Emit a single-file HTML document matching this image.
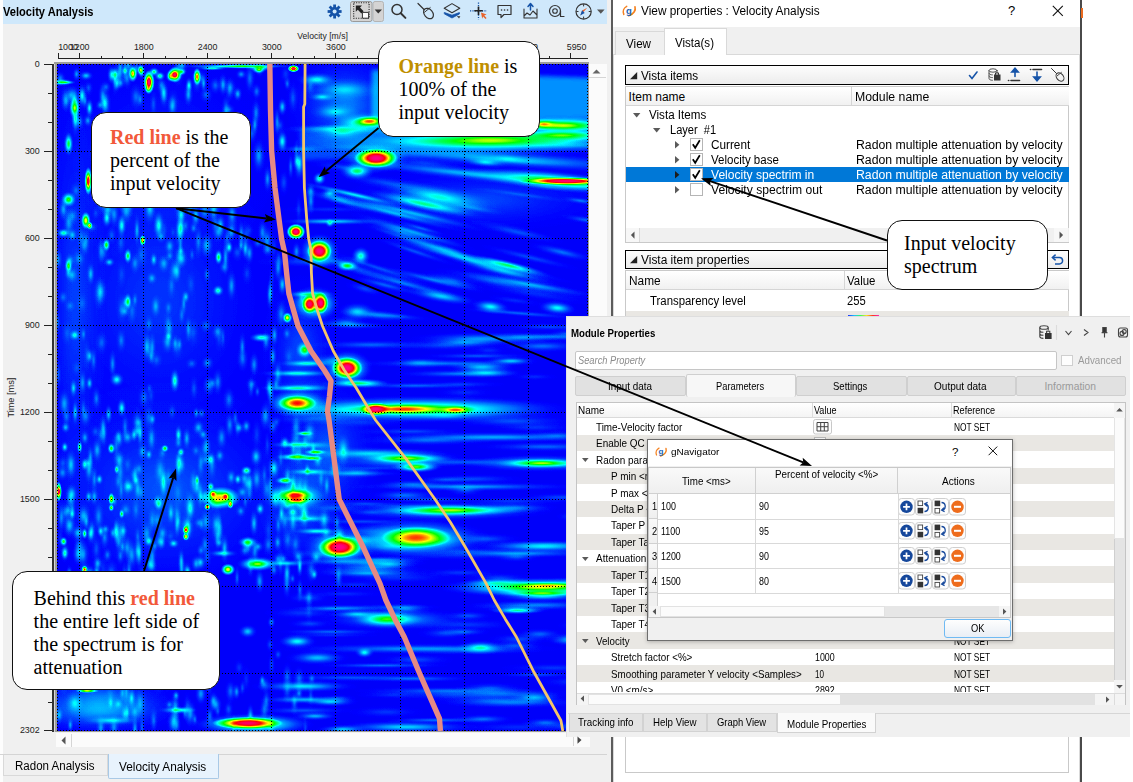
<!DOCTYPE html><html><head><meta charset="utf-8"><title>Velocity Analysis</title><style>

*{box-sizing:border-box;margin:0;padding:0}
html,body{width:1133px;height:782px;overflow:hidden;background:#fff}
body{position:relative;font-family:"Liberation Sans",sans-serif;font-size:12px;color:#000}
.a{position:absolute}
.t{position:absolute;white-space:nowrap;line-height:1}
.ser{font-family:"Liberation Serif",serif}
svg{overflow:visible}


.hdr{left:3px;top:0;width:604px;height:24px;background:#cfe8fb}
.lp{left:0;top:0;width:611px;height:782px;background:#f0f0f0}
.ax{font-size:8.9px;color:#222}
.sb{background:#fbfbfb}


.rw{left:613px;top:0;width:468px;height:782px;background:#fff}
.gh{border:1px solid #000;background:linear-gradient(#fdfdfd,#ececec);height:20px}
.th{background:linear-gradient(#fff,#f1f1f1);border-bottom:1px solid #d5d5d5}
.u{font-size:12px;letter-spacing:-.28px}
.cb{width:13px;height:13px;border:1px solid #b5b5b5;background:#fff}


.mp{left:566px;top:316px;width:564px;height:420.5px;background:#f0f0f0;border-top:1px solid #dedede;border-left:1px solid #e2e2e2}
.m{font-size:11px;letter-spacing:-.2px}
.mtab{position:absolute;top:376px;height:20px;background:#e1e1e1;border:1px solid #cfcfcf;border-radius:2px;font-size:11px;text-align:center;line-height:19px;letter-spacing:-.2px}
.btab{position:absolute;top:714px;height:18px;background:#e3e3e3;border:1px solid #d2d2d2;border-top:none;font-size:11px;text-align:center;line-height:16px;letter-spacing:-.15px}
.dlg{left:646.5px;top:439px;width:366px;height:201.5px;background:#f0f0f0;border:1px solid #6e6e6e;box-shadow:0 1px 4px rgba(0,0,0,.25)}
.dh{position:absolute;background:linear-gradient(#f9f9f9,#efefef);border-right:1px solid #d0d0d0;border-bottom:1px solid #d0d0d0;font-size:11px;text-align:center;letter-spacing:-.2px}


.co{position:absolute;background:#fff;border:1.2px solid #111;border-radius:15px}
.ct{position:absolute;white-space:nowrap;font-family:"Liberation Serif",serif;font-size:20px;line-height:23px;color:#000}
.ct b{font-weight:bold}

</style></head><body>
<div class="a lp"></div>
<div class="a" style="left:0;top:0;width:3px;height:782px;background:#fdfdfd"></div>
<div class="a hdr"></div>
<div class="t" style="left:3.3px;top:6.0px;font-size:12.2px;transform:scaleX(0.912);transform-origin:0 0;font-weight:bold;">Velocity Analysis</div>
<svg class="a" style="left:320px;top:0" width="290" height="24" viewBox="320 0 290 24" fill="none" stroke="#333" stroke-width="1.3" stroke-linecap="round" stroke-linejoin="round"><g transform="translate(334.6,11.5)" stroke="none" fill="#1553a8"><circle r="4.6"/><rect x="-1.4" y="-7" width="2.8" height="4" transform="rotate(0)"/><rect x="-1.4" y="-7" width="2.8" height="4" transform="rotate(45)"/><rect x="-1.4" y="-7" width="2.8" height="4" transform="rotate(90)"/><rect x="-1.4" y="-7" width="2.8" height="4" transform="rotate(135)"/><rect x="-1.4" y="-7" width="2.8" height="4" transform="rotate(180)"/><rect x="-1.4" y="-7" width="2.8" height="4" transform="rotate(225)"/><rect x="-1.4" y="-7" width="2.8" height="4" transform="rotate(270)"/><rect x="-1.4" y="-7" width="2.8" height="4" transform="rotate(315)"/><circle r="2" fill="#cfe8fb"/></g><rect x="350.5" y="1.5" width="21.5" height="20" rx="2" fill="#d4d4d4" stroke="#9a9a9a" stroke-width="1"/><rect x="373" y="1.5" width="10.5" height="20" rx="2" fill="#d4d4d4" stroke="#b4b4b4" stroke-width="1"/><path d="M374.6 9.4h7.4l-3.7 4.2z" fill="#333" stroke="none"/><rect x="353.7" y="2.7" width="15.4" height="15.6" stroke="#222" stroke-width="1.1" stroke-dasharray="1.1 1.3" fill="none" stroke-linecap="butt"/><rect x="362.8" y="12.4" width="5.8" height="5.8" fill="#fff" stroke="#333" stroke-width="1"/><path d="M355.8 5.6h6.2l-2 2 3.6 3.6-2.2 2.2-3.6-3.6-2 2z" fill="#222" stroke="none"/><circle cx="397" cy="9.5" r="5" stroke-width="1.5"/><path d="M400.8 13.3l4.6 4.6" stroke-width="2"/><path d="M418 3.5l6 6" stroke-width="1.2"/><ellipse cx="428.5" cy="13.5" rx="4.2" ry="5.8" transform="rotate(-40 428.5 13.5)" stroke-width="1.2"/><path d="M424.6 12.2l5.6-4.6" stroke-width="1"/><path d="M452 3.6l7.8 4.6-7.8 4.6-7.8-4.6z" stroke="#333" stroke-width="1.1"/><path d="M444.6 12.6l7.4 2.6 7.4-2.6v1.4l-7.4 4-7.4-4z" fill="#1553a8" stroke="#1553a8" stroke-width=".8"/><path d="M456.8 16l3.6.3-1.4 2.2z" fill="#444" stroke="none"/><path d="M478.5 2.5v17M470 10.8h17" stroke="#1553a8" stroke-width="1.3" stroke-dasharray="1.2 1.2" stroke-linecap="butt"/><path d="M478.5 6.6v8.4M474.3 10.8h8.4" stroke="#222" stroke-width="1.6" stroke-linecap="butt"/><path d="M481 12.6l5.6 2-2.4.9 2.4 2.6-1.1 1-2.4-2.6-.9 2.3z" fill="#e8622a" stroke="none"/><path d="M498 5.5h13v9h-7l-3 3v-3h-3z" stroke-width="1.2"/><path d="M501.5 10h.1M504.5 10h.1M507.5 10h.1" stroke-width="1.6"/><path d="M524 9v9h13V9M524 16l3-3 3 2 3-4 4 4" stroke-width="1.1"/><path d="M530.5 10V4.5M528 6.5l2.5-3 2.5 3" stroke="#1553a8" stroke-width="1.5"/><circle cx="555" cy="11" r="5.5" stroke-width="1.2"/><circle cx="555" cy="11" r="2.3" stroke-width="1.1"/><path d="M560.5 11v5.5h3.5" stroke-width="1.2"/><circle cx="583.6" cy="11.5" r="7.6" stroke-width="1.2"/><path d="M583.6 4.6v1.4M583.6 17v1.4M576.7 11.5h1.4M589.1 11.5h1.4" stroke-width="1"/><path d="M587.2 7.8l-5 2.6-1.8 5z" fill="#e8622a" stroke="none"/><path d="M580.2 15.5l1.9-5.2 2.6 2.7z" fill="#1553a8" stroke="none"/><path d="M597 9.6h7.6l-3.8 4.2z" fill="#555" stroke="none"/></svg>
<div class="t ax" style="left:294px;top:31.5px;width:57px;text-align:center;font-size:8.6px">Velocity [m/s]</div>
<div class="t ax" style="left:-10.3px;top:393.3px;width:44px;text-align:center;font-size:9.2px;transform:rotate(-90deg)">Time [ms]</div>
<div class="t ax" style="left:58.2px;top:42.5px">1000</div>
<div class="t ax" style="left:59.7px;top:42.5px;width:40px;text-align:center">1200</div>
<div class="t ax" style="left:123.8px;top:42.5px;width:40px;text-align:center">1800</div>
<div class="t ax" style="left:187.6px;top:42.5px;width:40px;text-align:center">2400</div>
<div class="t ax" style="left:251.8px;top:42.5px;width:40px;text-align:center">3000</div>
<div class="t ax" style="left:315.9px;top:42.5px;width:40px;text-align:center">3600</div>
<div class="t ax" style="left:380.0px;top:42.5px;width:40px;text-align:center">4200</div>
<div class="t ax" style="left:444.0px;top:42.5px;width:40px;text-align:center">4800</div>
<div class="t ax" style="left:508.2px;top:42.5px;width:40px;text-align:center">5400</div>
<div class="t ax" style="left:546.5px;top:42.5px;width:40px;text-align:right">5950</div>
<div class="t ax" style="left:0;top:60.0px;width:39.7px;text-align:right">0</div>
<div class="t ax" style="left:0;top:147.0px;width:39.7px;text-align:right">300</div>
<div class="t ax" style="left:0;top:234.0px;width:39.7px;text-align:right">600</div>
<div class="t ax" style="left:0;top:321.0px;width:39.7px;text-align:right">900</div>
<div class="t ax" style="left:0;top:408.0px;width:39.7px;text-align:right">1200</div>
<div class="t ax" style="left:0;top:495.0px;width:39.7px;text-align:right">1500</div>
<div class="t ax" style="left:0;top:582.0px;width:39.7px;text-align:right">1800</div>
<div class="t ax" style="left:0;top:669.0px;width:39.7px;text-align:right">2100</div>
<div class="t ax" style="left:0;top:726.0px;width:39.7px;text-align:right">2302</div>
<svg class="a" style="left:0;top:0" width="611" height="782" viewBox="0 0 611 782" shape-rendering="crispEdges"><path d="M58 58.5H588M58.5 53V59M79.5 53V59M101.5 56V59M122.5 56V59M143.5 53V59M165.5 56V59M186.5 56V59M207.5 53V59M229.5 56V59M250.5 56V59M271.5 53V59M293.5 56V59M314.5 56V59M335.5 53V59M357.5 56V59M378.5 56V59M400.5 53V59M421.5 56V59M442.5 56V59M464.5 53V59M485.5 56V59M506.5 56V59M528.5 53V59M549.5 56V59M570.5 56V59M570.5 53V59M52.9 64V731M44 64.5H54M48 93.5H54M48 122.5H54M44 151.5H54M48 180.5H54M48 209.5H54M44 238.5H54M48 267.5H54M48 296.5H54M44 325.5H54M48 354.5H54M48 383.5H54M44 412.5H54M48 441.5H54M48 470.5H54M44 499.5H54M48 528.5H54M48 557.5H54M44 586.5H54M48 615.5H54M48 644.5H54M44 673.5H54M48 702.5H54M44 730.5H54" stroke="#222" stroke-width="1" fill="none"/><rect x="52.2" y="64" width="1.5" height="667.5" fill="#333"/></svg>
<div class="a" style="left:53.7px;top:61.6px;width:535.3px;height:670.4px;background:#9c9c9c"></div>
<div class="a" style="left:53.7px;top:64px;width:1.8px;height:668px;background:#d8d8d8"></div>
<svg style="position:absolute;left:57px;top:64px;overflow:hidden" width="531" height="667" viewBox="57 64 531 667">
<defs><radialGradient id="bg"><stop offset="0" stop-color="#fff" stop-opacity="1"/><stop offset="0.12" stop-color="#fff" stop-opacity="0.9"/><stop offset="0.25" stop-color="#fff" stop-opacity="0.66"/><stop offset="0.4" stop-color="#fff" stop-opacity="0.4"/><stop offset="0.55" stop-color="#fff" stop-opacity="0.22"/><stop offset="0.7" stop-color="#fff" stop-opacity="0.1"/><stop offset="0.85" stop-color="#fff" stop-opacity="0.03"/><stop offset="1" stop-color="#fff" stop-opacity="0"/></radialGradient><radialGradient id="bf"><stop offset="0" stop-color="#fff" stop-opacity="1"/><stop offset="0.16" stop-color="#fff" stop-opacity="0.96"/><stop offset="0.3" stop-color="#fff" stop-opacity="0.84"/><stop offset="0.42" stop-color="#fff" stop-opacity="0.69"/><stop offset="0.54" stop-color="#fff" stop-opacity="0.52"/><stop offset="0.66" stop-color="#fff" stop-opacity="0.36"/><stop offset="0.78" stop-color="#fff" stop-opacity="0.21"/><stop offset="0.9" stop-color="#fff" stop-opacity="0.08"/><stop offset="1" stop-color="#fff" stop-opacity="0"/></radialGradient><radialGradient id="bm"><stop offset="0" stop-color="#fff" stop-opacity="1"/><stop offset="0.18" stop-color="#fff" stop-opacity="0.93"/><stop offset="0.32" stop-color="#fff" stop-opacity="0.72"/><stop offset="0.46" stop-color="#fff" stop-opacity="0.48"/><stop offset="0.6" stop-color="#fff" stop-opacity="0.28"/><stop offset="0.75" stop-color="#fff" stop-opacity="0.13"/><stop offset="0.9" stop-color="#fff" stop-opacity="0.04"/><stop offset="1" stop-color="#fff" stop-opacity="0"/></radialGradient><filter id="bl"><feGaussianBlur stdDeviation="2"/></filter><filter id="jet" filterUnits="userSpaceOnUse" x="57" y="64" width="531" height="667" color-interpolation-filters="sRGB"><feGaussianBlur stdDeviation="0.7"/><feComponentTransfer><feFuncR type="table" tableValues="0 0 0 0 0 0 0 0 0 0 0 0 0 0 0 0 0 0 0 0 0 0 0.11 0.22 0.33 0.44 0.55 0.663 0.775 0.887 1 1 1 1 1 1 1 1 1 1 1 1 1 1 1 1 1 1 1 1 1"/><feFuncG type="table" tableValues="0 0 0 0.125 0.25 0.375 0.5 0.6 0.7 0.8 0.9 1 1 1 1 1 1 1 1 1 1 1 1 1 1 1 1 1 1 1 1 0.9 0.8 0.7 0.6 0.5 0.4 0.3 0.2 0.1 0 0 0 0 0 0 0 0 0 0 0"/><feFuncB type="table" tableValues="0.86 0.93 1 1 1 1 1 1 1 1 1 1 0.89 0.78 0.67 0.56 0.45 0.36 0.27 0.18 0.09 0 0 0 0 0 0 0 0 0 0 0 0 0 0 0 0 0 0 0 0 0.06 0.12 0.18 0.24 0.3 0.35 0.4 0.45 0.5 0.55"/><feFuncA type="linear" slope="0" intercept="1"/></feComponentTransfer></filter></defs>
<g filter="url(#jet)">
<rect x="57" y="64" width="531" height="667" fill="#090909"/>
<ellipse cx="345.0" cy="105.0" rx="67.5" ry="60.0" fill="url(#bg)" fill-opacity="0.09"/>
<ellipse cx="330.0" cy="450.0" rx="60.0" ry="90.0" fill="url(#bg)" fill-opacity="0.06"/>
<ellipse cx="300.0" cy="500.0" rx="60.0" ry="90.0" fill="url(#bg)" fill-opacity="0.06"/>
<ellipse cx="100.0" cy="700.0" rx="90.0" ry="37.5" fill="url(#bg)" fill-opacity="0.08"/>
<ellipse cx="165.0" cy="490.0" rx="165.0" ry="127.5" fill="url(#bg)" fill-opacity="0.06"/>
<ellipse cx="160.0" cy="300.0" rx="150.0" ry="180.0" fill="url(#bg)" fill-opacity="0.04"/>
<ellipse cx="160.0" cy="160.0" rx="150.0" ry="135.0" fill="url(#bg)" fill-opacity="0.03"/>
<ellipse cx="480.0" cy="200.0" rx="165.0" ry="37.5" fill="url(#bg)" fill-opacity="0.05"/>
<ellipse cx="300.0" cy="350.0" rx="45.0" ry="90.0" fill="url(#bg)" fill-opacity="0.05"/>
<ellipse cx="75.0" cy="300.0" rx="37.5" ry="300.0" fill="url(#bg)" fill-opacity="0.04"/>
<ellipse cx="224.1" cy="267.3" rx="6.2" ry="8.4" fill="url(#bg)" fill-opacity="0.07"/>
<ellipse cx="181.9" cy="465.8" rx="5.0" ry="10.3" fill="url(#bg)" fill-opacity="0.06"/>
<ellipse cx="267.5" cy="179.2" rx="4.7" ry="15.4" fill="url(#bg)" fill-opacity="0.10"/>
<ellipse cx="308.9" cy="598.0" rx="5.4" ry="14.0" fill="url(#bg)" fill-opacity="0.08"/>
<ellipse cx="120.7" cy="533.5" rx="6.4" ry="19.7" fill="url(#bg)" fill-opacity="0.06"/>
<ellipse cx="170.6" cy="536.5" rx="6.5" ry="9.2" fill="url(#bg)" fill-opacity="0.03"/>
<ellipse cx="256.6" cy="91.5" rx="5.9" ry="10.2" fill="url(#bg)" fill-opacity="0.08"/>
<ellipse cx="188.4" cy="329.1" rx="4.2" ry="15.4" fill="url(#bg)" fill-opacity="0.09"/>
<ellipse cx="134.8" cy="712.0" rx="6.8" ry="12.1" fill="url(#bg)" fill-opacity="0.09"/>
<ellipse cx="89.0" cy="469.4" rx="5.7" ry="16.1" fill="url(#bg)" fill-opacity="0.11"/>
<ellipse cx="158.2" cy="619.2" rx="6.0" ry="7.2" fill="url(#bg)" fill-opacity="0.06"/>
<ellipse cx="84.9" cy="437.7" rx="5.0" ry="8.9" fill="url(#bg)" fill-opacity="0.10"/>
<ellipse cx="75.4" cy="121.2" rx="4.3" ry="18.7" fill="url(#bg)" fill-opacity="0.08"/>
<ellipse cx="181.7" cy="315.0" rx="3.9" ry="12.9" fill="url(#bg)" fill-opacity="0.06"/>
<ellipse cx="153.2" cy="145.8" rx="7.3" ry="17.3" fill="url(#bg)" fill-opacity="0.07"/>
<ellipse cx="201.2" cy="78.1" rx="7.3" ry="9.1" fill="url(#bg)" fill-opacity="0.06"/>
<ellipse cx="247.9" cy="544.3" rx="6.8" ry="9.4" fill="url(#bg)" fill-opacity="0.09"/>
<ellipse cx="70.3" cy="725.1" rx="3.6" ry="9.1" fill="url(#bg)" fill-opacity="0.11"/>
<ellipse cx="229.5" cy="90.1" rx="4.5" ry="15.3" fill="url(#bg)" fill-opacity="0.04"/>
<ellipse cx="288.8" cy="356.7" rx="6.9" ry="13.5" fill="url(#bg)" fill-opacity="0.04"/>
<ellipse cx="256.1" cy="66.5" rx="6.7" ry="10.8" fill="url(#bg)" fill-opacity="0.04"/>
<ellipse cx="112.6" cy="364.0" rx="4.5" ry="16.6" fill="url(#bg)" fill-opacity="0.09"/>
<ellipse cx="128.9" cy="203.8" rx="6.2" ry="14.8" fill="url(#bg)" fill-opacity="0.10"/>
<ellipse cx="111.7" cy="153.0" rx="5.7" ry="19.8" fill="url(#bg)" fill-opacity="0.07"/>
<ellipse cx="153.4" cy="104.3" rx="4.6" ry="16.4" fill="url(#bg)" fill-opacity="0.05"/>
<ellipse cx="146.7" cy="346.8" rx="5.0" ry="17.3" fill="url(#bg)" fill-opacity="0.11"/>
<ellipse cx="217.8" cy="382.1" rx="5.8" ry="15.1" fill="url(#bg)" fill-opacity="0.09"/>
<ellipse cx="286.9" cy="333.6" rx="4.9" ry="7.6" fill="url(#bg)" fill-opacity="0.07"/>
<ellipse cx="172.8" cy="178.4" rx="6.1" ry="19.0" fill="url(#bg)" fill-opacity="0.10"/>
<ellipse cx="299.1" cy="678.8" rx="7.2" ry="15.6" fill="url(#bg)" fill-opacity="0.07"/>
<ellipse cx="217.8" cy="711.3" rx="3.7" ry="7.4" fill="url(#bg)" fill-opacity="0.06"/>
<ellipse cx="212.6" cy="497.8" rx="4.0" ry="14.8" fill="url(#bg)" fill-opacity="0.08"/>
<ellipse cx="239.2" cy="667.6" rx="6.8" ry="10.6" fill="url(#bg)" fill-opacity="0.04"/>
<ellipse cx="246.2" cy="679.2" rx="5.9" ry="18.8" fill="url(#bg)" fill-opacity="0.03"/>
<ellipse cx="247.4" cy="483.9" rx="6.9" ry="11.4" fill="url(#bg)" fill-opacity="0.10"/>
<ellipse cx="119.4" cy="73.4" rx="7.1" ry="15.8" fill="url(#bg)" fill-opacity="0.10"/>
<ellipse cx="85.1" cy="101.0" rx="3.6" ry="10.6" fill="url(#bg)" fill-opacity="0.08"/>
<ellipse cx="77.0" cy="368.1" rx="7.1" ry="10.3" fill="url(#bg)" fill-opacity="0.03"/>
<ellipse cx="88.8" cy="578.0" rx="7.2" ry="17.7" fill="url(#bg)" fill-opacity="0.07"/>
<ellipse cx="129.0" cy="573.0" rx="4.1" ry="18.0" fill="url(#bg)" fill-opacity="0.11"/>
<ellipse cx="152.2" cy="556.2" rx="5.1" ry="17.0" fill="url(#bg)" fill-opacity="0.09"/>
<ellipse cx="167.0" cy="126.6" rx="7.1" ry="18.1" fill="url(#bg)" fill-opacity="0.05"/>
<ellipse cx="113.1" cy="593.4" rx="5.1" ry="15.2" fill="url(#bg)" fill-opacity="0.04"/>
<ellipse cx="296.2" cy="151.9" rx="3.9" ry="16.5" fill="url(#bg)" fill-opacity="0.06"/>
<ellipse cx="275.9" cy="384.4" rx="4.7" ry="8.9" fill="url(#bg)" fill-opacity="0.09"/>
<ellipse cx="151.8" cy="278.2" rx="6.1" ry="7.2" fill="url(#bg)" fill-opacity="0.10"/>
<ellipse cx="287.6" cy="478.8" rx="4.0" ry="17.2" fill="url(#bg)" fill-opacity="0.05"/>
<ellipse cx="128.7" cy="625.1" rx="7.1" ry="16.6" fill="url(#bg)" fill-opacity="0.08"/>
<ellipse cx="159.8" cy="502.4" rx="7.3" ry="10.8" fill="url(#bg)" fill-opacity="0.08"/>
<ellipse cx="273.9" cy="569.6" rx="5.6" ry="9.4" fill="url(#bg)" fill-opacity="0.09"/>
<ellipse cx="187.2" cy="707.7" rx="5.0" ry="19.5" fill="url(#bg)" fill-opacity="0.05"/>
<ellipse cx="285.7" cy="74.1" rx="7.4" ry="12.8" fill="url(#bg)" fill-opacity="0.04"/>
<ellipse cx="166.4" cy="137.2" rx="4.7" ry="8.2" fill="url(#bg)" fill-opacity="0.04"/>
<ellipse cx="92.0" cy="530.7" rx="3.7" ry="10.7" fill="url(#bg)" fill-opacity="0.06"/>
<ellipse cx="259.7" cy="68.4" rx="4.9" ry="11.2" fill="url(#bg)" fill-opacity="0.08"/>
<ellipse cx="104.6" cy="537.6" rx="5.7" ry="13.8" fill="url(#bg)" fill-opacity="0.08"/>
<ellipse cx="57.6" cy="259.7" rx="5.6" ry="13.5" fill="url(#bg)" fill-opacity="0.10"/>
<ellipse cx="122.4" cy="693.1" rx="4.2" ry="10.6" fill="url(#bg)" fill-opacity="0.09"/>
<ellipse cx="127.5" cy="464.3" rx="6.1" ry="11.4" fill="url(#bg)" fill-opacity="0.04"/>
<ellipse cx="286.8" cy="585.4" rx="5.4" ry="17.2" fill="url(#bg)" fill-opacity="0.07"/>
<ellipse cx="75.6" cy="598.3" rx="4.1" ry="16.7" fill="url(#bg)" fill-opacity="0.03"/>
<ellipse cx="124.5" cy="311.2" rx="6.8" ry="7.4" fill="url(#bg)" fill-opacity="0.10"/>
<ellipse cx="293.5" cy="448.9" rx="5.1" ry="17.9" fill="url(#bg)" fill-opacity="0.10"/>
<ellipse cx="311.5" cy="265.5" rx="4.9" ry="9.9" fill="url(#bg)" fill-opacity="0.04"/>
<ellipse cx="211.9" cy="465.0" rx="5.8" ry="18.2" fill="url(#bg)" fill-opacity="0.07"/>
<ellipse cx="111.7" cy="235.2" rx="5.6" ry="10.9" fill="url(#bg)" fill-opacity="0.05"/>
<ellipse cx="231.2" cy="232.6" rx="4.9" ry="9.8" fill="url(#bg)" fill-opacity="0.08"/>
<ellipse cx="164.3" cy="230.0" rx="4.3" ry="14.7" fill="url(#bg)" fill-opacity="0.03"/>
<ellipse cx="271.4" cy="622.2" rx="4.7" ry="7.1" fill="url(#bg)" fill-opacity="0.10"/>
<ellipse cx="94.1" cy="576.9" rx="3.6" ry="7.1" fill="url(#bg)" fill-opacity="0.07"/>
<ellipse cx="244.6" cy="550.5" rx="6.2" ry="7.9" fill="url(#bg)" fill-opacity="0.07"/>
<ellipse cx="284.7" cy="521.1" rx="6.0" ry="13.0" fill="url(#bg)" fill-opacity="0.07"/>
<ellipse cx="148.5" cy="417.1" rx="7.4" ry="17.5" fill="url(#bg)" fill-opacity="0.06"/>
<ellipse cx="299.7" cy="485.4" rx="5.9" ry="13.9" fill="url(#bg)" fill-opacity="0.08"/>
<ellipse cx="79.3" cy="121.6" rx="5.6" ry="9.6" fill="url(#bg)" fill-opacity="0.10"/>
<ellipse cx="137.2" cy="162.9" rx="6.3" ry="9.2" fill="url(#bg)" fill-opacity="0.08"/>
<ellipse cx="116.9" cy="83.8" rx="3.5" ry="9.1" fill="url(#bg)" fill-opacity="0.09"/>
<ellipse cx="175.2" cy="343.5" rx="4.4" ry="10.4" fill="url(#bg)" fill-opacity="0.09"/>
<ellipse cx="140.2" cy="99.5" rx="4.5" ry="9.8" fill="url(#bg)" fill-opacity="0.08"/>
<ellipse cx="277.8" cy="374.2" rx="5.7" ry="16.8" fill="url(#bg)" fill-opacity="0.10"/>
<ellipse cx="296.6" cy="438.9" rx="7.5" ry="16.7" fill="url(#bg)" fill-opacity="0.08"/>
<ellipse cx="207.4" cy="363.0" rx="7.1" ry="8.2" fill="url(#bg)" fill-opacity="0.09"/>
<ellipse cx="81.2" cy="237.4" rx="5.0" ry="15.7" fill="url(#bg)" fill-opacity="0.06"/>
<ellipse cx="159.7" cy="541.5" rx="6.7" ry="9.7" fill="url(#bg)" fill-opacity="0.10"/>
<ellipse cx="117.3" cy="532.6" rx="4.7" ry="16.9" fill="url(#bg)" fill-opacity="0.10"/>
<ellipse cx="277.9" cy="559.2" rx="6.1" ry="7.9" fill="url(#bg)" fill-opacity="0.09"/>
<ellipse cx="114.2" cy="501.1" rx="4.0" ry="7.0" fill="url(#bg)" fill-opacity="0.10"/>
<ellipse cx="118.1" cy="438.7" rx="7.3" ry="8.5" fill="url(#bg)" fill-opacity="0.04"/>
<ellipse cx="258.8" cy="155.8" rx="7.4" ry="19.0" fill="url(#bg)" fill-opacity="0.11"/>
<ellipse cx="120.5" cy="83.1" rx="5.3" ry="7.2" fill="url(#bg)" fill-opacity="0.10"/>
<ellipse cx="310.6" cy="191.1" rx="6.4" ry="10.0" fill="url(#bg)" fill-opacity="0.09"/>
<ellipse cx="291.2" cy="502.1" rx="6.6" ry="8.2" fill="url(#bg)" fill-opacity="0.10"/>
<ellipse cx="237.4" cy="427.4" rx="4.1" ry="13.5" fill="url(#bg)" fill-opacity="0.06"/>
<ellipse cx="185.6" cy="225.9" rx="4.5" ry="9.2" fill="url(#bg)" fill-opacity="0.06"/>
<ellipse cx="183.8" cy="303.7" rx="3.6" ry="14.7" fill="url(#bg)" fill-opacity="0.08"/>
<ellipse cx="70.0" cy="305.9" rx="6.9" ry="7.4" fill="url(#bg)" fill-opacity="0.05"/>
<ellipse cx="236.6" cy="691.8" rx="4.5" ry="9.8" fill="url(#bg)" fill-opacity="0.11"/>
<ellipse cx="64.3" cy="403.7" rx="7.0" ry="16.7" fill="url(#bg)" fill-opacity="0.11"/>
<ellipse cx="201.4" cy="524.0" rx="3.5" ry="8.4" fill="url(#bg)" fill-opacity="0.07"/>
<ellipse cx="269.0" cy="387.5" rx="5.0" ry="14.5" fill="url(#bg)" fill-opacity="0.11"/>
<ellipse cx="100.0" cy="292.2" rx="4.1" ry="18.8" fill="url(#bg)" fill-opacity="0.05"/>
<ellipse cx="172.3" cy="106.3" rx="5.6" ry="13.0" fill="url(#bg)" fill-opacity="0.10"/>
<ellipse cx="120.0" cy="584.1" rx="5.2" ry="11.9" fill="url(#bg)" fill-opacity="0.10"/>
<ellipse cx="137.0" cy="230.6" rx="3.8" ry="18.1" fill="url(#bg)" fill-opacity="0.11"/>
<ellipse cx="256.1" cy="112.8" rx="5.4" ry="16.7" fill="url(#bg)" fill-opacity="0.09"/>
<ellipse cx="277.1" cy="121.7" rx="3.8" ry="19.3" fill="url(#bg)" fill-opacity="0.09"/>
<ellipse cx="124.9" cy="713.9" rx="5.2" ry="11.6" fill="url(#bg)" fill-opacity="0.07"/>
<ellipse cx="68.7" cy="223.0" rx="6.7" ry="18.1" fill="url(#bg)" fill-opacity="0.09"/>
<ellipse cx="299.7" cy="452.3" rx="5.2" ry="18.6" fill="url(#bg)" fill-opacity="0.07"/>
<ellipse cx="311.8" cy="678.6" rx="4.9" ry="7.1" fill="url(#bg)" fill-opacity="0.08"/>
<ellipse cx="180.5" cy="244.9" rx="3.6" ry="15.4" fill="url(#bg)" fill-opacity="0.07"/>
<ellipse cx="96.4" cy="398.6" rx="5.2" ry="14.1" fill="url(#bg)" fill-opacity="0.08"/>
<ellipse cx="254.8" cy="125.0" rx="4.2" ry="12.3" fill="url(#bg)" fill-opacity="0.10"/>
<ellipse cx="121.2" cy="489.4" rx="3.6" ry="16.4" fill="url(#bg)" fill-opacity="0.07"/>
<ellipse cx="256.8" cy="434.4" rx="6.2" ry="19.4" fill="url(#bg)" fill-opacity="0.04"/>
<ellipse cx="178.4" cy="443.1" rx="5.2" ry="7.1" fill="url(#bg)" fill-opacity="0.08"/>
<ellipse cx="242.3" cy="688.0" rx="3.8" ry="10.1" fill="url(#bg)" fill-opacity="0.06"/>
<ellipse cx="266.0" cy="341.4" rx="5.4" ry="12.4" fill="url(#bg)" fill-opacity="0.09"/>
<ellipse cx="152.2" cy="566.0" rx="6.0" ry="8.9" fill="url(#bg)" fill-opacity="0.07"/>
<ellipse cx="267.3" cy="445.0" rx="3.7" ry="17.4" fill="url(#bg)" fill-opacity="0.04"/>
<ellipse cx="264.1" cy="684.2" rx="7.5" ry="10.1" fill="url(#bg)" fill-opacity="0.08"/>
<ellipse cx="277.7" cy="542.5" rx="5.0" ry="10.1" fill="url(#bg)" fill-opacity="0.11"/>
<ellipse cx="305.4" cy="729.1" rx="3.6" ry="17.4" fill="url(#bg)" fill-opacity="0.04"/>
<ellipse cx="310.8" cy="200.8" rx="5.4" ry="17.1" fill="url(#bg)" fill-opacity="0.10"/>
<ellipse cx="160.1" cy="471.1" rx="7.1" ry="18.4" fill="url(#bg)" fill-opacity="0.09"/>
<ellipse cx="60.2" cy="538.8" rx="4.6" ry="15.8" fill="url(#bg)" fill-opacity="0.03"/>
<ellipse cx="274.4" cy="335.0" rx="4.5" ry="13.0" fill="url(#bg)" fill-opacity="0.11"/>
<ellipse cx="207.0" cy="556.4" rx="5.5" ry="13.9" fill="url(#bg)" fill-opacity="0.06"/>
<ellipse cx="176.9" cy="525.1" rx="3.6" ry="16.1" fill="url(#bg)" fill-opacity="0.08"/>
<ellipse cx="63.5" cy="683.0" rx="6.4" ry="15.1" fill="url(#bg)" fill-opacity="0.05"/>
<ellipse cx="100.8" cy="434.9" rx="5.7" ry="14.5" fill="url(#bg)" fill-opacity="0.06"/>
<ellipse cx="123.3" cy="595.3" rx="5.9" ry="17.0" fill="url(#bg)" fill-opacity="0.05"/>
<ellipse cx="162.4" cy="453.0" rx="5.8" ry="8.8" fill="url(#bg)" fill-opacity="0.06"/>
<ellipse cx="62.8" cy="463.3" rx="6.9" ry="10.2" fill="url(#bg)" fill-opacity="0.05"/>
<ellipse cx="218.2" cy="232.5" rx="7.0" ry="11.6" fill="url(#bg)" fill-opacity="0.09"/>
<ellipse cx="179.7" cy="154.6" rx="6.2" ry="16.6" fill="url(#bg)" fill-opacity="0.08"/>
<ellipse cx="121.4" cy="274.3" rx="6.0" ry="17.3" fill="url(#bg)" fill-opacity="0.03"/>
<ellipse cx="72.4" cy="508.8" rx="4.1" ry="11.9" fill="url(#bg)" fill-opacity="0.07"/>
<ellipse cx="278.3" cy="525.0" rx="4.0" ry="13.0" fill="url(#bg)" fill-opacity="0.08"/>
<ellipse cx="161.1" cy="147.1" rx="4.6" ry="7.2" fill="url(#bg)" fill-opacity="0.09"/>
<ellipse cx="146.7" cy="534.2" rx="7.4" ry="17.0" fill="url(#bg)" fill-opacity="0.09"/>
<ellipse cx="167.4" cy="680.2" rx="5.7" ry="15.2" fill="url(#bg)" fill-opacity="0.04"/>
<ellipse cx="200.8" cy="463.4" rx="4.8" ry="18.4" fill="url(#bg)" fill-opacity="0.07"/>
<ellipse cx="299.3" cy="166.5" rx="6.6" ry="17.2" fill="url(#bg)" fill-opacity="0.10"/>
<ellipse cx="164.9" cy="144.7" rx="5.8" ry="8.3" fill="url(#bg)" fill-opacity="0.05"/>
<ellipse cx="193.7" cy="228.2" rx="4.8" ry="7.4" fill="url(#bg)" fill-opacity="0.08"/>
<ellipse cx="254.0" cy="365.1" rx="5.0" ry="16.5" fill="url(#bg)" fill-opacity="0.06"/>
<ellipse cx="219.0" cy="526.5" rx="4.1" ry="18.8" fill="url(#bg)" fill-opacity="0.08"/>
<ellipse cx="61.3" cy="517.8" rx="4.6" ry="19.3" fill="url(#bg)" fill-opacity="0.09"/>
<ellipse cx="217.8" cy="331.7" rx="7.3" ry="10.3" fill="url(#bg)" fill-opacity="0.09"/>
<ellipse cx="155.7" cy="306.3" rx="5.7" ry="13.1" fill="url(#bg)" fill-opacity="0.10"/>
<ellipse cx="149.7" cy="207.3" rx="7.3" ry="19.6" fill="url(#bg)" fill-opacity="0.11"/>
<ellipse cx="114.1" cy="214.4" rx="6.4" ry="15.2" fill="url(#bg)" fill-opacity="0.09"/>
<ellipse cx="148.8" cy="324.1" rx="5.6" ry="10.7" fill="url(#bg)" fill-opacity="0.06"/>
<ellipse cx="120.4" cy="555.7" rx="4.9" ry="10.4" fill="url(#bg)" fill-opacity="0.08"/>
<ellipse cx="220.7" cy="528.0" rx="3.7" ry="13.4" fill="url(#bg)" fill-opacity="0.04"/>
<ellipse cx="262.2" cy="680.5" rx="3.7" ry="7.5" fill="url(#bg)" fill-opacity="0.11"/>
<ellipse cx="146.8" cy="594.3" rx="7.0" ry="16.6" fill="url(#bg)" fill-opacity="0.03"/>
<ellipse cx="274.0" cy="247.4" rx="5.1" ry="18.2" fill="url(#bg)" fill-opacity="0.04"/>
<ellipse cx="158.5" cy="683.3" rx="7.0" ry="14.4" fill="url(#bg)" fill-opacity="0.04"/>
<ellipse cx="175.1" cy="622.0" rx="7.0" ry="15.0" fill="url(#bg)" fill-opacity="0.10"/>
<ellipse cx="251.8" cy="133.8" rx="6.3" ry="12.6" fill="url(#bg)" fill-opacity="0.06"/>
<ellipse cx="87.0" cy="355.3" rx="5.0" ry="18.5" fill="url(#bg)" fill-opacity="0.04"/>
<ellipse cx="301.6" cy="298.3" rx="4.5" ry="9.1" fill="url(#bg)" fill-opacity="0.07"/>
<ellipse cx="181.6" cy="258.6" rx="7.0" ry="11.6" fill="url(#bg)" fill-opacity="0.11"/>
<ellipse cx="82.6" cy="382.9" rx="4.9" ry="14.5" fill="url(#bg)" fill-opacity="0.09"/>
<ellipse cx="110.5" cy="695.8" rx="6.7" ry="17.7" fill="url(#bg)" fill-opacity="0.03"/>
<ellipse cx="133.6" cy="475.5" rx="4.9" ry="9.4" fill="url(#bg)" fill-opacity="0.04"/>
<ellipse cx="179.5" cy="344.4" rx="3.5" ry="8.7" fill="url(#bg)" fill-opacity="0.08"/>
<ellipse cx="97.3" cy="681.2" rx="4.4" ry="9.8" fill="url(#bg)" fill-opacity="0.06"/>
<ellipse cx="272.8" cy="356.5" rx="4.6" ry="14.5" fill="url(#bg)" fill-opacity="0.11"/>
<ellipse cx="94.4" cy="479.5" rx="4.4" ry="16.4" fill="url(#bg)" fill-opacity="0.08"/>
<ellipse cx="152.1" cy="520.1" rx="5.4" ry="15.9" fill="url(#bg)" fill-opacity="0.07"/>
<ellipse cx="168.5" cy="307.9" rx="4.9" ry="8.8" fill="url(#bg)" fill-opacity="0.06"/>
<ellipse cx="81.0" cy="616.0" rx="3.7" ry="18.8" fill="url(#bg)" fill-opacity="0.05"/>
<ellipse cx="63.4" cy="209.4" rx="5.8" ry="13.3" fill="url(#bg)" fill-opacity="0.11"/>
<ellipse cx="181.2" cy="561.1" rx="4.0" ry="15.0" fill="url(#bg)" fill-opacity="0.11"/>
<ellipse cx="276.6" cy="422.2" rx="5.8" ry="7.6" fill="url(#bg)" fill-opacity="0.05"/>
<ellipse cx="83.4" cy="409.2" rx="3.9" ry="15.1" fill="url(#bg)" fill-opacity="0.06"/>
<ellipse cx="278.2" cy="267.9" rx="5.4" ry="17.6" fill="url(#bg)" fill-opacity="0.10"/>
<ellipse cx="265.4" cy="415.8" rx="7.2" ry="17.0" fill="url(#bg)" fill-opacity="0.11"/>
<ellipse cx="95.9" cy="213.3" rx="5.0" ry="8.2" fill="url(#bg)" fill-opacity="0.04"/>
<ellipse cx="249.9" cy="78.3" rx="6.4" ry="18.9" fill="url(#bg)" fill-opacity="0.08"/>
<ellipse cx="119.4" cy="439.3" rx="4.9" ry="11.6" fill="url(#bg)" fill-opacity="0.08"/>
<ellipse cx="128.6" cy="596.7" rx="4.3" ry="10.4" fill="url(#bg)" fill-opacity="0.09"/>
<ellipse cx="237.1" cy="578.1" rx="3.5" ry="14.8" fill="url(#bg)" fill-opacity="0.07"/>
<ellipse cx="234.0" cy="128.7" rx="4.2" ry="14.2" fill="url(#bg)" fill-opacity="0.08"/>
<ellipse cx="270.7" cy="392.0" rx="4.4" ry="16.5" fill="url(#bg)" fill-opacity="0.11"/>
<ellipse cx="93.2" cy="151.9" rx="5.5" ry="15.0" fill="url(#bg)" fill-opacity="0.04"/>
<ellipse cx="135.0" cy="299.8" rx="3.7" ry="9.0" fill="url(#bg)" fill-opacity="0.07"/>
<ellipse cx="233.9" cy="725.3" rx="3.5" ry="12.1" fill="url(#bg)" fill-opacity="0.11"/>
<ellipse cx="117.3" cy="82.0" rx="4.7" ry="11.5" fill="url(#bg)" fill-opacity="0.08"/>
<ellipse cx="142.5" cy="451.4" rx="6.1" ry="10.1" fill="url(#bg)" fill-opacity="0.10"/>
<ellipse cx="190.3" cy="713.7" rx="7.0" ry="16.7" fill="url(#bg)" fill-opacity="0.11"/>
<ellipse cx="278.1" cy="654.5" rx="5.1" ry="7.2" fill="url(#bg)" fill-opacity="0.06"/>
<ellipse cx="223.0" cy="337.8" rx="3.5" ry="14.6" fill="url(#bg)" fill-opacity="0.05"/>
<ellipse cx="287.2" cy="676.0" rx="6.5" ry="15.9" fill="url(#bg)" fill-opacity="0.07"/>
<ellipse cx="94.3" cy="496.6" rx="5.0" ry="10.4" fill="url(#bg)" fill-opacity="0.11"/>
<ellipse cx="220.7" cy="152.1" rx="3.8" ry="18.0" fill="url(#bg)" fill-opacity="0.08"/>
<ellipse cx="221.6" cy="437.4" rx="6.3" ry="14.7" fill="url(#bg)" fill-opacity="0.09"/>
<ellipse cx="124.6" cy="579.1" rx="3.8" ry="18.7" fill="url(#bg)" fill-opacity="0.11"/>
<ellipse cx="181.6" cy="569.6" rx="3.8" ry="19.3" fill="url(#bg)" fill-opacity="0.10"/>
<ellipse cx="57.3" cy="322.3" rx="3.8" ry="13.7" fill="url(#bg)" fill-opacity="0.08"/>
<ellipse cx="178.0" cy="493.1" rx="7.2" ry="18.6" fill="url(#bg)" fill-opacity="0.04"/>
<ellipse cx="196.2" cy="413.1" rx="3.7" ry="7.1" fill="url(#bg)" fill-opacity="0.11"/>
<ellipse cx="287.3" cy="83.8" rx="4.3" ry="8.5" fill="url(#bg)" fill-opacity="0.08"/>
<ellipse cx="298.7" cy="209.5" rx="4.4" ry="19.5" fill="url(#bg)" fill-opacity="0.04"/>
<ellipse cx="87.8" cy="120.6" rx="5.3" ry="7.4" fill="url(#bg)" fill-opacity="0.10"/>
<ellipse cx="226.9" cy="249.2" rx="5.9" ry="16.5" fill="url(#bg)" fill-opacity="0.03"/>
<ellipse cx="150.0" cy="142.4" rx="4.0" ry="18.7" fill="url(#bg)" fill-opacity="0.06"/>
<ellipse cx="225.5" cy="258.4" rx="4.0" ry="19.8" fill="url(#bg)" fill-opacity="0.10"/>
<ellipse cx="217.3" cy="539.8" rx="4.1" ry="13.3" fill="url(#bg)" fill-opacity="0.05"/>
<ellipse cx="167.3" cy="588.6" rx="4.9" ry="7.9" fill="url(#bg)" fill-opacity="0.06"/>
<ellipse cx="173.1" cy="232.4" rx="4.1" ry="7.5" fill="url(#bg)" fill-opacity="0.03"/>
<ellipse cx="137.3" cy="550.7" rx="4.0" ry="15.3" fill="url(#bg)" fill-opacity="0.09"/>
<ellipse cx="267.8" cy="249.7" rx="6.6" ry="7.4" fill="url(#bg)" fill-opacity="0.07"/>
<ellipse cx="141.1" cy="492.4" rx="4.5" ry="10.4" fill="url(#bg)" fill-opacity="0.06"/>
<ellipse cx="209.1" cy="682.9" rx="5.0" ry="16.1" fill="url(#bg)" fill-opacity="0.09"/>
<ellipse cx="64.9" cy="552.1" rx="5.5" ry="11.2" fill="url(#bg)" fill-opacity="0.11"/>
<ellipse cx="65.0" cy="97.4" rx="7.2" ry="17.8" fill="url(#bg)" fill-opacity="0.04"/>
<ellipse cx="119.2" cy="462.1" rx="5.9" ry="16.0" fill="url(#bg)" fill-opacity="0.07"/>
<ellipse cx="279.9" cy="125.5" rx="6.5" ry="10.9" fill="url(#bg)" fill-opacity="0.05"/>
<ellipse cx="292.9" cy="98.0" rx="5.9" ry="18.7" fill="url(#bg)" fill-opacity="0.06"/>
<ellipse cx="268.4" cy="544.8" rx="6.7" ry="12.1" fill="url(#bg)" fill-opacity="0.08"/>
<ellipse cx="269.3" cy="295.2" rx="3.6" ry="17.8" fill="url(#bg)" fill-opacity="0.07"/>
<ellipse cx="132.9" cy="608.1" rx="6.8" ry="10.3" fill="url(#bg)" fill-opacity="0.09"/>
<ellipse cx="242.3" cy="346.6" rx="4.2" ry="16.0" fill="url(#bg)" fill-opacity="0.09"/>
<ellipse cx="190.9" cy="283.9" rx="6.2" ry="16.3" fill="url(#bg)" fill-opacity="0.03"/>
<ellipse cx="249.9" cy="483.6" rx="4.4" ry="16.3" fill="url(#bg)" fill-opacity="0.11"/>
<ellipse cx="271.5" cy="665.0" rx="4.6" ry="16.3" fill="url(#bg)" fill-opacity="0.05"/>
<ellipse cx="295.1" cy="427.0" rx="6.1" ry="15.8" fill="url(#bg)" fill-opacity="0.05"/>
<ellipse cx="148.4" cy="347.6" rx="3.8" ry="16.2" fill="url(#bg)" fill-opacity="0.04"/>
<ellipse cx="184.8" cy="713.1" rx="3.9" ry="9.9" fill="url(#bg)" fill-opacity="0.07"/>
<ellipse cx="83.5" cy="334.2" rx="3.5" ry="8.7" fill="url(#bg)" fill-opacity="0.07"/>
<ellipse cx="305.4" cy="515.2" rx="5.1" ry="17.1" fill="url(#bg)" fill-opacity="0.05"/>
<ellipse cx="76.1" cy="190.5" rx="7.2" ry="10.7" fill="url(#bg)" fill-opacity="0.06"/>
<ellipse cx="310.8" cy="695.8" rx="4.1" ry="14.2" fill="url(#bg)" fill-opacity="0.05"/>
<ellipse cx="296.9" cy="425.9" rx="5.7" ry="16.6" fill="url(#bg)" fill-opacity="0.05"/>
<ellipse cx="144.0" cy="397.4" rx="7.3" ry="13.5" fill="url(#bg)" fill-opacity="0.07"/>
<ellipse cx="298.4" cy="556.6" rx="6.9" ry="8.5" fill="url(#bg)" fill-opacity="0.11"/>
<ellipse cx="249.2" cy="230.7" rx="5.9" ry="9.1" fill="url(#bg)" fill-opacity="0.03"/>
<ellipse cx="287.2" cy="690.0" rx="6.5" ry="17.5" fill="url(#bg)" fill-opacity="0.06"/>
<ellipse cx="101.0" cy="250.6" rx="4.6" ry="18.5" fill="url(#bg)" fill-opacity="0.07"/>
<ellipse cx="272.0" cy="276.5" rx="4.0" ry="13.6" fill="url(#bg)" fill-opacity="0.04"/>
<ellipse cx="251.1" cy="387.6" rx="4.5" ry="15.5" fill="url(#bg)" fill-opacity="0.06"/>
<ellipse cx="268.5" cy="530.8" rx="5.7" ry="17.5" fill="url(#bg)" fill-opacity="0.04"/>
<ellipse cx="118.2" cy="704.1" rx="6.3" ry="7.2" fill="url(#bg)" fill-opacity="0.09"/>
<ellipse cx="168.2" cy="477.3" rx="5.2" ry="12.5" fill="url(#bg)" fill-opacity="0.06"/>
<ellipse cx="264.2" cy="709.7" rx="5.9" ry="16.5" fill="url(#bg)" fill-opacity="0.07"/>
<ellipse cx="169.6" cy="246.3" rx="6.0" ry="9.7" fill="url(#bg)" fill-opacity="0.11"/>
<ellipse cx="267.1" cy="240.9" rx="7.4" ry="19.3" fill="url(#bg)" fill-opacity="0.10"/>
<ellipse cx="92.3" cy="678.4" rx="4.4" ry="19.7" fill="url(#bg)" fill-opacity="0.07"/>
<ellipse cx="192.9" cy="332.4" rx="7.5" ry="18.0" fill="url(#bg)" fill-opacity="0.04"/>
<ellipse cx="127.5" cy="437.2" rx="7.1" ry="9.0" fill="url(#bg)" fill-opacity="0.11"/>
<ellipse cx="167.6" cy="342.0" rx="6.8" ry="12.7" fill="url(#bg)" fill-opacity="0.11"/>
<ellipse cx="278.8" cy="258.3" rx="4.1" ry="14.7" fill="url(#bg)" fill-opacity="0.04"/>
<ellipse cx="259.6" cy="581.3" rx="5.8" ry="14.8" fill="url(#bg)" fill-opacity="0.11"/>
<ellipse cx="262.4" cy="232.3" rx="5.5" ry="16.2" fill="url(#bg)" fill-opacity="0.09"/>
<ellipse cx="272.7" cy="426.3" rx="7.0" ry="11.2" fill="url(#bg)" fill-opacity="0.07"/>
<ellipse cx="118.3" cy="435.9" rx="4.7" ry="7.8" fill="url(#bg)" fill-opacity="0.07"/>
<ellipse cx="247.0" cy="273.6" rx="6.0" ry="13.5" fill="url(#bg)" fill-opacity="0.04"/>
<ellipse cx="78.4" cy="644.3" rx="4.8" ry="19.1" fill="url(#bg)" fill-opacity="0.10"/>
<ellipse cx="167.8" cy="323.8" rx="5.8" ry="17.5" fill="url(#bg)" fill-opacity="0.04"/>
<ellipse cx="121.0" cy="242.5" rx="5.6" ry="15.1" fill="url(#bg)" fill-opacity="0.05"/>
<ellipse cx="102.1" cy="627.0" rx="4.3" ry="9.3" fill="url(#bg)" fill-opacity="0.11"/>
<ellipse cx="254.3" cy="364.3" rx="6.6" ry="12.9" fill="url(#bg)" fill-opacity="0.04"/>
<ellipse cx="121.2" cy="340.5" rx="5.9" ry="14.7" fill="url(#bg)" fill-opacity="0.07"/>
<ellipse cx="82.0" cy="303.5" rx="7.3" ry="13.5" fill="url(#bg)" fill-opacity="0.04"/>
<ellipse cx="169.2" cy="329.0" rx="6.0" ry="15.2" fill="url(#bg)" fill-opacity="0.08"/>
<ellipse cx="281.3" cy="314.1" rx="6.7" ry="17.1" fill="url(#bg)" fill-opacity="0.09"/>
<ellipse cx="270.0" cy="644.6" rx="5.3" ry="9.2" fill="url(#bg)" fill-opacity="0.05"/>
<ellipse cx="103.1" cy="568.8" rx="6.9" ry="17.3" fill="url(#bg)" fill-opacity="0.03"/>
<ellipse cx="219.2" cy="339.4" rx="5.8" ry="15.1" fill="url(#bg)" fill-opacity="0.03"/>
<ellipse cx="69.9" cy="260.6" rx="6.2" ry="8.2" fill="url(#bg)" fill-opacity="0.10"/>
<ellipse cx="110.7" cy="702.8" rx="3.6" ry="8.4" fill="url(#bg)" fill-opacity="0.10"/>
<ellipse cx="287.6" cy="475.8" rx="5.8" ry="11.3" fill="url(#bg)" fill-opacity="0.06"/>
<ellipse cx="132.1" cy="311.2" rx="6.1" ry="17.8" fill="url(#bg)" fill-opacity="0.05"/>
<ellipse cx="256.7" cy="479.1" rx="6.9" ry="15.9" fill="url(#bg)" fill-opacity="0.10"/>
<ellipse cx="70.4" cy="498.4" rx="5.8" ry="15.3" fill="url(#bg)" fill-opacity="0.10"/>
<ellipse cx="151.1" cy="356.0" rx="4.3" ry="10.7" fill="url(#bg)" fill-opacity="0.09"/>
<ellipse cx="124.2" cy="201.7" rx="6.5" ry="16.7" fill="url(#bg)" fill-opacity="0.11"/>
<ellipse cx="151.6" cy="439.2" rx="4.6" ry="17.9" fill="url(#bg)" fill-opacity="0.05"/>
<ellipse cx="179.6" cy="257.2" rx="6.5" ry="13.6" fill="url(#bg)" fill-opacity="0.08"/>
<ellipse cx="196.0" cy="563.7" rx="5.6" ry="9.4" fill="url(#bg)" fill-opacity="0.11"/>
<ellipse cx="63.1" cy="297.3" rx="6.1" ry="8.4" fill="url(#bg)" fill-opacity="0.06"/>
<ellipse cx="299.5" cy="162.7" rx="5.1" ry="10.7" fill="url(#bg)" fill-opacity="0.09"/>
<ellipse cx="172.1" cy="411.8" rx="5.4" ry="10.7" fill="url(#bg)" fill-opacity="0.05"/>
<ellipse cx="62.6" cy="472.8" rx="6.8" ry="9.1" fill="url(#bg)" fill-opacity="0.09"/>
<ellipse cx="96.3" cy="549.2" rx="6.0" ry="16.6" fill="url(#bg)" fill-opacity="0.05"/>
<ellipse cx="179.3" cy="230.9" rx="5.1" ry="19.7" fill="url(#bg)" fill-opacity="0.11"/>
<ellipse cx="112.9" cy="533.0" rx="4.3" ry="7.9" fill="url(#bg)" fill-opacity="0.10"/>
<ellipse cx="292.9" cy="488.9" rx="4.4" ry="19.8" fill="url(#bg)" fill-opacity="0.11"/>
<ellipse cx="97.2" cy="450.1" rx="6.1" ry="14.4" fill="url(#bg)" fill-opacity="0.11"/>
<ellipse cx="310.2" cy="86.4" rx="6.5" ry="13.6" fill="url(#bg)" fill-opacity="0.06"/>
<ellipse cx="270.7" cy="292.3" rx="3.6" ry="19.2" fill="url(#bg)" fill-opacity="0.11"/>
<ellipse cx="83.3" cy="554.4" rx="6.8" ry="17.1" fill="url(#bg)" fill-opacity="0.10"/>
<ellipse cx="152.1" cy="347.3" rx="4.8" ry="17.7" fill="url(#bg)" fill-opacity="0.09"/>
<ellipse cx="308.8" cy="611.5" rx="5.9" ry="15.6" fill="url(#bg)" fill-opacity="0.03"/>
<ellipse cx="98.6" cy="516.5" rx="6.4" ry="18.9" fill="url(#bg)" fill-opacity="0.08"/>
<ellipse cx="98.9" cy="292.7" rx="7.4" ry="19.8" fill="url(#bg)" fill-opacity="0.06"/>
<ellipse cx="106.0" cy="87.1" rx="6.0" ry="7.1" fill="url(#bg)" fill-opacity="0.07"/>
<ellipse cx="125.0" cy="624.8" rx="4.8" ry="14.9" fill="url(#bg)" fill-opacity="0.06"/>
<ellipse cx="142.0" cy="728.9" rx="3.5" ry="18.3" fill="url(#bg)" fill-opacity="0.07"/>
<ellipse cx="177.1" cy="271.7" rx="4.7" ry="13.1" fill="url(#bg)" fill-opacity="0.08"/>
<ellipse cx="131.7" cy="554.9" rx="6.9" ry="17.2" fill="url(#bg)" fill-opacity="0.10"/>
<ellipse cx="83.0" cy="614.0" rx="6.0" ry="9.0" fill="url(#bg)" fill-opacity="0.08"/>
<ellipse cx="105.7" cy="577.3" rx="4.9" ry="9.0" fill="url(#bg)" fill-opacity="0.06"/>
<ellipse cx="228.9" cy="196.8" rx="7.0" ry="9.9" fill="url(#bg)" fill-opacity="0.10"/>
<ellipse cx="87.3" cy="669.8" rx="7.1" ry="11.5" fill="url(#bg)" fill-opacity="0.08"/>
<ellipse cx="68.2" cy="677.7" rx="4.7" ry="14.3" fill="url(#bg)" fill-opacity="0.07"/>
<ellipse cx="214.7" cy="206.6" rx="7.4" ry="11.2" fill="url(#bg)" fill-opacity="0.08"/>
<ellipse cx="283.8" cy="182.6" rx="6.4" ry="16.5" fill="url(#bg)" fill-opacity="0.05"/>
<ellipse cx="136.4" cy="68.4" rx="4.0" ry="11.4" fill="url(#bg)" fill-opacity="0.09"/>
<ellipse cx="116.5" cy="660.9" rx="4.5" ry="12.3" fill="url(#bg)" fill-opacity="0.09"/>
<ellipse cx="121.6" cy="308.6" rx="6.2" ry="17.7" fill="url(#bg)" fill-opacity="0.05"/>
<ellipse cx="84.0" cy="245.7" rx="5.1" ry="11.3" fill="url(#bg)" fill-opacity="0.06"/>
<ellipse cx="140.1" cy="703.9" rx="7.2" ry="19.6" fill="url(#bg)" fill-opacity="0.09"/>
<ellipse cx="198.4" cy="126.3" rx="3.9" ry="18.1" fill="url(#bg)" fill-opacity="0.08"/>
<ellipse cx="198.4" cy="241.4" rx="5.0" ry="19.0" fill="url(#bg)" fill-opacity="0.08"/>
<ellipse cx="290.7" cy="166.8" rx="3.6" ry="15.9" fill="url(#bg)" fill-opacity="0.08"/>
<ellipse cx="296.5" cy="251.7" rx="5.3" ry="12.1" fill="url(#bg)" fill-opacity="0.10"/>
<ellipse cx="177.7" cy="144.0" rx="5.5" ry="7.3" fill="url(#bg)" fill-opacity="0.04"/>
<ellipse cx="231.5" cy="285.7" rx="5.5" ry="17.2" fill="url(#bg)" fill-opacity="0.10"/>
<ellipse cx="101.7" cy="200.4" rx="7.1" ry="16.0" fill="url(#bg)" fill-opacity="0.11"/>
<ellipse cx="280.4" cy="562.9" rx="5.0" ry="18.8" fill="url(#bg)" fill-opacity="0.07"/>
<ellipse cx="287.7" cy="540.1" rx="6.7" ry="15.1" fill="url(#bg)" fill-opacity="0.07"/>
<ellipse cx="103.0" cy="428.3" rx="4.4" ry="19.9" fill="url(#bg)" fill-opacity="0.09"/>
<ellipse cx="226.1" cy="110.7" rx="5.5" ry="19.3" fill="url(#bg)" fill-opacity="0.09"/>
<ellipse cx="124.8" cy="713.4" rx="4.7" ry="9.3" fill="url(#bg)" fill-opacity="0.04"/>
<ellipse cx="299.9" cy="589.8" rx="4.1" ry="15.1" fill="url(#bg)" fill-opacity="0.08"/>
<ellipse cx="249.4" cy="494.7" rx="5.2" ry="11.0" fill="url(#bg)" fill-opacity="0.06"/>
<ellipse cx="136.0" cy="480.3" rx="4.4" ry="6.4" fill="url(#bg)" fill-opacity="0.13"/>
<ellipse cx="91.3" cy="531.9" rx="6.4" ry="17.0" fill="url(#bg)" fill-opacity="0.08"/>
<ellipse cx="246.3" cy="426.2" rx="5.5" ry="8.2" fill="url(#bg)" fill-opacity="0.12"/>
<ellipse cx="75.2" cy="412.4" rx="3.7" ry="14.3" fill="url(#bg)" fill-opacity="0.14"/>
<ellipse cx="151.3" cy="437.6" rx="6.9" ry="16.5" fill="url(#bg)" fill-opacity="0.06"/>
<ellipse cx="231.2" cy="477.3" rx="5.9" ry="9.4" fill="url(#bg)" fill-opacity="0.11"/>
<ellipse cx="72.0" cy="494.2" rx="7.0" ry="12.1" fill="url(#bg)" fill-opacity="0.12"/>
<ellipse cx="138.3" cy="431.1" rx="7.5" ry="9.0" fill="url(#bg)" fill-opacity="0.06"/>
<ellipse cx="162.4" cy="533.3" rx="6.5" ry="9.9" fill="url(#bg)" fill-opacity="0.10"/>
<ellipse cx="256.1" cy="456.6" rx="6.8" ry="11.3" fill="url(#bg)" fill-opacity="0.15"/>
<ellipse cx="178.6" cy="465.6" rx="3.9" ry="17.1" fill="url(#bg)" fill-opacity="0.12"/>
<ellipse cx="88.7" cy="496.5" rx="4.2" ry="7.2" fill="url(#bg)" fill-opacity="0.14"/>
<ellipse cx="107.4" cy="555.0" rx="5.3" ry="8.6" fill="url(#bg)" fill-opacity="0.08"/>
<ellipse cx="205.0" cy="449.0" rx="7.6" ry="12.2" fill="url(#bg)" fill-opacity="0.05"/>
<ellipse cx="186.8" cy="527.7" rx="7.9" ry="15.7" fill="url(#bg)" fill-opacity="0.14"/>
<ellipse cx="108.6" cy="414.3" rx="4.2" ry="11.0" fill="url(#bg)" fill-opacity="0.14"/>
<ellipse cx="88.2" cy="463.2" rx="6.2" ry="7.5" fill="url(#bg)" fill-opacity="0.11"/>
<ellipse cx="197.0" cy="487.6" rx="5.6" ry="11.0" fill="url(#bg)" fill-opacity="0.12"/>
<ellipse cx="267.0" cy="488.5" rx="7.1" ry="13.6" fill="url(#bg)" fill-opacity="0.08"/>
<ellipse cx="201.4" cy="413.4" rx="5.6" ry="6.9" fill="url(#bg)" fill-opacity="0.07"/>
<ellipse cx="90.6" cy="571.3" rx="6.3" ry="6.7" fill="url(#bg)" fill-opacity="0.06"/>
<ellipse cx="115.9" cy="531.3" rx="3.8" ry="14.3" fill="url(#bg)" fill-opacity="0.14"/>
<ellipse cx="200.6" cy="495.0" rx="4.4" ry="16.8" fill="url(#bg)" fill-opacity="0.11"/>
<ellipse cx="258.0" cy="546.6" rx="6.6" ry="6.7" fill="url(#bg)" fill-opacity="0.11"/>
<ellipse cx="69.3" cy="573.4" rx="3.8" ry="8.9" fill="url(#bg)" fill-opacity="0.14"/>
<ellipse cx="139.2" cy="552.8" rx="4.2" ry="17.9" fill="url(#bg)" fill-opacity="0.15"/>
<ellipse cx="138.6" cy="422.7" rx="6.6" ry="6.8" fill="url(#bg)" fill-opacity="0.08"/>
<ellipse cx="240.7" cy="511.1" rx="5.9" ry="7.4" fill="url(#bg)" fill-opacity="0.09"/>
<ellipse cx="198.5" cy="427.7" rx="6.8" ry="9.0" fill="url(#bg)" fill-opacity="0.12"/>
<ellipse cx="84.2" cy="569.8" rx="6.9" ry="8.8" fill="url(#bg)" fill-opacity="0.10"/>
<ellipse cx="186.8" cy="569.6" rx="6.2" ry="9.3" fill="url(#bg)" fill-opacity="0.07"/>
<ellipse cx="150.2" cy="564.2" rx="6.8" ry="11.8" fill="url(#bg)" fill-opacity="0.13"/>
<ellipse cx="111.3" cy="572.8" rx="7.9" ry="15.3" fill="url(#bg)" fill-opacity="0.07"/>
<ellipse cx="239.2" cy="427.8" rx="5.9" ry="6.9" fill="url(#bg)" fill-opacity="0.11"/>
<ellipse cx="203.1" cy="434.6" rx="5.8" ry="6.6" fill="url(#bg)" fill-opacity="0.11"/>
<ellipse cx="204.7" cy="497.1" rx="3.6" ry="17.6" fill="url(#bg)" fill-opacity="0.05"/>
<ellipse cx="198.9" cy="522.9" rx="5.6" ry="7.1" fill="url(#bg)" fill-opacity="0.07"/>
<ellipse cx="127.0" cy="547.7" rx="6.4" ry="14.7" fill="url(#bg)" fill-opacity="0.09"/>
<ellipse cx="205.9" cy="521.8" rx="7.1" ry="15.0" fill="url(#bg)" fill-opacity="0.09"/>
<ellipse cx="244.5" cy="478.4" rx="7.5" ry="10.0" fill="url(#bg)" fill-opacity="0.10"/>
<ellipse cx="85.7" cy="416.4" rx="6.9" ry="13.2" fill="url(#bg)" fill-opacity="0.08"/>
<ellipse cx="264.3" cy="475.4" rx="4.4" ry="15.7" fill="url(#bg)" fill-opacity="0.06"/>
<ellipse cx="163.6" cy="486.0" rx="5.3" ry="16.3" fill="url(#bg)" fill-opacity="0.08"/>
<ellipse cx="97.6" cy="563.5" rx="5.8" ry="8.6" fill="url(#bg)" fill-opacity="0.13"/>
<ellipse cx="186.8" cy="438.5" rx="4.6" ry="12.3" fill="url(#bg)" fill-opacity="0.11"/>
<ellipse cx="96.7" cy="572.1" rx="4.5" ry="9.1" fill="url(#bg)" fill-opacity="0.15"/>
<ellipse cx="219.1" cy="542.9" rx="5.2" ry="6.4" fill="url(#bg)" fill-opacity="0.10"/>
<ellipse cx="137.7" cy="536.5" rx="4.2" ry="12.5" fill="url(#bg)" fill-opacity="0.06"/>
<ellipse cx="154.8" cy="546.1" rx="4.2" ry="7.6" fill="url(#bg)" fill-opacity="0.08"/>
<ellipse cx="224.6" cy="548.6" rx="5.0" ry="16.6" fill="url(#bg)" fill-opacity="0.13"/>
<ellipse cx="116.1" cy="446.1" rx="5.0" ry="17.5" fill="url(#bg)" fill-opacity="0.06"/>
<ellipse cx="65.4" cy="512.8" rx="7.1" ry="14.0" fill="url(#bg)" fill-opacity="0.06"/>
<ellipse cx="123.2" cy="531.9" rx="4.7" ry="12.6" fill="url(#bg)" fill-opacity="0.08"/>
<ellipse cx="135.9" cy="509.7" rx="5.3" ry="14.8" fill="url(#bg)" fill-opacity="0.05"/>
<ellipse cx="193.5" cy="481.7" rx="5.2" ry="14.9" fill="url(#bg)" fill-opacity="0.08"/>
<ellipse cx="156.8" cy="501.7" rx="4.7" ry="8.2" fill="url(#bg)" fill-opacity="0.09"/>
<ellipse cx="79.2" cy="545.0" rx="6.5" ry="12.2" fill="url(#bg)" fill-opacity="0.07"/>
<ellipse cx="216.2" cy="524.4" rx="6.8" ry="14.9" fill="url(#bg)" fill-opacity="0.12"/>
<ellipse cx="95.4" cy="431.7" rx="6.0" ry="8.5" fill="url(#bg)" fill-opacity="0.05"/>
<ellipse cx="176.7" cy="512.9" rx="5.2" ry="13.9" fill="url(#bg)" fill-opacity="0.05"/>
<ellipse cx="219.8" cy="455.7" rx="5.7" ry="7.9" fill="url(#bg)" fill-opacity="0.10"/>
<ellipse cx="125.1" cy="427.3" rx="4.4" ry="17.5" fill="url(#bg)" fill-opacity="0.07"/>
<ellipse cx="179.5" cy="462.3" rx="6.1" ry="14.0" fill="url(#bg)" fill-opacity="0.13"/>
<ellipse cx="200.5" cy="562.5" rx="6.1" ry="8.5" fill="url(#bg)" fill-opacity="0.15"/>
<ellipse cx="242.5" cy="492.2" rx="7.7" ry="8.4" fill="url(#bg)" fill-opacity="0.10"/>
<ellipse cx="127.0" cy="485.9" rx="5.8" ry="13.7" fill="url(#bg)" fill-opacity="0.05"/>
<ellipse cx="247.8" cy="548.4" rx="7.0" ry="10.5" fill="url(#bg)" fill-opacity="0.06"/>
<ellipse cx="68.0" cy="510.6" rx="5.9" ry="8.7" fill="url(#bg)" fill-opacity="0.10"/>
<ellipse cx="205.1" cy="544.5" rx="5.5" ry="12.7" fill="url(#bg)" fill-opacity="0.08"/>
<ellipse cx="83.5" cy="516.0" rx="7.9" ry="14.2" fill="url(#bg)" fill-opacity="0.12"/>
<ellipse cx="142.8" cy="574.4" rx="7.0" ry="12.7" fill="url(#bg)" fill-opacity="0.06"/>
<ellipse cx="187.7" cy="571.7" rx="4.1" ry="6.8" fill="url(#bg)" fill-opacity="0.15"/>
<ellipse cx="250.5" cy="565.9" rx="4.4" ry="16.4" fill="url(#bg)" fill-opacity="0.07"/>
<ellipse cx="78.5" cy="553.8" rx="6.8" ry="13.4" fill="url(#bg)" fill-opacity="0.15"/>
<ellipse cx="105.4" cy="529.2" rx="5.3" ry="6.2" fill="url(#bg)" fill-opacity="0.10"/>
<ellipse cx="196.0" cy="450.6" rx="5.9" ry="7.8" fill="url(#bg)" fill-opacity="0.06"/>
<ellipse cx="90.4" cy="457.3" rx="4.0" ry="15.6" fill="url(#bg)" fill-opacity="0.09"/>
<ellipse cx="216.4" cy="500.8" rx="7.8" ry="12.0" fill="url(#bg)" fill-opacity="0.14"/>
<ellipse cx="205.7" cy="459.7" rx="7.0" ry="8.2" fill="url(#bg)" fill-opacity="0.08"/>
<ellipse cx="152.3" cy="419.3" rx="4.6" ry="7.8" fill="url(#bg)" fill-opacity="0.12"/>
<ellipse cx="118.7" cy="541.9" rx="4.9" ry="14.9" fill="url(#bg)" fill-opacity="0.07"/>
<ellipse cx="78.1" cy="532.9" rx="7.3" ry="9.4" fill="url(#bg)" fill-opacity="0.14"/>
<ellipse cx="229.7" cy="424.8" rx="5.6" ry="15.3" fill="url(#bg)" fill-opacity="0.09"/>
<ellipse cx="120.3" cy="473.0" rx="5.6" ry="16.2" fill="url(#bg)" fill-opacity="0.07"/>
<ellipse cx="254.0" cy="523.5" rx="4.9" ry="14.9" fill="url(#bg)" fill-opacity="0.13"/>
<ellipse cx="170.9" cy="513.1" rx="4.5" ry="12.8" fill="url(#bg)" fill-opacity="0.13"/>
<ellipse cx="206.4" cy="446.1" rx="5.2" ry="15.4" fill="url(#bg)" fill-opacity="0.09"/>
<ellipse cx="201.0" cy="550.4" rx="5.1" ry="8.2" fill="url(#bg)" fill-opacity="0.08"/>
<ellipse cx="125.6" cy="509.9" rx="7.2" ry="9.0" fill="url(#bg)" fill-opacity="0.07"/>
<ellipse cx="187.9" cy="527.7" rx="4.4" ry="12.9" fill="url(#bg)" fill-opacity="0.14"/>
<ellipse cx="123.1" cy="530.7" rx="5.9" ry="6.3" fill="url(#bg)" fill-opacity="0.07"/>
<ellipse cx="137.2" cy="431.1" rx="4.8" ry="8.5" fill="url(#bg)" fill-opacity="0.07"/>
<ellipse cx="190.3" cy="509.4" rx="5.2" ry="11.8" fill="url(#bg)" fill-opacity="0.12"/>
<ellipse cx="119.2" cy="459.1" rx="7.9" ry="9.2" fill="url(#bg)" fill-opacity="0.07"/>
<ellipse cx="104.1" cy="433.1" rx="4.4" ry="17.2" fill="url(#bg)" fill-opacity="0.07"/>
<ellipse cx="118.1" cy="481.8" rx="4.9" ry="11.3" fill="url(#bg)" fill-opacity="0.06"/>
<ellipse cx="201.6" cy="496.8" rx="7.7" ry="7.4" fill="url(#bg)" fill-opacity="0.06"/>
<ellipse cx="122.4" cy="546.9" rx="3.9" ry="9.3" fill="url(#bg)" fill-opacity="0.09"/>
<ellipse cx="254.8" cy="551.3" rx="5.7" ry="16.7" fill="url(#bg)" fill-opacity="0.09"/>
<ellipse cx="161.9" cy="542.3" rx="4.6" ry="8.8" fill="url(#bg)" fill-opacity="0.10"/>
<ellipse cx="65.6" cy="427.4" rx="5.3" ry="6.5" fill="url(#bg)" fill-opacity="0.13"/>
<ellipse cx="178.1" cy="521.6" rx="4.5" ry="14.6" fill="url(#bg)" fill-opacity="0.10"/>
<ellipse cx="137.7" cy="489.2" rx="5.0" ry="14.8" fill="url(#bg)" fill-opacity="0.10"/>
<ellipse cx="140.2" cy="433.6" rx="3.8" ry="16.1" fill="url(#bg)" fill-opacity="0.12"/>
<ellipse cx="163.4" cy="480.9" rx="4.7" ry="15.4" fill="url(#bg)" fill-opacity="0.15"/>
<ellipse cx="235.2" cy="418.0" rx="3.8" ry="11.9" fill="url(#bg)" fill-opacity="0.07"/>
<ellipse cx="135.2" cy="475.6" rx="4.4" ry="14.2" fill="url(#bg)" fill-opacity="0.10"/>
<ellipse cx="218.2" cy="534.6" rx="7.1" ry="12.9" fill="url(#bg)" fill-opacity="0.09"/>
<ellipse cx="66.5" cy="416.6" rx="5.6" ry="12.3" fill="url(#bg)" fill-opacity="0.07"/>
<ellipse cx="128.7" cy="486.6" rx="7.4" ry="8.0" fill="url(#bg)" fill-opacity="0.15"/>
<ellipse cx="86.3" cy="521.4" rx="3.7" ry="11.3" fill="url(#bg)" fill-opacity="0.10"/>
<ellipse cx="70.9" cy="464.6" rx="6.5" ry="17.3" fill="url(#bg)" fill-opacity="0.14"/>
<ellipse cx="139.0" cy="469.1" rx="5.7" ry="8.3" fill="url(#bg)" fill-opacity="0.07"/>
<ellipse cx="189.9" cy="505.9" rx="6.9" ry="17.8" fill="url(#bg)" fill-opacity="0.11"/>
<ellipse cx="69.5" cy="525.4" rx="7.5" ry="13.6" fill="url(#bg)" fill-opacity="0.14"/>
<ellipse cx="137.4" cy="422.0" rx="6.8" ry="17.8" fill="url(#bg)" fill-opacity="0.07"/>
<ellipse cx="157.3" cy="520.2" rx="7.2" ry="13.2" fill="url(#bg)" fill-opacity="0.07"/>
<ellipse cx="90.6" cy="533.8" rx="4.0" ry="8.8" fill="url(#bg)" fill-opacity="0.13"/>
<ellipse cx="245.3" cy="501.3" rx="3.8" ry="10.5" fill="url(#bg)" fill-opacity="0.06"/>
<ellipse cx="211.6" cy="201.2" rx="6.5" ry="15.7" fill="url(#bg)" fill-opacity="0.08"/>
<ellipse cx="91.6" cy="227.4" rx="7.8" ry="6.3" fill="url(#bg)" fill-opacity="0.06"/>
<ellipse cx="107.8" cy="209.4" rx="7.9" ry="10.1" fill="url(#bg)" fill-opacity="0.13"/>
<ellipse cx="258.1" cy="243.1" rx="6.7" ry="6.8" fill="url(#bg)" fill-opacity="0.07"/>
<ellipse cx="204.8" cy="210.8" rx="7.5" ry="12.7" fill="url(#bg)" fill-opacity="0.10"/>
<ellipse cx="237.4" cy="252.5" rx="7.2" ry="10.5" fill="url(#bg)" fill-opacity="0.05"/>
<ellipse cx="180.8" cy="251.0" rx="4.6" ry="6.7" fill="url(#bg)" fill-opacity="0.10"/>
<ellipse cx="190.1" cy="206.1" rx="8.0" ry="9.6" fill="url(#bg)" fill-opacity="0.11"/>
<ellipse cx="232.1" cy="229.0" rx="7.5" ry="14.5" fill="url(#bg)" fill-opacity="0.06"/>
<ellipse cx="192.0" cy="254.8" rx="3.6" ry="8.4" fill="url(#bg)" fill-opacity="0.05"/>
<ellipse cx="68.2" cy="273.0" rx="4.2" ry="6.9" fill="url(#bg)" fill-opacity="0.09"/>
<ellipse cx="141.5" cy="255.1" rx="7.5" ry="17.2" fill="url(#bg)" fill-opacity="0.05"/>
<ellipse cx="180.4" cy="208.6" rx="7.8" ry="17.5" fill="url(#bg)" fill-opacity="0.06"/>
<ellipse cx="103.4" cy="252.3" rx="6.8" ry="13.8" fill="url(#bg)" fill-opacity="0.06"/>
<ellipse cx="71.8" cy="274.9" rx="7.6" ry="9.9" fill="url(#bg)" fill-opacity="0.10"/>
<ellipse cx="161.0" cy="236.4" rx="5.8" ry="7.8" fill="url(#bg)" fill-opacity="0.09"/>
<ellipse cx="232.0" cy="214.3" rx="6.4" ry="14.8" fill="url(#bg)" fill-opacity="0.12"/>
<ellipse cx="85.8" cy="241.4" rx="5.4" ry="16.1" fill="url(#bg)" fill-opacity="0.08"/>
<ellipse cx="90.7" cy="274.0" rx="4.7" ry="12.6" fill="url(#bg)" fill-opacity="0.12"/>
<ellipse cx="206.7" cy="245.4" rx="7.4" ry="14.5" fill="url(#bg)" fill-opacity="0.12"/>
<ellipse cx="72.6" cy="215.9" rx="7.8" ry="11.0" fill="url(#bg)" fill-opacity="0.07"/>
<ellipse cx="135.0" cy="263.5" rx="6.1" ry="12.3" fill="url(#bg)" fill-opacity="0.08"/>
<ellipse cx="72.3" cy="235.0" rx="6.0" ry="7.5" fill="url(#bg)" fill-opacity="0.12"/>
<ellipse cx="169.8" cy="255.9" rx="5.5" ry="6.9" fill="url(#bg)" fill-opacity="0.08"/>
<ellipse cx="206.9" cy="274.7" rx="4.1" ry="9.7" fill="url(#bg)" fill-opacity="0.07"/>
<ellipse cx="249.4" cy="253.1" rx="5.2" ry="13.1" fill="url(#bg)" fill-opacity="0.11"/>
<ellipse cx="241.2" cy="234.6" rx="3.9" ry="16.1" fill="url(#bg)" fill-opacity="0.11"/>
<ellipse cx="227.2" cy="237.7" rx="5.1" ry="13.9" fill="url(#bg)" fill-opacity="0.06"/>
<ellipse cx="175.1" cy="270.5" rx="7.6" ry="14.0" fill="url(#bg)" fill-opacity="0.11"/>
<ellipse cx="150.2" cy="208.7" rx="6.2" ry="10.7" fill="url(#bg)" fill-opacity="0.05"/>
<ellipse cx="213.5" cy="211.5" rx="5.7" ry="14.7" fill="url(#bg)" fill-opacity="0.10"/>
<ellipse cx="245.9" cy="235.1" rx="6.6" ry="17.1" fill="url(#bg)" fill-opacity="0.05"/>
<ellipse cx="215.5" cy="224.3" rx="5.6" ry="12.0" fill="url(#bg)" fill-opacity="0.07"/>
<ellipse cx="181.2" cy="215.0" rx="6.4" ry="9.2" fill="url(#bg)" fill-opacity="0.09"/>
<ellipse cx="163.8" cy="263.6" rx="7.1" ry="10.8" fill="url(#bg)" fill-opacity="0.10"/>
<ellipse cx="181.4" cy="215.0" rx="4.3" ry="12.0" fill="url(#bg)" fill-opacity="0.07"/>
<ellipse cx="126.3" cy="211.9" rx="7.4" ry="14.8" fill="url(#bg)" fill-opacity="0.09"/>
<ellipse cx="79.1" cy="258.6" rx="7.5" ry="10.0" fill="url(#bg)" fill-opacity="0.07"/>
<ellipse cx="241.1" cy="245.4" rx="3.7" ry="8.5" fill="url(#bg)" fill-opacity="0.11"/>
<ellipse cx="189.1" cy="210.0" rx="3.6" ry="7.2" fill="url(#bg)" fill-opacity="0.05"/>
<ellipse cx="206.2" cy="94.8" rx="7.6" ry="9.3" fill="url(#bg)" fill-opacity="0.07"/>
<ellipse cx="105.8" cy="103.8" rx="5.7" ry="17.4" fill="url(#bg)" fill-opacity="0.12"/>
<ellipse cx="149.9" cy="80.6" rx="7.7" ry="13.5" fill="url(#bg)" fill-opacity="0.08"/>
<ellipse cx="104.4" cy="103.1" rx="4.1" ry="11.2" fill="url(#bg)" fill-opacity="0.10"/>
<ellipse cx="128.5" cy="65.3" rx="5.7" ry="13.3" fill="url(#bg)" fill-opacity="0.11"/>
<ellipse cx="197.0" cy="78.9" rx="6.3" ry="16.2" fill="url(#bg)" fill-opacity="0.10"/>
<ellipse cx="100.1" cy="105.1" rx="5.2" ry="6.1" fill="url(#bg)" fill-opacity="0.09"/>
<ellipse cx="135.9" cy="96.8" rx="7.3" ry="15.3" fill="url(#bg)" fill-opacity="0.07"/>
<ellipse cx="149.7" cy="81.6" rx="5.6" ry="13.0" fill="url(#bg)" fill-opacity="0.08"/>
<ellipse cx="161.3" cy="85.3" rx="5.3" ry="10.8" fill="url(#bg)" fill-opacity="0.08"/>
<ellipse cx="215.3" cy="85.4" rx="7.1" ry="10.4" fill="url(#bg)" fill-opacity="0.07"/>
<ellipse cx="127.2" cy="78.1" rx="5.6" ry="12.6" fill="url(#bg)" fill-opacity="0.09"/>
<ellipse cx="173.1" cy="102.5" rx="7.0" ry="15.5" fill="url(#bg)" fill-opacity="0.05"/>
<ellipse cx="102.6" cy="96.9" rx="5.1" ry="17.6" fill="url(#bg)" fill-opacity="0.10"/>
<ellipse cx="88.6" cy="87.9" rx="5.7" ry="8.8" fill="url(#bg)" fill-opacity="0.06"/>
<ellipse cx="70.7" cy="95.0" rx="7.0" ry="11.5" fill="url(#bg)" fill-opacity="0.11"/>
<ellipse cx="203.6" cy="83.5" rx="3.7" ry="10.6" fill="url(#bg)" fill-opacity="0.12"/>
<ellipse cx="178.2" cy="71.0" rx="7.2" ry="16.2" fill="url(#bg)" fill-opacity="0.11"/>
<ellipse cx="76.6" cy="74.1" rx="4.7" ry="8.0" fill="url(#bg)" fill-opacity="0.11"/>
<ellipse cx="65.9" cy="100.8" rx="5.7" ry="12.9" fill="url(#bg)" fill-opacity="0.10"/>
<ellipse cx="164.0" cy="96.1" rx="5.2" ry="14.3" fill="url(#bg)" fill-opacity="0.07"/>
<ellipse cx="120.4" cy="67.0" rx="4.0" ry="15.1" fill="url(#bg)" fill-opacity="0.08"/>
<ellipse cx="241.2" cy="74.3" rx="6.5" ry="6.1" fill="url(#bg)" fill-opacity="0.10"/>
<ellipse cx="114.9" cy="79.4" rx="3.6" ry="17.4" fill="url(#bg)" fill-opacity="0.12"/>
<ellipse cx="182.2" cy="64.7" rx="6.6" ry="11.4" fill="url(#bg)" fill-opacity="0.11"/>
<ellipse cx="60.2" cy="78.4" rx="6.6" ry="8.9" fill="url(#bg)" fill-opacity="0.09"/>
<ellipse cx="230.2" cy="87.8" rx="7.1" ry="12.5" fill="url(#bg)" fill-opacity="0.09"/>
<ellipse cx="228.7" cy="109.7" rx="7.9" ry="6.8" fill="url(#bg)" fill-opacity="0.07"/>
<ellipse cx="125.0" cy="69.9" rx="3.8" ry="17.5" fill="url(#bg)" fill-opacity="0.09"/>
<ellipse cx="237.7" cy="93.9" rx="5.2" ry="8.4" fill="url(#bg)" fill-opacity="0.13"/>
<ellipse cx="337.0" cy="523.1" rx="4.6" ry="12.6" fill="url(#bg)" fill-opacity="0.08"/>
<ellipse cx="324.2" cy="520.3" rx="6.9" ry="15.0" fill="url(#bg)" fill-opacity="0.12"/>
<ellipse cx="284.8" cy="442.8" rx="5.8" ry="7.4" fill="url(#bg)" fill-opacity="0.18"/>
<ellipse cx="295.4" cy="544.2" rx="7.0" ry="14.8" fill="url(#bg)" fill-opacity="0.07"/>
<ellipse cx="343.4" cy="450.3" rx="7.9" ry="17.8" fill="url(#bg)" fill-opacity="0.15"/>
<ellipse cx="305.1" cy="488.0" rx="5.3" ry="17.0" fill="url(#bg)" fill-opacity="0.07"/>
<ellipse cx="275.2" cy="498.1" rx="7.2" ry="13.1" fill="url(#bg)" fill-opacity="0.14"/>
<ellipse cx="335.0" cy="470.0" rx="7.5" ry="11.2" fill="url(#bg)" fill-opacity="0.15"/>
<ellipse cx="316.1" cy="557.2" rx="7.3" ry="8.4" fill="url(#bg)" fill-opacity="0.13"/>
<ellipse cx="297.1" cy="453.6" rx="4.9" ry="14.2" fill="url(#bg)" fill-opacity="0.07"/>
<ellipse cx="311.2" cy="570.3" rx="6.9" ry="17.0" fill="url(#bg)" fill-opacity="0.07"/>
<ellipse cx="326.8" cy="485.7" rx="3.9" ry="13.6" fill="url(#bg)" fill-opacity="0.10"/>
<ellipse cx="338.5" cy="576.7" rx="5.4" ry="17.6" fill="url(#bg)" fill-opacity="0.09"/>
<ellipse cx="307.1" cy="469.7" rx="3.5" ry="8.9" fill="url(#bg)" fill-opacity="0.07"/>
<ellipse cx="307.6" cy="471.0" rx="4.1" ry="6.5" fill="url(#bg)" fill-opacity="0.15"/>
<ellipse cx="317.8" cy="459.2" rx="5.7" ry="10.4" fill="url(#bg)" fill-opacity="0.14"/>
<ellipse cx="334.6" cy="548.6" rx="7.8" ry="9.8" fill="url(#bg)" fill-opacity="0.11"/>
<ellipse cx="314.2" cy="574.4" rx="4.6" ry="6.7" fill="url(#bg)" fill-opacity="0.16"/>
<ellipse cx="287.0" cy="573.4" rx="5.0" ry="17.9" fill="url(#bg)" fill-opacity="0.14"/>
<ellipse cx="309.6" cy="432.8" rx="7.8" ry="15.1" fill="url(#bg)" fill-opacity="0.12"/>
<ellipse cx="270.5" cy="485.1" rx="3.5" ry="15.0" fill="url(#bg)" fill-opacity="0.08"/>
<ellipse cx="339.2" cy="536.8" rx="7.8" ry="14.5" fill="url(#bg)" fill-opacity="0.18"/>
<ellipse cx="287.1" cy="504.5" rx="6.4" ry="7.2" fill="url(#bg)" fill-opacity="0.15"/>
<ellipse cx="304.9" cy="442.0" rx="6.3" ry="14.0" fill="url(#bg)" fill-opacity="0.09"/>
<ellipse cx="292.7" cy="512.0" rx="6.9" ry="6.4" fill="url(#bg)" fill-opacity="0.18"/>
<ellipse cx="283.3" cy="559.1" rx="4.9" ry="7.0" fill="url(#bg)" fill-opacity="0.10"/>
<ellipse cx="273.9" cy="468.2" rx="7.0" ry="12.4" fill="url(#bg)" fill-opacity="0.18"/>
<ellipse cx="292.5" cy="578.7" rx="4.1" ry="6.8" fill="url(#bg)" fill-opacity="0.08"/>
<ellipse cx="292.6" cy="498.8" rx="5.3" ry="6.6" fill="url(#bg)" fill-opacity="0.18"/>
<ellipse cx="313.3" cy="449.1" rx="4.0" ry="7.4" fill="url(#bg)" fill-opacity="0.13"/>
<ellipse cx="281.9" cy="496.1" rx="5.1" ry="14.2" fill="url(#bg)" fill-opacity="0.07"/>
<ellipse cx="326.1" cy="532.5" rx="7.2" ry="8.0" fill="url(#bg)" fill-opacity="0.11"/>
<ellipse cx="303.9" cy="513.7" rx="5.9" ry="16.6" fill="url(#bg)" fill-opacity="0.16"/>
<ellipse cx="280.6" cy="458.7" rx="4.4" ry="15.1" fill="url(#bg)" fill-opacity="0.06"/>
<ellipse cx="293.0" cy="520.8" rx="5.6" ry="17.4" fill="url(#bg)" fill-opacity="0.10"/>
<ellipse cx="293.6" cy="485.1" rx="6.4" ry="14.8" fill="url(#bg)" fill-opacity="0.11"/>
<ellipse cx="321.1" cy="478.6" rx="4.5" ry="13.9" fill="url(#bg)" fill-opacity="0.07"/>
<ellipse cx="300.4" cy="503.4" rx="7.1" ry="11.9" fill="url(#bg)" fill-opacity="0.11"/>
<ellipse cx="299.8" cy="566.2" rx="3.6" ry="12.4" fill="url(#bg)" fill-opacity="0.17"/>
<ellipse cx="281.5" cy="513.7" rx="4.2" ry="12.8" fill="url(#bg)" fill-opacity="0.14"/>
<ellipse cx="59.1" cy="715.2" rx="5.1" ry="10.0" fill="url(#bg)" fill-opacity="0.11"/>
<ellipse cx="169.4" cy="704.8" rx="5.3" ry="6.3" fill="url(#bg)" fill-opacity="0.09"/>
<ellipse cx="126.4" cy="692.4" rx="4.6" ry="17.8" fill="url(#bg)" fill-opacity="0.09"/>
<ellipse cx="173.9" cy="720.0" rx="6.5" ry="13.1" fill="url(#bg)" fill-opacity="0.08"/>
<ellipse cx="153.7" cy="720.6" rx="4.8" ry="16.6" fill="url(#bg)" fill-opacity="0.07"/>
<ellipse cx="213.4" cy="700.9" rx="5.8" ry="11.3" fill="url(#bg)" fill-opacity="0.11"/>
<ellipse cx="173.4" cy="723.5" rx="7.8" ry="14.8" fill="url(#bg)" fill-opacity="0.09"/>
<ellipse cx="209.7" cy="716.0" rx="5.2" ry="13.0" fill="url(#bg)" fill-opacity="0.08"/>
<ellipse cx="194.9" cy="719.4" rx="3.8" ry="7.8" fill="url(#bg)" fill-opacity="0.08"/>
<ellipse cx="228.6" cy="709.3" rx="6.1" ry="11.1" fill="url(#bg)" fill-opacity="0.06"/>
<ellipse cx="114.0" cy="727.4" rx="6.2" ry="14.5" fill="url(#bg)" fill-opacity="0.09"/>
<ellipse cx="135.0" cy="730.3" rx="4.0" ry="17.2" fill="url(#bg)" fill-opacity="0.12"/>
<ellipse cx="294.4" cy="702.0" rx="5.2" ry="16.0" fill="url(#bg)" fill-opacity="0.08"/>
<ellipse cx="266.4" cy="701.5" rx="5.2" ry="17.6" fill="url(#bg)" fill-opacity="0.07"/>
<ellipse cx="299.0" cy="693.4" rx="5.0" ry="7.4" fill="url(#bg)" fill-opacity="0.10"/>
<ellipse cx="127.2" cy="712.7" rx="3.6" ry="11.3" fill="url(#bg)" fill-opacity="0.10"/>
<ellipse cx="230.5" cy="691.4" rx="6.8" ry="14.2" fill="url(#bg)" fill-opacity="0.08"/>
<ellipse cx="176.1" cy="695.5" rx="4.5" ry="6.2" fill="url(#bg)" fill-opacity="0.12"/>
<ellipse cx="216.0" cy="704.7" rx="7.3" ry="10.6" fill="url(#bg)" fill-opacity="0.10"/>
<ellipse cx="250.4" cy="715.7" rx="4.5" ry="14.2" fill="url(#bg)" fill-opacity="0.12"/>
<ellipse cx="176.7" cy="724.7" rx="5.4" ry="14.0" fill="url(#bg)" fill-opacity="0.07"/>
<ellipse cx="270.9" cy="724.4" rx="5.9" ry="13.0" fill="url(#bg)" fill-opacity="0.11"/>
<ellipse cx="200.9" cy="693.9" rx="7.0" ry="13.2" fill="url(#bg)" fill-opacity="0.11"/>
<ellipse cx="100.8" cy="728.3" rx="5.6" ry="15.0" fill="url(#bg)" fill-opacity="0.10"/>
<ellipse cx="175.3" cy="708.0" rx="5.8" ry="17.7" fill="url(#bg)" fill-opacity="0.12"/>
<ellipse cx="229.0" cy="399.7" rx="7.0" ry="14.7" fill="url(#bg)" fill-opacity="0.08"/>
<ellipse cx="257.4" cy="391.6" rx="4.0" ry="8.1" fill="url(#bg)" fill-opacity="0.07"/>
<ellipse cx="58.3" cy="374.9" rx="3.5" ry="18.0" fill="url(#bg)" fill-opacity="0.06"/>
<ellipse cx="101.6" cy="342.6" rx="7.6" ry="13.7" fill="url(#bg)" fill-opacity="0.06"/>
<ellipse cx="171.5" cy="285.7" rx="5.4" ry="16.4" fill="url(#bg)" fill-opacity="0.05"/>
<ellipse cx="125.1" cy="302.8" rx="4.4" ry="9.7" fill="url(#bg)" fill-opacity="0.09"/>
<ellipse cx="242.6" cy="359.0" rx="6.7" ry="14.6" fill="url(#bg)" fill-opacity="0.08"/>
<ellipse cx="101.3" cy="291.8" rx="7.2" ry="15.5" fill="url(#bg)" fill-opacity="0.08"/>
<ellipse cx="149.2" cy="388.3" rx="3.5" ry="6.7" fill="url(#bg)" fill-opacity="0.05"/>
<ellipse cx="194.0" cy="388.4" rx="5.1" ry="15.1" fill="url(#bg)" fill-opacity="0.05"/>
<ellipse cx="212.5" cy="383.4" rx="5.5" ry="7.7" fill="url(#bg)" fill-opacity="0.08"/>
<ellipse cx="191.7" cy="363.7" rx="7.2" ry="6.9" fill="url(#bg)" fill-opacity="0.06"/>
<ellipse cx="156.3" cy="359.9" rx="7.6" ry="10.5" fill="url(#bg)" fill-opacity="0.05"/>
<ellipse cx="151.0" cy="395.5" rx="4.7" ry="13.8" fill="url(#bg)" fill-opacity="0.04"/>
<ellipse cx="93.6" cy="360.1" rx="4.0" ry="15.8" fill="url(#bg)" fill-opacity="0.07"/>
<ellipse cx="208.8" cy="385.6" rx="7.1" ry="12.0" fill="url(#bg)" fill-opacity="0.09"/>
<ellipse cx="206.1" cy="325.8" rx="7.8" ry="8.7" fill="url(#bg)" fill-opacity="0.06"/>
<ellipse cx="177.3" cy="347.4" rx="7.7" ry="15.6" fill="url(#bg)" fill-opacity="0.04"/>
<ellipse cx="67.1" cy="333.1" rx="7.0" ry="15.9" fill="url(#bg)" fill-opacity="0.04"/>
<ellipse cx="251.7" cy="384.2" rx="7.3" ry="7.7" fill="url(#bg)" fill-opacity="0.07"/>
<ellipse cx="441.1" cy="296.2" rx="39.6" ry="7.4" fill="url(#bg)" fill-opacity="0.16" transform="rotate(9.9 441.1 296.2)"/>
<ellipse cx="445.5" cy="416.1" rx="29.6" ry="4.5" fill="url(#bg)" fill-opacity="0.06"/>
<ellipse cx="338.6" cy="198.5" rx="23.8" ry="6.9" fill="url(#bg)" fill-opacity="0.07" transform="rotate(14.4 338.6 198.5)"/>
<ellipse cx="303.9" cy="517.1" rx="46.1" ry="7.3" fill="url(#bg)" fill-opacity="0.05"/>
<ellipse cx="544.6" cy="446.7" rx="78.8" ry="6.0" fill="url(#bg)" fill-opacity="0.07"/>
<ellipse cx="548.2" cy="326.9" rx="54.5" ry="5.0" fill="url(#bg)" fill-opacity="0.05" transform="rotate(0.8 548.2 326.9)"/>
<ellipse cx="392.6" cy="546.3" rx="47.8" ry="7.6" fill="url(#bg)" fill-opacity="0.07"/>
<ellipse cx="488.8" cy="350.4" rx="22.7" ry="6.2" fill="url(#bg)" fill-opacity="0.03"/>
<ellipse cx="317.3" cy="657.8" rx="34.0" ry="8.0" fill="url(#bg)" fill-opacity="0.14"/>
<ellipse cx="521.9" cy="337.3" rx="43.9" ry="6.1" fill="url(#bg)" fill-opacity="0.08"/>
<ellipse cx="489.4" cy="688.2" rx="40.2" ry="7.2" fill="url(#bg)" fill-opacity="0.06"/>
<ellipse cx="304.9" cy="386.1" rx="55.3" ry="6.1" fill="url(#bg)" fill-opacity="0.04"/>
<ellipse cx="450.6" cy="282.3" rx="46.7" ry="5.1" fill="url(#bg)" fill-opacity="0.03" transform="rotate(12.6 450.6 282.3)"/>
<ellipse cx="302.0" cy="612.9" rx="46.5" ry="7.8" fill="url(#bg)" fill-opacity="0.04"/>
<ellipse cx="509.0" cy="158.7" rx="22.3" ry="5.3" fill="url(#bg)" fill-opacity="0.06" transform="rotate(3.6 509.0 158.7)"/>
<ellipse cx="544.9" cy="127.1" rx="61.9" ry="5.3" fill="url(#bg)" fill-opacity="0.03"/>
<ellipse cx="496.8" cy="583.0" rx="42.3" ry="5.1" fill="url(#bg)" fill-opacity="0.17"/>
<ellipse cx="365.2" cy="530.8" rx="57.8" ry="7.8" fill="url(#bg)" fill-opacity="0.03"/>
<ellipse cx="440.4" cy="512.5" rx="56.0" ry="6.8" fill="url(#bg)" fill-opacity="0.04"/>
<ellipse cx="346.7" cy="409.4" rx="78.4" ry="7.7" fill="url(#bg)" fill-opacity="0.06"/>
<ellipse cx="536.9" cy="674.6" rx="56.0" ry="4.1" fill="url(#bg)" fill-opacity="0.05"/>
<ellipse cx="465.4" cy="489.9" rx="23.4" ry="7.7" fill="url(#bg)" fill-opacity="0.06"/>
<ellipse cx="346.8" cy="322.6" rx="25.5" ry="8.0" fill="url(#bg)" fill-opacity="0.07" transform="rotate(3.2 346.8 322.6)"/>
<ellipse cx="512.5" cy="421.1" rx="74.8" ry="8.0" fill="url(#bg)" fill-opacity="0.06"/>
<ellipse cx="574.3" cy="639.6" rx="30.5" ry="7.4" fill="url(#bg)" fill-opacity="0.17"/>
<ellipse cx="519.2" cy="639.2" rx="37.1" ry="7.0" fill="url(#bg)" fill-opacity="0.05"/>
<ellipse cx="371.2" cy="567.4" rx="52.8" ry="6.2" fill="url(#bg)" fill-opacity="0.08"/>
<ellipse cx="580.7" cy="200.8" rx="22.6" ry="3.9" fill="url(#bg)" fill-opacity="0.08" transform="rotate(7.5 580.7 200.8)"/>
<ellipse cx="506.3" cy="267.1" rx="81.9" ry="4.4" fill="url(#bg)" fill-opacity="0.06" transform="rotate(13.2 506.3 267.1)"/>
<ellipse cx="586.9" cy="220.2" rx="29.8" ry="4.7" fill="url(#bg)" fill-opacity="0.07" transform="rotate(9.4 586.9 220.2)"/>
<ellipse cx="374.3" cy="205.3" rx="67.6" ry="6.9" fill="url(#bg)" fill-opacity="0.03" transform="rotate(13.8 374.3 205.3)"/>
<ellipse cx="444.9" cy="633.2" rx="32.3" ry="7.4" fill="url(#bg)" fill-opacity="0.05"/>
<ellipse cx="486.0" cy="372.9" rx="38.6" ry="5.7" fill="url(#bg)" fill-opacity="0.16"/>
<ellipse cx="519.8" cy="313.3" rx="70.0" ry="3.8" fill="url(#bg)" fill-opacity="0.07" transform="rotate(4.4 519.8 313.3)"/>
<ellipse cx="392.0" cy="278.2" rx="81.5" ry="6.1" fill="url(#bg)" fill-opacity="0.04" transform="rotate(15.7 392.0 278.2)"/>
<ellipse cx="348.0" cy="538.7" rx="48.1" ry="5.1" fill="url(#bg)" fill-opacity="0.07"/>
<ellipse cx="467.8" cy="615.9" rx="28.9" ry="6.1" fill="url(#bg)" fill-opacity="0.06"/>
<ellipse cx="570.3" cy="333.7" rx="30.2" ry="5.4" fill="url(#bg)" fill-opacity="0.06"/>
<ellipse cx="344.6" cy="593.9" rx="48.6" ry="5.1" fill="url(#bg)" fill-opacity="0.03"/>
<ellipse cx="473.4" cy="479.0" rx="59.5" ry="6.0" fill="url(#bg)" fill-opacity="0.05"/>
<ellipse cx="485.5" cy="162.3" rx="23.9" ry="5.7" fill="url(#bg)" fill-opacity="0.15" transform="rotate(4.3 485.5 162.3)"/>
<ellipse cx="344.1" cy="167.6" rx="42.4" ry="6.8" fill="url(#bg)" fill-opacity="0.05" transform="rotate(7.9 344.1 167.6)"/>
<ellipse cx="474.9" cy="650.4" rx="81.2" ry="6.3" fill="url(#bg)" fill-opacity="0.04"/>
<ellipse cx="344.9" cy="129.6" rx="76.3" ry="5.2" fill="url(#bg)" fill-opacity="0.05"/>
<ellipse cx="460.0" cy="572.7" rx="49.8" ry="5.5" fill="url(#bg)" fill-opacity="0.04"/>
<ellipse cx="583.2" cy="725.1" rx="75.2" ry="4.0" fill="url(#bg)" fill-opacity="0.04"/>
<ellipse cx="368.0" cy="383.8" rx="23.1" ry="6.7" fill="url(#bg)" fill-opacity="0.05"/>
<ellipse cx="415.7" cy="659.8" rx="45.9" ry="7.2" fill="url(#bg)" fill-opacity="0.05"/>
<ellipse cx="503.7" cy="271.0" rx="56.7" ry="7.4" fill="url(#bg)" fill-opacity="0.12" transform="rotate(12.8 503.7 271.0)"/>
<ellipse cx="517.6" cy="232.1" rx="56.0" ry="7.1" fill="url(#bg)" fill-opacity="0.06" transform="rotate(12.4 517.6 232.1)"/>
<ellipse cx="348.4" cy="265.6" rx="50.2" ry="7.0" fill="url(#bg)" fill-opacity="0.06" transform="rotate(20.7 348.4 265.6)"/>
<ellipse cx="546.2" cy="187.0" rx="41.1" ry="3.9" fill="url(#bg)" fill-opacity="0.04" transform="rotate(6.6 546.2 187.0)"/>
<ellipse cx="517.9" cy="606.8" rx="78.1" ry="6.6" fill="url(#bg)" fill-opacity="0.03"/>
<ellipse cx="494.1" cy="281.2" rx="71.2" ry="7.7" fill="url(#bg)" fill-opacity="0.06" transform="rotate(11.5 494.1 281.2)"/>
<ellipse cx="498.9" cy="578.3" rx="38.2" ry="6.8" fill="url(#bg)" fill-opacity="0.05"/>
<ellipse cx="364.6" cy="422.6" rx="56.9" ry="6.1" fill="url(#bg)" fill-opacity="0.03"/>
<ellipse cx="342.7" cy="729.3" rx="28.3" ry="5.0" fill="url(#bg)" fill-opacity="0.15"/>
<ellipse cx="301.1" cy="149.1" rx="28.4" ry="5.2" fill="url(#bg)" fill-opacity="0.07"/>
<ellipse cx="515.8" cy="608.8" rx="30.3" ry="7.3" fill="url(#bg)" fill-opacity="0.04"/>
<ellipse cx="557.5" cy="435.7" rx="42.4" ry="6.2" fill="url(#bg)" fill-opacity="0.06"/>
<ellipse cx="413.2" cy="678.6" rx="72.0" ry="4.3" fill="url(#bg)" fill-opacity="0.08"/>
<ellipse cx="577.8" cy="681.9" rx="51.7" ry="7.2" fill="url(#bg)" fill-opacity="0.04"/>
<ellipse cx="575.7" cy="625.4" rx="23.1" ry="7.4" fill="url(#bg)" fill-opacity="0.03"/>
<ellipse cx="514.5" cy="507.7" rx="49.2" ry="6.5" fill="url(#bg)" fill-opacity="0.08"/>
<ellipse cx="413.1" cy="232.0" rx="72.0" ry="6.0" fill="url(#bg)" fill-opacity="0.11" transform="rotate(16.2 413.1 232.0)"/>
<ellipse cx="335.5" cy="507.9" rx="36.1" ry="6.1" fill="url(#bg)" fill-opacity="0.05"/>
<ellipse cx="337.4" cy="698.3" rx="22.8" ry="4.8" fill="url(#bg)" fill-opacity="0.05"/>
<ellipse cx="366.1" cy="503.8" rx="41.7" ry="3.7" fill="url(#bg)" fill-opacity="0.05"/>
<ellipse cx="518.8" cy="161.5" rx="71.8" ry="4.0" fill="url(#bg)" fill-opacity="0.03" transform="rotate(3.9 518.8 161.5)"/>
<ellipse cx="300.3" cy="413.2" rx="51.3" ry="5.4" fill="url(#bg)" fill-opacity="0.03"/>
<ellipse cx="315.1" cy="445.4" rx="32.2" ry="6.0" fill="url(#bg)" fill-opacity="0.07"/>
<ellipse cx="516.5" cy="556.9" rx="28.0" ry="6.5" fill="url(#bg)" fill-opacity="0.06"/>
<ellipse cx="405.3" cy="727.0" rx="76.3" ry="6.9" fill="url(#bg)" fill-opacity="0.16"/>
<ellipse cx="465.6" cy="462.2" rx="80.1" ry="5.4" fill="url(#bg)" fill-opacity="0.06"/>
<ellipse cx="426.3" cy="440.3" rx="77.7" ry="6.6" fill="url(#bg)" fill-opacity="0.07"/>
<ellipse cx="331.2" cy="631.8" rx="61.2" ry="3.9" fill="url(#bg)" fill-opacity="0.07"/>
<ellipse cx="317.0" cy="418.7" rx="69.2" ry="7.4" fill="url(#bg)" fill-opacity="0.05"/>
<ellipse cx="401.7" cy="237.0" rx="62.9" ry="4.6" fill="url(#bg)" fill-opacity="0.03" transform="rotate(17.6 401.7 237.0)"/>
<ellipse cx="529.6" cy="257.4" rx="59.9" ry="5.5" fill="url(#bg)" fill-opacity="0.05" transform="rotate(13.5 529.6 257.4)"/>
<ellipse cx="392.8" cy="694.9" rx="46.5" ry="5.0" fill="url(#bg)" fill-opacity="0.03"/>
<ellipse cx="534.5" cy="697.5" rx="30.2" ry="7.4" fill="url(#bg)" fill-opacity="0.12"/>
<ellipse cx="573.0" cy="127.2" rx="53.4" ry="5.0" fill="url(#bg)" fill-opacity="0.05"/>
<ellipse cx="368.0" cy="570.1" rx="74.6" ry="5.3" fill="url(#bg)" fill-opacity="0.05"/>
<ellipse cx="412.2" cy="484.4" rx="44.5" ry="6.0" fill="url(#bg)" fill-opacity="0.07"/>
<ellipse cx="351.1" cy="324.9" rx="49.1" ry="4.7" fill="url(#bg)" fill-opacity="0.08" transform="rotate(2.2 351.1 324.9)"/>
<ellipse cx="448.5" cy="694.9" rx="76.2" ry="7.4" fill="url(#bg)" fill-opacity="0.04"/>
<ellipse cx="539.5" cy="634.1" rx="28.2" ry="6.9" fill="url(#bg)" fill-opacity="0.07"/>
<ellipse cx="399.9" cy="607.2" rx="48.1" ry="4.3" fill="url(#bg)" fill-opacity="0.06"/>
<ellipse cx="429.2" cy="205.5" rx="61.8" ry="7.2" fill="url(#bg)" fill-opacity="0.13" transform="rotate(11.6 429.2 205.5)"/>
<ellipse cx="357.2" cy="472.5" rx="31.8" ry="7.2" fill="url(#bg)" fill-opacity="0.07"/>
<ellipse cx="464.2" cy="392.5" rx="36.5" ry="7.0" fill="url(#bg)" fill-opacity="0.03"/>
<ellipse cx="375.8" cy="315.0" rx="40.1" ry="6.8" fill="url(#bg)" fill-opacity="0.08" transform="rotate(5.7 375.8 315.0)"/>
<ellipse cx="371.2" cy="512.4" rx="24.1" ry="4.0" fill="url(#bg)" fill-opacity="0.04"/>
<ellipse cx="553.8" cy="142.4" rx="79.8" ry="7.6" fill="url(#bg)" fill-opacity="0.06"/>
<ellipse cx="477.5" cy="356.0" rx="66.9" ry="4.1" fill="url(#bg)" fill-opacity="0.06"/>
<ellipse cx="419.7" cy="362.8" rx="31.7" ry="6.5" fill="url(#bg)" fill-opacity="0.08"/>
<ellipse cx="304.1" cy="699.7" rx="48.9" ry="5.0" fill="url(#bg)" fill-opacity="0.13"/>
<ellipse cx="385.8" cy="712.1" rx="46.3" ry="7.4" fill="url(#bg)" fill-opacity="0.04"/>
<ellipse cx="539.3" cy="605.0" rx="76.7" ry="6.1" fill="url(#bg)" fill-opacity="0.08"/>
<ellipse cx="402.5" cy="232.7" rx="47.6" ry="6.5" fill="url(#bg)" fill-opacity="0.08" transform="rotate(16.9 402.5 232.7)"/>
<ellipse cx="343.4" cy="561.6" rx="61.8" ry="4.4" fill="url(#bg)" fill-opacity="0.06"/>
<ellipse cx="307.6" cy="597.8" rx="25.2" ry="7.2" fill="url(#bg)" fill-opacity="0.05"/>
<ellipse cx="368.3" cy="562.8" rx="66.0" ry="7.0" fill="url(#bg)" fill-opacity="0.08"/>
<ellipse cx="330.4" cy="553.8" rx="58.4" ry="6.0" fill="url(#bg)" fill-opacity="0.05"/>
<ellipse cx="355.6" cy="195.1" rx="62.2" ry="4.2" fill="url(#bg)" fill-opacity="0.18" transform="rotate(12.9 355.6 195.1)"/>
<ellipse cx="353.4" cy="473.5" rx="59.2" ry="4.2" fill="url(#bg)" fill-opacity="0.08"/>
<ellipse cx="451.9" cy="280.4" rx="37.2" ry="7.6" fill="url(#bg)" fill-opacity="0.06" transform="rotate(12.9 451.9 280.4)"/>
<ellipse cx="351.1" cy="608.0" rx="65.9" ry="5.0" fill="url(#bg)" fill-opacity="0.05"/>
<ellipse cx="553.1" cy="667.9" rx="63.7" ry="6.3" fill="url(#bg)" fill-opacity="0.04"/>
<ellipse cx="424.3" cy="162.7" rx="53.1" ry="6.3" fill="url(#bg)" fill-opacity="0.04" transform="rotate(5.2 424.3 162.7)"/>
<ellipse cx="331.0" cy="635.2" rx="60.9" ry="3.7" fill="url(#bg)" fill-opacity="0.03"/>
<ellipse cx="485.4" cy="538.9" rx="41.5" ry="7.1" fill="url(#bg)" fill-opacity="0.06"/>
<ellipse cx="412.6" cy="213.2" rx="80.9" ry="5.6" fill="url(#bg)" fill-opacity="0.12" transform="rotate(13.4 412.6 213.2)"/>
<ellipse cx="349.5" cy="677.7" rx="81.2" ry="4.7" fill="url(#bg)" fill-opacity="0.06"/>
<ellipse cx="569.1" cy="145.5" rx="79.8" ry="5.5" fill="url(#bg)" fill-opacity="0.05"/>
<ellipse cx="582.4" cy="581.4" rx="44.5" ry="6.2" fill="url(#bg)" fill-opacity="0.05"/>
<ellipse cx="511.3" cy="501.0" rx="77.5" ry="5.6" fill="url(#bg)" fill-opacity="0.04"/>
<ellipse cx="440.1" cy="540.0" rx="23.4" ry="6.2" fill="url(#bg)" fill-opacity="0.07"/>
<ellipse cx="456.0" cy="373.8" rx="69.8" ry="5.0" fill="url(#bg)" fill-opacity="0.08"/>
<ellipse cx="561.6" cy="252.2" rx="39.0" ry="6.5" fill="url(#bg)" fill-opacity="0.08" transform="rotate(13.0 561.6 252.2)"/>
<ellipse cx="419.5" cy="202.8" rx="61.1" ry="7.5" fill="url(#bg)" fill-opacity="0.16" transform="rotate(11.6 419.5 202.8)"/>
<ellipse cx="494.1" cy="700.8" rx="72.4" ry="7.3" fill="url(#bg)" fill-opacity="0.05"/>
<ellipse cx="465.0" cy="624.7" rx="70.5" ry="7.8" fill="url(#bg)" fill-opacity="0.04"/>
<ellipse cx="571.4" cy="138.0" rx="37.1" ry="3.8" fill="url(#bg)" fill-opacity="0.03"/>
<ellipse cx="435.9" cy="720.2" rx="61.5" ry="3.6" fill="url(#bg)" fill-opacity="0.08"/>
<ellipse cx="578.8" cy="516.5" rx="25.7" ry="6.6" fill="url(#bg)" fill-opacity="0.08"/>
<ellipse cx="354.8" cy="584.8" rx="44.1" ry="5.5" fill="url(#bg)" fill-opacity="0.03"/>
<ellipse cx="545.6" cy="722.7" rx="27.7" ry="5.7" fill="url(#bg)" fill-opacity="0.08"/>
<ellipse cx="304.2" cy="686.3" rx="56.3" ry="6.7" fill="url(#bg)" fill-opacity="0.17"/>
<ellipse cx="393.5" cy="315.9" rx="44.7" ry="4.7" fill="url(#bg)" fill-opacity="0.06" transform="rotate(5.1 393.5 315.9)"/>
<ellipse cx="482.9" cy="719.1" rx="35.4" ry="5.7" fill="url(#bg)" fill-opacity="0.08"/>
<ellipse cx="528.4" cy="285.3" rx="77.2" ry="8.0" fill="url(#bg)" fill-opacity="0.06" transform="rotate(10.0 528.4 285.3)"/>
<ellipse cx="375.7" cy="468.2" rx="61.5" ry="3.6" fill="url(#bg)" fill-opacity="0.03"/>
<ellipse cx="535.8" cy="294.0" rx="74.5" ry="7.3" fill="url(#bg)" fill-opacity="0.03" transform="rotate(8.3 535.8 294.0)"/>
<ellipse cx="414.4" cy="251.3" rx="50.8" ry="4.7" fill="url(#bg)" fill-opacity="0.06" transform="rotate(18.7 414.4 251.3)"/>
<ellipse cx="379.4" cy="268.5" rx="61.3" ry="4.8" fill="url(#bg)" fill-opacity="0.06" transform="rotate(18.2 379.4 268.5)"/>
<ellipse cx="388.8" cy="564.2" rx="30.8" ry="5.9" fill="url(#bg)" fill-opacity="0.10"/>
<ellipse cx="444.2" cy="345.3" rx="67.7" ry="6.7" fill="url(#bg)" fill-opacity="0.05"/>
<ellipse cx="361.1" cy="147.1" rx="69.9" ry="6.1" fill="url(#bg)" fill-opacity="0.04"/>
<ellipse cx="518.8" cy="727.2" rx="76.8" ry="6.8" fill="url(#bg)" fill-opacity="0.03"/>
<ellipse cx="458.1" cy="555.4" rx="80.4" ry="6.9" fill="url(#bg)" fill-opacity="0.03"/>
<ellipse cx="402.0" cy="283.2" rx="65.1" ry="4.9" fill="url(#bg)" fill-opacity="0.07" transform="rotate(14.1 402.0 283.2)"/>
<ellipse cx="405.0" cy="608.9" rx="27.5" ry="7.0" fill="url(#bg)" fill-opacity="0.08"/>
<ellipse cx="584.6" cy="327.2" rx="29.5" ry="5.9" fill="url(#bg)" fill-opacity="0.06" transform="rotate(0.7 584.6 327.2)"/>
<ellipse cx="315.0" cy="716.1" rx="25.1" ry="5.0" fill="url(#bg)" fill-opacity="0.13"/>
<ellipse cx="344.8" cy="201.8" rx="56.3" ry="6.1" fill="url(#bg)" fill-opacity="0.07" transform="rotate(14.7 344.8 201.8)"/>
<ellipse cx="432.5" cy="499.5" rx="59.5" ry="4.0" fill="url(#bg)" fill-opacity="0.05"/>
<ellipse cx="561.7" cy="497.3" rx="47.9" ry="5.4" fill="url(#bg)" fill-opacity="0.05"/>
<ellipse cx="521.8" cy="194.7" rx="59.9" ry="3.8" fill="url(#bg)" fill-opacity="0.04" transform="rotate(7.8 521.8 194.7)"/>
<ellipse cx="535.3" cy="427.5" rx="53.2" ry="6.6" fill="url(#bg)" fill-opacity="0.04"/>
<ellipse cx="371.4" cy="344.8" rx="70.1" ry="5.8" fill="url(#bg)" fill-opacity="0.07"/>
<ellipse cx="385.2" cy="285.1" rx="40.6" ry="5.2" fill="url(#bg)" fill-opacity="0.07" transform="rotate(14.4 385.2 285.1)"/>
<ellipse cx="542.6" cy="546.7" rx="74.5" ry="7.1" fill="url(#bg)" fill-opacity="0.16"/>
<ellipse cx="328.3" cy="209.4" rx="60.9" ry="4.6" fill="url(#bg)" fill-opacity="0.03"/>
<ellipse cx="468.3" cy="551.3" rx="54.1" ry="4.9" fill="url(#bg)" fill-opacity="0.04"/>
<ellipse cx="547.2" cy="336.6" rx="45.1" ry="4.6" fill="url(#bg)" fill-opacity="0.05"/>
<ellipse cx="581.6" cy="641.5" rx="35.1" ry="3.5" fill="url(#bg)" fill-opacity="0.03"/>
<ellipse cx="381.4" cy="665.5" rx="76.3" ry="3.5" fill="url(#bg)" fill-opacity="0.08"/>
<ellipse cx="328.3" cy="128.6" rx="52.6" ry="5.5" fill="url(#bg)" fill-opacity="0.08"/>
<ellipse cx="579.5" cy="727.4" rx="46.2" ry="4.2" fill="url(#bg)" fill-opacity="0.06"/>
<ellipse cx="332.0" cy="221.4" rx="59.5" ry="4.3" fill="url(#bg)" fill-opacity="0.16"/>
<ellipse cx="471.5" cy="207.6" rx="40.7" ry="5.0" fill="url(#bg)" fill-opacity="0.05" transform="rotate(10.6 471.5 207.6)"/>
<ellipse cx="514.7" cy="300.5" rx="34.1" ry="5.2" fill="url(#bg)" fill-opacity="0.03" transform="rotate(7.4 514.7 300.5)"/>
<ellipse cx="552.2" cy="140.4" rx="72.4" ry="6.7" fill="url(#bg)" fill-opacity="0.04"/>
<ellipse cx="388.0" cy="562.8" rx="41.5" ry="7.4" fill="url(#bg)" fill-opacity="0.03"/>
<ellipse cx="303.7" cy="710.5" rx="57.7" ry="5.2" fill="url(#bg)" fill-opacity="0.06"/>
<ellipse cx="499.5" cy="693.9" rx="80.4" ry="7.9" fill="url(#bg)" fill-opacity="0.08"/>
<ellipse cx="430.1" cy="543.2" rx="28.3" ry="5.6" fill="url(#bg)" fill-opacity="0.03"/>
<ellipse cx="330.5" cy="701.8" rx="29.2" ry="5.5" fill="url(#bg)" fill-opacity="0.15"/>
<ellipse cx="404.1" cy="506.1" rx="79.1" ry="3.8" fill="url(#bg)" fill-opacity="0.03"/>
<ellipse cx="534.2" cy="376.8" rx="29.4" ry="4.7" fill="url(#bg)" fill-opacity="0.03"/>
<ellipse cx="395.8" cy="577.4" rx="71.2" ry="7.5" fill="url(#bg)" fill-opacity="0.04"/>
<ellipse cx="400.6" cy="132.0" rx="74.4" ry="5.6" fill="url(#bg)" fill-opacity="0.05"/>
<ellipse cx="331.0" cy="360.9" rx="33.7" ry="7.9" fill="url(#bg)" fill-opacity="0.08"/>
<ellipse cx="360.4" cy="541.2" rx="34.4" ry="6.7" fill="url(#bg)" fill-opacity="0.08"/>
<ellipse cx="463.7" cy="631.9" rx="29.5" ry="5.0" fill="url(#bg)" fill-opacity="0.07"/>
<ellipse cx="482.0" cy="367.2" rx="36.9" ry="6.8" fill="url(#bg)" fill-opacity="0.15"/>
<ellipse cx="576.6" cy="337.1" rx="80.9" ry="5.4" fill="url(#bg)" fill-opacity="0.06"/>
<ellipse cx="590.0" cy="465.4" rx="50.5" ry="7.8" fill="url(#bg)" fill-opacity="0.07"/>
<ellipse cx="462.2" cy="384.3" rx="51.9" ry="4.8" fill="url(#bg)" fill-opacity="0.04"/>
<ellipse cx="404.4" cy="495.4" rx="40.9" ry="7.2" fill="url(#bg)" fill-opacity="0.08"/>
<ellipse cx="464.8" cy="342.5" rx="42.1" ry="5.5" fill="url(#bg)" fill-opacity="0.08"/>
<ellipse cx="544.8" cy="544.7" rx="69.4" ry="4.8" fill="url(#bg)" fill-opacity="0.06"/>
<ellipse cx="448.4" cy="248.7" rx="24.7" ry="3.9" fill="url(#bg)" fill-opacity="0.03" transform="rotate(16.9 448.4 248.7)"/>
<ellipse cx="510.9" cy="361.0" rx="28.2" ry="4.8" fill="url(#bg)" fill-opacity="0.15"/>
<ellipse cx="446.1" cy="479.7" rx="33.6" ry="4.3" fill="url(#bg)" fill-opacity="0.05"/>
<ellipse cx="414.6" cy="385.7" rx="72.5" ry="4.0" fill="url(#bg)" fill-opacity="0.07"/>
<ellipse cx="313.3" cy="261.7" rx="66.5" ry="7.1" fill="url(#bg)" fill-opacity="0.06"/>
<ellipse cx="410.7" cy="431.5" rx="64.1" ry="4.9" fill="url(#bg)" fill-opacity="0.05"/>
<ellipse cx="515.0" cy="645.6" rx="34.2" ry="5.6" fill="url(#bg)" fill-opacity="0.06"/>
<ellipse cx="364.9" cy="288.8" rx="23.6" ry="6.4" fill="url(#bg)" fill-opacity="0.05" transform="rotate(14.3 364.9 288.8)"/>
<ellipse cx="380.8" cy="559.7" rx="56.4" ry="4.5" fill="url(#bg)" fill-opacity="0.08"/>
<ellipse cx="369.7" cy="453.5" rx="81.9" ry="7.1" fill="url(#bg)" fill-opacity="0.15"/>
<ellipse cx="541.9" cy="346.2" rx="49.7" ry="7.3" fill="url(#bg)" fill-opacity="0.08"/>
<ellipse cx="391.7" cy="183.8" rx="71.3" ry="7.9" fill="url(#bg)" fill-opacity="0.05" transform="rotate(9.4 391.7 183.8)"/>
<ellipse cx="309.8" cy="623.7" rx="25.8" ry="5.9" fill="url(#bg)" fill-opacity="0.05"/>
<ellipse cx="361.5" cy="521.6" rx="60.5" ry="3.9" fill="url(#bg)" fill-opacity="0.05"/>
<ellipse cx="334.4" cy="608.6" rx="48.9" ry="4.0" fill="url(#bg)" fill-opacity="0.08"/>
<ellipse cx="515.6" cy="702.6" rx="81.6" ry="7.1" fill="url(#bg)" fill-opacity="0.07"/>
<ellipse cx="421.3" cy="228.4" rx="31.4" ry="3.9" fill="url(#bg)" fill-opacity="0.07" transform="rotate(15.3 421.3 228.4)"/>
<polygon points="372,70 600,78 600,118 372,126" fill="#fff" fill-opacity="0.1" filter="url(#bl)"/>
<polygon points="300,130 600,118 600,150 300,160" fill="#fff" fill-opacity="0.05" filter="url(#bl)"/>
<ellipse cx="148.9" cy="82.2" rx="5.7" ry="12.2" fill="url(#bm)" fill-opacity="1.00"/>
<ellipse cx="174.8" cy="74.8" rx="7.3" ry="8.2" fill="url(#bm)" fill-opacity="0.95"/>
<ellipse cx="197.1" cy="76.7" rx="4.1" ry="9.0" fill="url(#bm)" fill-opacity="0.70"/>
<ellipse cx="132.8" cy="73.5" rx="5.2" ry="9.3" fill="url(#bg)" fill-opacity="0.44"/>
<ellipse cx="141.4" cy="71.1" rx="4.2" ry="7.3" fill="url(#bg)" fill-opacity="0.37"/>
<ellipse cx="293.5" cy="68.6" rx="5.8" ry="3.6" fill="url(#bf)" fill-opacity="0.95"/>
<ellipse cx="260.1" cy="67.4" rx="15.6" ry="4.2" fill="url(#bg)" fill-opacity="0.31"/>
<ellipse cx="242.8" cy="66.1" rx="20.8" ry="3.1" fill="url(#bg)" fill-opacity="0.20"/>
<ellipse cx="74.7" cy="108.1" rx="6.2" ry="11.4" fill="url(#bg)" fill-opacity="0.52"/>
<ellipse cx="61.1" cy="82.2" rx="13.0" ry="4.2" fill="url(#bg)" fill-opacity="0.25"/>
<ellipse cx="88.3" cy="181.1" rx="4.1" ry="14.3" fill="url(#bm)" fill-opacity="0.90"/>
<ellipse cx="68.5" cy="199.6" rx="8.3" ry="8.3" fill="url(#bg)" fill-opacity="0.44"/>
<ellipse cx="85.8" cy="220.6" rx="4.9" ry="9.0" fill="url(#bm)" fill-opacity="0.60"/>
<ellipse cx="89.5" cy="225.5" rx="3.3" ry="4.1" fill="url(#bm)" fill-opacity="0.65"/>
<ellipse cx="142.7" cy="240.4" rx="3.3" ry="5.7" fill="url(#bm)" fill-opacity="0.70"/>
<ellipse cx="295.9" cy="231.7" rx="9.3" ry="8.0" fill="url(#bf)" fill-opacity="1.00"/>
<ellipse cx="111.8" cy="74.8" rx="5.2" ry="10.4" fill="url(#bg)" fill-opacity="0.20"/>
<ellipse cx="158.7" cy="225.5" rx="6.2" ry="15.6" fill="url(#bg)" fill-opacity="0.20"/>
<ellipse cx="121.7" cy="225.5" rx="5.2" ry="13.0" fill="url(#bg)" fill-opacity="0.20"/>
<ellipse cx="181.0" cy="228.0" rx="5.2" ry="15.6" fill="url(#bg)" fill-opacity="0.20"/>
<ellipse cx="319.4" cy="178.6" rx="7.3" ry="7.3" fill="url(#bg)" fill-opacity="0.25"/>
<ellipse cx="282.3" cy="141.5" rx="6.2" ry="13.0" fill="url(#bg)" fill-opacity="0.20"/>
<ellipse cx="297.2" cy="161.3" rx="5.2" ry="10.4" fill="url(#bg)" fill-opacity="0.15"/>
<ellipse cx="68.5" cy="144.0" rx="5.2" ry="13.0" fill="url(#bg)" fill-opacity="0.20"/>
<ellipse cx="63.6" cy="233.0" rx="7.8" ry="5.2" fill="url(#bg)" fill-opacity="0.25"/>
<ellipse cx="82.1" cy="95.8" rx="5.2" ry="13.0" fill="url(#bg)" fill-opacity="0.20"/>
<ellipse cx="89.5" cy="108.1" rx="4.2" ry="10.4" fill="url(#bg)" fill-opacity="0.20"/>
<ellipse cx="195.8" cy="215.7" rx="5.2" ry="13.0" fill="url(#bg)" fill-opacity="0.15"/>
<ellipse cx="220.5" cy="225.5" rx="5.2" ry="13.0" fill="url(#bg)" fill-opacity="0.15"/>
<ellipse cx="106.8" cy="218.1" rx="5.2" ry="10.4" fill="url(#bg)" fill-opacity="0.20"/>
<ellipse cx="282.3" cy="106.9" rx="5.2" ry="10.4" fill="url(#bg)" fill-opacity="0.15"/>
<ellipse cx="316.9" cy="79.7" rx="20.8" ry="7.8" fill="url(#bg)" fill-opacity="0.20"/>
<ellipse cx="321.9" cy="97.0" rx="15.6" ry="5.2" fill="url(#bg)" fill-opacity="0.15"/>
<ellipse cx="163.7" cy="92.1" rx="5.2" ry="13.0" fill="url(#bg)" fill-opacity="0.13"/>
<ellipse cx="188.4" cy="94.5" rx="5.2" ry="13.0" fill="url(#bg)" fill-opacity="0.12"/>
<ellipse cx="223.0" cy="84.7" rx="5.2" ry="13.0" fill="url(#bg)" fill-opacity="0.12"/>
<ellipse cx="376.1" cy="158.2" rx="22.2" ry="9.8" fill="url(#bf)" fill-opacity="1.00"/>
<ellipse cx="376.1" cy="158.3" rx="33.2" ry="15.6" fill="url(#bg)" fill-opacity="0.37"/>
<ellipse cx="369.4" cy="121.2" rx="16.3" ry="5.7" fill="url(#bm)" fill-opacity="0.65"/>
<ellipse cx="364.5" cy="123.0" rx="36.3" ry="11.4" fill="url(#bg)" fill-opacity="0.31"/>
<ellipse cx="563.5" cy="125.4" rx="62.3" ry="9.3" fill="url(#bg)" fill-opacity="0.52"/>
<ellipse cx="562.2" cy="135.3" rx="67.5" ry="7.3" fill="url(#bg)" fill-opacity="0.44"/>
<ellipse cx="543.7" cy="124.2" rx="20.8" ry="6.2" fill="url(#bg)" fill-opacity="0.57"/>
<ellipse cx="493.0" cy="140.3" rx="109.0" ry="11.4" fill="url(#bg)" fill-opacity="0.44"/>
<ellipse cx="458.4" cy="141.5" rx="171.3" ry="13.5" fill="url(#bg)" fill-opacity="0.20"/>
<ellipse cx="567.2" cy="181.1" rx="48.9" ry="4.0" fill="url(#bf)" fill-opacity="0.95"/>
<ellipse cx="557.3" cy="181.1" rx="98.6" ry="10.4" fill="url(#bg)" fill-opacity="0.44" transform="rotate(5.7 557.3 181.1)"/>
<ellipse cx="357.1" cy="171.2" rx="18.2" ry="9.3" fill="url(#bg)" fill-opacity="0.31"/>
<ellipse cx="438.6" cy="197.1" rx="62.3" ry="13.0" fill="url(#bg)" fill-opacity="0.20" transform="rotate(10.1 438.6 197.1)"/>
<ellipse cx="505.4" cy="158.8" rx="181.7" ry="10.4" fill="url(#bg)" fill-opacity="0.15" transform="rotate(3.7 505.4 158.8)"/>
<ellipse cx="468.3" cy="173.6" rx="155.7" ry="7.8" fill="url(#bg)" fill-opacity="0.13" transform="rotate(6.1 468.3 173.6)"/>
<ellipse cx="329.9" cy="223.1" rx="5.2" ry="5.2" fill="url(#bg)" fill-opacity="0.20"/>
<ellipse cx="394.1" cy="213.2" rx="77.9" ry="5.2" fill="url(#bg)" fill-opacity="0.12" transform="rotate(14.2 394.1 213.2)"/>
<ellipse cx="342.2" cy="131.6" rx="31.1" ry="10.4" fill="url(#bg)" fill-opacity="0.15"/>
<ellipse cx="334.8" cy="111.8" rx="26.0" ry="9.3" fill="url(#bg)" fill-opacity="0.13"/>
<ellipse cx="344.7" cy="89.6" rx="41.5" ry="13.0" fill="url(#bg)" fill-opacity="0.12"/>
<ellipse cx="329.9" cy="193.4" rx="10.4" ry="6.2" fill="url(#bg)" fill-opacity="0.15"/>
<ellipse cx="319.4" cy="251.1" rx="12.5" ry="11.1" fill="url(#bf)" fill-opacity="1.00"/>
<ellipse cx="319.4" cy="251.1" rx="20.8" ry="18.7" fill="url(#bg)" fill-opacity="0.44"/>
<ellipse cx="309.5" cy="304.2" rx="8.0" ry="9.8" fill="url(#bf)" fill-opacity="0.95"/>
<ellipse cx="320.6" cy="303.0" rx="8.0" ry="11.1" fill="url(#bf)" fill-opacity="1.00"/>
<ellipse cx="315.0" cy="303.7" rx="26.0" ry="18.2" fill="url(#bg)" fill-opacity="0.44"/>
<ellipse cx="287.3" cy="317.8" rx="4.9" ry="5.7" fill="url(#bm)" fill-opacity="0.60"/>
<ellipse cx="297.2" cy="403.1" rx="20.0" ry="8.0" fill="url(#bf)" fill-opacity="0.63"/>
<ellipse cx="297.2" cy="403.1" rx="33.7" ry="14.5" fill="url(#bg)" fill-opacity="0.44"/>
<ellipse cx="304.6" cy="349.9" rx="9.3" ry="9.3" fill="url(#bg)" fill-opacity="0.44"/>
<ellipse cx="106.4" cy="244.9" rx="4.2" ry="7.3" fill="url(#bg)" fill-opacity="0.44"/>
<ellipse cx="127.9" cy="256.0" rx="4.2" ry="8.3" fill="url(#bg)" fill-opacity="0.37"/>
<ellipse cx="68.5" cy="265.9" rx="4.2" ry="8.3" fill="url(#bg)" fill-opacity="0.44"/>
<ellipse cx="218.6" cy="257.2" rx="4.2" ry="8.3" fill="url(#bg)" fill-opacity="0.37"/>
<ellipse cx="127.9" cy="301.7" rx="4.2" ry="9.3" fill="url(#bg)" fill-opacity="0.37"/>
<ellipse cx="218.1" cy="290.6" rx="6.2" ry="6.2" fill="url(#bg)" fill-opacity="0.25"/>
<ellipse cx="74.7" cy="335.1" rx="6.2" ry="6.2" fill="url(#bg)" fill-opacity="0.20"/>
<ellipse cx="261.3" cy="337.6" rx="13.0" ry="5.2" fill="url(#bg)" fill-opacity="0.25"/>
<ellipse cx="174.8" cy="380.8" rx="5.2" ry="13.0" fill="url(#bg)" fill-opacity="0.25"/>
<ellipse cx="116.7" cy="379.6" rx="7.8" ry="7.8" fill="url(#bg)" fill-opacity="0.20"/>
<ellipse cx="121.7" cy="408.0" rx="5.2" ry="10.4" fill="url(#bg)" fill-opacity="0.20"/>
<ellipse cx="89.5" cy="383.3" rx="4.2" ry="7.8" fill="url(#bg)" fill-opacity="0.15"/>
<ellipse cx="73.5" cy="388.2" rx="4.2" ry="10.4" fill="url(#bg)" fill-opacity="0.15"/>
<ellipse cx="229.2" cy="247.4" rx="4.2" ry="7.3" fill="url(#bg)" fill-opacity="0.20"/>
<ellipse cx="245.3" cy="248.6" rx="4.2" ry="13.0" fill="url(#bg)" fill-opacity="0.15"/>
<ellipse cx="297.2" cy="373.4" rx="41.5" ry="4.2" fill="url(#bg)" fill-opacity="0.20"/>
<ellipse cx="307.0" cy="363.5" rx="31.1" ry="4.2" fill="url(#bg)" fill-opacity="0.20"/>
<ellipse cx="297.2" cy="388.2" rx="41.5" ry="4.2" fill="url(#bg)" fill-opacity="0.25"/>
<ellipse cx="309.5" cy="294.3" rx="26.0" ry="4.2" fill="url(#bg)" fill-opacity="0.25"/>
<ellipse cx="282.3" cy="284.4" rx="5.2" ry="13.0" fill="url(#bg)" fill-opacity="0.15"/>
<ellipse cx="153.8" cy="259.7" rx="4.2" ry="8.3" fill="url(#bg)" fill-opacity="0.15"/>
<ellipse cx="185.9" cy="296.8" rx="4.2" ry="7.3" fill="url(#bg)" fill-opacity="0.13"/>
<ellipse cx="89.5" cy="356.1" rx="4.2" ry="8.3" fill="url(#bg)" fill-opacity="0.13"/>
<ellipse cx="168.6" cy="336.3" rx="4.2" ry="6.2" fill="url(#bg)" fill-opacity="0.15"/>
<ellipse cx="109.3" cy="262.2" rx="6.2" ry="5.2" fill="url(#bg)" fill-opacity="0.15"/>
<ellipse cx="347.2" cy="368.0" rx="15.6" ry="11.1" fill="url(#bf)" fill-opacity="1.00"/>
<ellipse cx="347.2" cy="368.0" rx="26.0" ry="18.7" fill="url(#bg)" fill-opacity="0.44"/>
<ellipse cx="347.2" cy="265.9" rx="13.0" ry="6.2" fill="url(#bg)" fill-opacity="0.37"/>
<ellipse cx="360.8" cy="256.0" rx="10.4" ry="10.4" fill="url(#bg)" fill-opacity="0.25"/>
<ellipse cx="375.6" cy="409.2" rx="16.0" ry="6.7" fill="url(#bf)" fill-opacity="1.00"/>
<ellipse cx="418.9" cy="409.2" rx="155.7" ry="14.0" fill="url(#bg)" fill-opacity="0.44"/>
<ellipse cx="455.9" cy="410.0" rx="20.4" ry="4.9" fill="url(#bm)" fill-opacity="0.63"/>
<ellipse cx="401.6" cy="409.2" rx="53.0" ry="6.1" fill="url(#bm)" fill-opacity="0.60"/>
<ellipse cx="507.8" cy="265.2" rx="46.7" ry="5.2" fill="url(#bg)" fill-opacity="0.31" transform="rotate(13.4 507.8 265.2)"/>
<ellipse cx="490.5" cy="306.7" rx="20.8" ry="7.8" fill="url(#bg)" fill-opacity="0.20" transform="rotate(6.4 490.5 306.7)"/>
<ellipse cx="557.3" cy="307.9" rx="20.8" ry="7.8" fill="url(#bg)" fill-opacity="0.20" transform="rotate(5.3 557.3 307.9)"/>
<ellipse cx="357.1" cy="383.3" rx="36.3" ry="5.2" fill="url(#bg)" fill-opacity="0.31"/>
<ellipse cx="480.7" cy="338.8" rx="77.9" ry="7.8" fill="url(#bg)" fill-opacity="0.11"/>
<ellipse cx="443.6" cy="249.8" rx="77.9" ry="6.2" fill="url(#bg)" fill-opacity="0.12" transform="rotate(17.3 443.6 249.8)"/>
<ellipse cx="468.3" cy="259.7" rx="103.8" ry="6.2" fill="url(#bg)" fill-opacity="0.11" transform="rotate(15.3 468.3 259.7)"/>
<ellipse cx="357.1" cy="311.6" rx="20.8" ry="10.4" fill="url(#bg)" fill-opacity="0.15"/>
<ellipse cx="431.2" cy="279.5" rx="62.3" ry="5.2" fill="url(#bg)" fill-opacity="0.08" transform="rotate(13.8 431.2 279.5)"/>
<ellipse cx="530.1" cy="284.4" rx="77.9" ry="5.2" fill="url(#bg)" fill-opacity="0.08" transform="rotate(10.1 530.1 284.4)"/>
<ellipse cx="443.6" cy="363.5" rx="103.8" ry="5.2" fill="url(#bg)" fill-opacity="0.08"/>
<ellipse cx="58.7" cy="491.6" rx="3.3" ry="10.2" fill="url(#bm)" fill-opacity="0.95"/>
<ellipse cx="220.5" cy="497.8" rx="20.4" ry="11.4" fill="url(#bm)" fill-opacity="0.62"/>
<ellipse cx="213.1" cy="494.1" rx="4.9" ry="4.9" fill="url(#bm)" fill-opacity="0.70"/>
<ellipse cx="225.5" cy="496.6" rx="4.1" ry="4.9" fill="url(#bm)" fill-opacity="0.72"/>
<ellipse cx="230.4" cy="504.0" rx="3.3" ry="4.9" fill="url(#bm)" fill-opacity="0.65"/>
<ellipse cx="207.4" cy="506.9" rx="3.3" ry="3.3" fill="url(#bm)" fill-opacity="0.85"/>
<ellipse cx="185.9" cy="529.9" rx="3.3" ry="4.9" fill="url(#bm)" fill-opacity="0.80"/>
<ellipse cx="185.9" cy="536.6" rx="3.3" ry="4.1" fill="url(#bm)" fill-opacity="0.65"/>
<ellipse cx="111.3" cy="448.4" rx="4.2" ry="6.2" fill="url(#bg)" fill-opacity="0.44"/>
<ellipse cx="111.3" cy="499.0" rx="3.3" ry="6.5" fill="url(#bm)" fill-opacity="0.60"/>
<ellipse cx="111.3" cy="507.7" rx="3.1" ry="4.2" fill="url(#bg)" fill-opacity="0.52"/>
<ellipse cx="164.9" cy="448.4" rx="4.2" ry="4.2" fill="url(#bg)" fill-opacity="0.44"/>
<ellipse cx="79.7" cy="447.1" rx="3.1" ry="7.3" fill="url(#bg)" fill-opacity="0.37"/>
<ellipse cx="116.7" cy="469.4" rx="3.1" ry="5.2" fill="url(#bg)" fill-opacity="0.31"/>
<ellipse cx="121.7" cy="513.9" rx="3.1" ry="5.2" fill="url(#bg)" fill-opacity="0.37"/>
<ellipse cx="84.6" cy="533.6" rx="3.1" ry="6.2" fill="url(#bg)" fill-opacity="0.37"/>
<ellipse cx="63.6" cy="541.5" rx="4.2" ry="5.2" fill="url(#bg)" fill-opacity="0.44"/>
<ellipse cx="84.6" cy="569.5" rx="3.3" ry="4.1" fill="url(#bm)" fill-opacity="0.80"/>
<ellipse cx="228.0" cy="569.5" rx="7.3" ry="6.1" fill="url(#bm)" fill-opacity="0.60"/>
<ellipse cx="257.6" cy="564.0" rx="20.8" ry="7.8" fill="url(#bg)" fill-opacity="0.52"/>
<ellipse cx="247.7" cy="542.3" rx="10.4" ry="6.2" fill="url(#bg)" fill-opacity="0.37"/>
<ellipse cx="295.9" cy="495.3" rx="18.4" ry="6.5" fill="url(#bm)" fill-opacity="0.70"/>
<ellipse cx="297.2" cy="500.3" rx="14.3" ry="4.1" fill="url(#bm)" fill-opacity="0.65"/>
<ellipse cx="294.7" cy="496.6" rx="33.7" ry="14.5" fill="url(#bg)" fill-opacity="0.44"/>
<ellipse cx="297.2" cy="457.0" rx="23.4" ry="4.2" fill="url(#bg)" fill-opacity="0.44"/>
<ellipse cx="315.7" cy="452.1" rx="13.0" ry="3.1" fill="url(#bg)" fill-opacity="0.44"/>
<ellipse cx="312.0" cy="458.3" rx="13.0" ry="3.1" fill="url(#bg)" fill-opacity="0.44"/>
<ellipse cx="284.8" cy="480.5" rx="10.4" ry="4.2" fill="url(#bg)" fill-opacity="0.44"/>
<ellipse cx="304.6" cy="433.5" rx="10.4" ry="3.1" fill="url(#bg)" fill-opacity="0.37"/>
<ellipse cx="246.5" cy="470.6" rx="6.2" ry="5.2" fill="url(#bg)" fill-opacity="0.31"/>
<ellipse cx="197.1" cy="480.5" rx="3.1" ry="7.3" fill="url(#bg)" fill-opacity="0.31"/>
<ellipse cx="210.7" cy="486.7" rx="4.2" ry="5.2" fill="url(#bg)" fill-opacity="0.31"/>
<ellipse cx="181.0" cy="452.1" rx="4.2" ry="5.2" fill="url(#bg)" fill-opacity="0.25"/>
<ellipse cx="178.5" cy="434.8" rx="4.2" ry="10.4" fill="url(#bg)" fill-opacity="0.20"/>
<ellipse cx="84.6" cy="464.4" rx="4.2" ry="7.3" fill="url(#bg)" fill-opacity="0.20"/>
<ellipse cx="64.8" cy="447.1" rx="4.2" ry="6.2" fill="url(#bg)" fill-opacity="0.20"/>
<ellipse cx="134.0" cy="434.8" rx="4.2" ry="8.3" fill="url(#bg)" fill-opacity="0.15"/>
<ellipse cx="148.9" cy="454.5" rx="4.2" ry="6.2" fill="url(#bg)" fill-opacity="0.15"/>
<ellipse cx="99.4" cy="479.3" rx="4.2" ry="6.2" fill="url(#bg)" fill-opacity="0.18"/>
<ellipse cx="158.7" cy="504.0" rx="4.2" ry="7.3" fill="url(#bg)" fill-opacity="0.18"/>
<ellipse cx="72.2" cy="513.9" rx="4.2" ry="7.3" fill="url(#bg)" fill-opacity="0.18"/>
<ellipse cx="100.7" cy="531.2" rx="4.2" ry="7.3" fill="url(#bg)" fill-opacity="0.18"/>
<ellipse cx="148.9" cy="541.1" rx="5.2" ry="6.2" fill="url(#bg)" fill-opacity="0.20"/>
<ellipse cx="173.6" cy="543.5" rx="6.2" ry="5.2" fill="url(#bg)" fill-opacity="0.18"/>
<ellipse cx="64.8" cy="553.4" rx="4.2" ry="7.3" fill="url(#bg)" fill-opacity="0.18"/>
<ellipse cx="210.7" cy="459.5" rx="5.2" ry="7.3" fill="url(#bg)" fill-opacity="0.20"/>
<ellipse cx="237.8" cy="479.3" rx="4.2" ry="6.2" fill="url(#bg)" fill-opacity="0.20"/>
<ellipse cx="260.1" cy="508.9" rx="5.2" ry="7.3" fill="url(#bg)" fill-opacity="0.18"/>
<ellipse cx="223.0" cy="553.4" rx="15.6" ry="4.2" fill="url(#bg)" fill-opacity="0.18"/>
<ellipse cx="297.2" cy="444.7" rx="31.1" ry="4.2" fill="url(#bg)" fill-opacity="0.20"/>
<ellipse cx="309.5" cy="471.8" rx="26.0" ry="4.2" fill="url(#bg)" fill-opacity="0.20"/>
<ellipse cx="307.0" cy="518.8" rx="31.1" ry="4.2" fill="url(#bg)" fill-opacity="0.15"/>
<ellipse cx="316.9" cy="531.2" rx="26.0" ry="4.2" fill="url(#bg)" fill-opacity="0.20"/>
<ellipse cx="284.8" cy="563.3" rx="31.1" ry="4.2" fill="url(#bg)" fill-opacity="0.15"/>
<ellipse cx="339.8" cy="547.2" rx="22.2" ry="11.1" fill="url(#bf)" fill-opacity="1.00"/>
<ellipse cx="339.8" cy="547.2" rx="36.3" ry="18.7" fill="url(#bg)" fill-opacity="0.44"/>
<ellipse cx="416.4" cy="537.3" rx="35.6" ry="11.1" fill="url(#bf)" fill-opacity="0.61"/>
<ellipse cx="413.9" cy="538.6" rx="77.9" ry="20.8" fill="url(#bg)" fill-opacity="0.37"/>
<ellipse cx="406.5" cy="458.3" rx="46.7" ry="5.2" fill="url(#bg)" fill-opacity="0.44"/>
<ellipse cx="416.4" cy="466.9" rx="26.0" ry="6.2" fill="url(#bg)" fill-opacity="0.47"/>
<ellipse cx="401.6" cy="459.5" rx="67.5" ry="11.4" fill="url(#bg)" fill-opacity="0.20"/>
<ellipse cx="451.0" cy="510.2" rx="77.9" ry="6.2" fill="url(#bg)" fill-opacity="0.44"/>
<ellipse cx="443.6" cy="510.9" rx="114.2" ry="10.4" fill="url(#bg)" fill-opacity="0.18"/>
<ellipse cx="542.4" cy="463.2" rx="46.7" ry="5.2" fill="url(#bg)" fill-opacity="0.44"/>
<ellipse cx="537.5" cy="463.2" rx="77.9" ry="9.3" fill="url(#bg)" fill-opacity="0.20"/>
<ellipse cx="540.0" cy="587.5" rx="103.8" ry="10.4" fill="url(#bg)" fill-opacity="0.53"/>
<ellipse cx="549.9" cy="585.5" rx="57.1" ry="4.2" fill="url(#bg)" fill-opacity="0.44"/>
<ellipse cx="542.4" cy="596.7" rx="51.9" ry="5.2" fill="url(#bg)" fill-opacity="0.15"/>
<ellipse cx="493.0" cy="437.2" rx="129.8" ry="6.2" fill="url(#bg)" fill-opacity="0.12"/>
<ellipse cx="468.3" cy="486.7" rx="129.8" ry="5.2" fill="url(#bg)" fill-opacity="0.11"/>
<ellipse cx="517.7" cy="553.4" rx="93.4" ry="5.2" fill="url(#bg)" fill-opacity="0.11"/>
<ellipse cx="369.4" cy="573.2" rx="62.3" ry="5.2" fill="url(#bg)" fill-opacity="0.12"/>
<ellipse cx="247.7" cy="723.0" rx="35.6" ry="6.2" fill="url(#bf)" fill-opacity="0.90"/>
<ellipse cx="252.7" cy="724.2" rx="62.3" ry="11.4" fill="url(#bg)" fill-opacity="0.44"/>
<ellipse cx="178.5" cy="710.1" rx="20.8" ry="4.2" fill="url(#bg)" fill-opacity="0.25"/>
<ellipse cx="297.2" cy="641.4" rx="20.8" ry="7.8" fill="url(#bg)" fill-opacity="0.20"/>
<ellipse cx="247.7" cy="631.5" rx="10.4" ry="7.8" fill="url(#bg)" fill-opacity="0.15"/>
<ellipse cx="99.4" cy="710.6" rx="93.4" ry="26.0" fill="url(#bg)" fill-opacity="0.09"/>
<ellipse cx="87.1" cy="690.9" rx="12.2" ry="2.0" fill="url(#bm)" fill-opacity="0.60"/>
<ellipse cx="131.6" cy="698.3" rx="5.2" ry="13.0" fill="url(#bg)" fill-opacity="0.15"/>
<ellipse cx="74.7" cy="703.2" rx="10.4" ry="13.0" fill="url(#bg)" fill-opacity="0.13"/>
<ellipse cx="111.8" cy="720.5" rx="31.1" ry="5.2" fill="url(#bg)" fill-opacity="0.15"/>
<ellipse cx="386.7" cy="619.2" rx="36.3" ry="9.3" fill="url(#bg)" fill-opacity="0.37"/>
<ellipse cx="394.1" cy="619.2" rx="77.9" ry="12.5" fill="url(#bg)" fill-opacity="0.15"/>
<ellipse cx="480.7" cy="647.6" rx="26.0" ry="7.8" fill="url(#bg)" fill-opacity="0.22"/>
<ellipse cx="364.5" cy="652.6" rx="10.4" ry="6.2" fill="url(#bg)" fill-opacity="0.20"/>
<ellipse cx="517.7" cy="610.5" rx="31.1" ry="4.2" fill="url(#bg)" fill-opacity="0.25"/>
<ellipse cx="542.4" cy="593.2" rx="51.9" ry="4.2" fill="url(#bg)" fill-opacity="0.44"/>
<ellipse cx="418.9" cy="648.8" rx="155.7" ry="6.2" fill="url(#bg)" fill-opacity="0.11"/>
<ellipse cx="443.6" cy="690.9" rx="103.8" ry="5.2" fill="url(#bg)" fill-opacity="0.07"/>
<ellipse cx="357.1" cy="614.2" rx="31.1" ry="5.2" fill="url(#bg)" fill-opacity="0.15"/>
<ellipse cx="132.7" cy="73.7" rx="4.9" ry="9.0" fill="url(#bg)" fill-opacity="0.44"/>
<ellipse cx="140.5" cy="69.8" rx="4.1" ry="5.7" fill="url(#bg)" fill-opacity="0.44"/>
<ellipse cx="154.1" cy="71.8" rx="5.7" ry="4.9" fill="url(#bg)" fill-opacity="0.31"/>
<ellipse cx="159.9" cy="76.0" rx="5.7" ry="4.9" fill="url(#bg)" fill-opacity="0.28"/>
<ellipse cx="170.6" cy="76.0" rx="4.9" ry="6.5" fill="url(#bg)" fill-opacity="0.52"/>
<ellipse cx="181.3" cy="71.8" rx="5.7" ry="4.1" fill="url(#bg)" fill-opacity="0.37"/>
<ellipse cx="148.3" cy="88.3" rx="4.1" ry="5.7" fill="url(#bg)" fill-opacity="0.44"/>
<ellipse cx="115.3" cy="74.7" rx="4.9" ry="7.3" fill="url(#bg)" fill-opacity="0.22"/>
<ellipse cx="125.0" cy="70.8" rx="4.1" ry="4.9" fill="url(#bg)" fill-opacity="0.20"/>
<ellipse cx="189.0" cy="85.4" rx="4.1" ry="9.0" fill="url(#bg)" fill-opacity="0.20"/>
<ellipse cx="237.6" cy="66.3" rx="61.2" ry="2.4" fill="url(#bg)" fill-opacity="0.33"/>
<ellipse cx="258.9" cy="69.8" rx="7.3" ry="4.1" fill="url(#bg)" fill-opacity="0.44"/>
<ellipse cx="212.3" cy="68.3" rx="16.3" ry="2.4" fill="url(#bg)" fill-opacity="0.25"/>
<ellipse cx="74.5" cy="100.9" rx="5.7" ry="16.3" fill="url(#bg)" fill-opacity="0.20"/>
<ellipse cx="75.4" cy="118.4" rx="4.9" ry="12.2" fill="url(#bg)" fill-opacity="0.18"/>
<ellipse cx="68.7" cy="143.6" rx="4.9" ry="12.2" fill="url(#bg)" fill-opacity="0.20"/>
<ellipse cx="86.1" cy="75.7" rx="8.2" ry="5.7" fill="url(#bg)" fill-opacity="0.15"/>
<ellipse cx="64.8" cy="82.4" rx="12.2" ry="2.4" fill="url(#bg)" fill-opacity="0.31"/>
</g>
<path d="M79.5 64V731M143.5 64V731M207.5 64V731M271.5 64V731M335.5 64V731M400.5 64V731M464.5 64V731M528.5 64V731M57 151H588M57 238H588M57 325H588M57 412H588M57 499H588M57 586H588M57 673H588M57.5 64V731M587.5 64V731M57 64.5H588M57 730.5H588" stroke="#000" stroke-width="1" stroke-dasharray="1 2" fill="none" shape-rendering="crispEdges"/>
<polyline points="305.1,63.6 304.8,104.0 303.6,107.0 303.6,151.0 304.4,188.0 306.7,218.6 308.7,239.0 311.0,250.0 311.4,273.0 312.6,293.7 317.2,310.0 322.5,326.0 333.3,351.0 344.0,369.7 356.3,388.0 370.0,411.0 375.5,420.0 405.7,458.4 435.0,499.3 450.4,522.3 465.7,547.8 486.2,583.6 494.2,600.0 505.5,619.4 516.4,637.0 534.0,672.3 551.6,703.8 560.9,720.5 562.8,731.0" fill="none" stroke="#f3c46b" stroke-width="2.8" stroke-linejoin="round"/>
<polyline points="269.8,63.6 270.5,110.0 271.6,150.8 275.0,188.0 279.0,219.0 281.6,239.0 284.5,252.0 286.6,273.0 288.9,293.7 298.0,326.0 311.0,351.0 324.0,369.7 331.0,381.0 329.4,397.0 327.5,411.0 329.0,420.0 334.0,458.4 339.2,499.3 350.7,522.3 363.5,547.8 380.0,583.6 385.8,600.0 395.0,619.4 404.3,637.0 419.1,672.3 433.0,703.8 439.5,718.6 440.4,731.0" fill="none" stroke="#e58a84" stroke-width="5.4" stroke-linejoin="round"/>
</svg>
<div class="a sb" style="left:589px;top:64px;width:18px;height:667px"></div>
<div class="a" style="left:589px;top:77px;width:17px;height:1px;background:#d5d5d5"></div>
<svg class="a" style="left:589px;top:64px" width="18" height="14"><path d="M3.5 9.5l4-4 4 4z" fill="#666"/></svg>
<div class="a sb" style="left:55.5px;top:733px;width:534px;height:14px"></div>
<div class="a" style="left:71px;top:734px;width:1px;height:13px;background:#d5d5d5"></div>
<svg class="a" style="left:57px;top:733px" width="14" height="14"><path d="M8.5 3.5l-4 4 4 4z" fill="#555"/></svg>
<div class="a" style="left:0;top:754px;width:607px;height:1px;background:#d4d4d4"></div>
<div class="a" style="left:2.5px;top:755px;width:105px;height:21px;border:1px solid #d9d9d9;border-top:none;background:#f0f0f0"></div>
<div class="t" style="left:14.8px;top:760.0px;font-size:12px;transform:scaleX(0.961);transform-origin:0 0;">Radon Analysis</div>
<div class="a" style="left:107.5px;top:754px;width:111.5px;height:24.5px;border:1px solid #a9c9e6;border-top:none;background:#e8f3fd;border-radius:0 0 2px 2px"></div>
<div class="t" style="left:119.3px;top:761.0px;font-size:12px;transform:scaleX(0.983);transform-origin:0 0;">Velocity Analysis</div>
<div class="a" style="left:607px;top:0;width:4px;height:782px;background:#f0f0f0"></div>
<div class="a" style="left:610.6px;top:0;width:2.2px;height:782px;background:#5c5c5c"></div>
<div class="a rw"></div>
<div class="a" style="left:1079px;top:27px;width:2px;height:755px;background:#f0f0f0"></div>
<div class="a" style="left:1080.4px;top:0;width:1.4px;height:782px;background:#4a4a4a"></div>
<div class="a" style="left:1081px;top:8px;width:1.5px;height:10px;background:#ea6a1f"></div>
<svg class="a" style="left:621.5px;top:5.2px" width="14.560000000000002" height="12.32" viewBox="0 0 13 11"><path d="M4.2 1.2C1.6 2.6.4 5.6 1.6 8.4" fill="none" stroke="#f58220" stroke-width="1.4" stroke-linecap="round"/><path d="M11.6 1.6c1 3.2-1.2 6.6-5.6 8" fill="none" stroke="#f58220" stroke-width="1.5" stroke-linecap="round"/><text x="3.6" y="7.6" font-family="Liberation Sans,sans-serif" font-weight="bold" font-size="8.5" fill="#1d62b5">g</text></svg>
<div class="t" style="left:641.4px;top:5.0px;font-size:12px;transform:scaleX(0.986);transform-origin:0 0;">View properties : Velocity Analysis</div>
<div class="t" style="left:1008px;top:3.5px;font-size:13px">?</div>
<svg class="a" style="left:1052px;top:5px" width="12" height="12"><path d="M.8.8l10 10M10.8.8l-10 10" stroke="#111" stroke-width="1.1"/></svg>
<div class="a" style="left:613px;top:27px;width:466px;height:28px;background:#f0f0f0"></div>
<div class="a" style="left:613px;top:54px;width:467px;height:728px;background:#fff;border:1px solid #d9d9d9;border-bottom:none"></div>
<div class="a" style="left:614.5px;top:30.5px;width:50px;height:24px;background:#f0f0f0;border:1px solid #d9d9d9;border-bottom:none"></div>
<div class="t" style="left:625.9px;top:38.0px;font-size:12px;transform:scaleX(0.969);transform-origin:0 0;">View</div>
<div class="a" style="left:664px;top:28px;width:62.5px;height:27px;background:#fff;border:1px solid #d9d9d9;border-bottom:none"></div>
<div class="t" style="left:675.3px;top:37.0px;font-size:12px;transform:scaleX(0.964);transform-origin:0 0;">Vista(s)</div>
<div class="a gh" style="left:625px;top:65px;width:444px"></div>
<svg class="a" style="left:630px;top:72px" width="8" height="8"><path d="M0 7.2h7.2V0z" fill="#222"/></svg>
<div class="t" style="left:641.4px;top:70.0px;font-size:12px;transform:scaleX(0.978);transform-origin:0 0;">Vista items</div>
<svg class="a" style="left:965px;top:66px" width="104" height="18" viewBox="965 66 104 18" fill="none" stroke-linecap="round"><path d="M969.5 75.5l2.5 3 5-6.5" stroke="#1553a8" stroke-width="1.6"/><ellipse cx="993" cy="70.5" rx="4" ry="1.7" stroke="#555" stroke-width="1"/><path d="M989 70.5v8c0 1 1.6 1.8 3.4 1.8M997 70.5v2.5M989 73.3c0 1 1.6 1.6 3.4 1.6M989 76c0 1 1.6 1.6 3.4 1.6" stroke="#555" stroke-width="1"/><rect x="994" y="74.5" width="6.5" height="6" fill="#333" stroke="none"/><path d="M995.5 74.5v-1.6h3v1.6" stroke="#333" stroke-width="1"/><path d="M1015 68.5v8M1011.8 72l3.2-3.8 3.2 3.8z" stroke="#1553a8" stroke-width="1.6" fill="#1553a8"/><path d="M1011 80.5h8.5" stroke="#333" stroke-width="1.6"/><path d="M1008.5 80.5h.2" stroke="#333" stroke-width="1.6"/><path d="M1033 69.5h8.5" stroke="#333" stroke-width="1.6"/><path d="M1030.5 69.5h.2" stroke="#333" stroke-width="1.6"/><path d="M1037 72v8M1033.8 77l3.2 3.8 3.2-3.8z" stroke="#1553a8" stroke-width="1.6" fill="#1553a8"/><path d="M1051.5 68.5l5 5" stroke="#333" stroke-width="1"/><ellipse cx="1060" cy="77" rx="3.4" ry="4.6" transform="rotate(-40 1060 77)" stroke="#333" stroke-width="1"/><path d="M1057 76l4.4-3.6" stroke="#333" stroke-width=".9"/></svg>
<div class="a" style="left:625px;top:86px;width:444px;height:157px;border:1px solid #c9c9c9;background:#fff"></div>
<div class="a th" style="left:626px;top:87px;width:442.5px;height:19px"></div>
<div class="a" style="left:851px;top:87px;width:1px;height:18px;background:#d5d5d5"></div>
<div class="t" style="left:628.6px;top:91.0px;font-size:12px;">Item name</div>
<div class="t" style="left:854.8px;top:91.0px;font-size:12px;transform:scaleX(1.021);transform-origin:0 0;">Module name</div>
<svg class="a" style="left:633px;top:112.5px" width="8" height="5"><path d="M0 0h7.4L3.7 4.4z" fill="#5a5a5a"/></svg>
<div class="t" style="left:649.2px;top:109.0px;font-size:12px;transform:scaleX(0.967);transform-origin:0 0;">Vista Items</div>
<svg class="a" style="left:652.5px;top:127.5px" width="8" height="5"><path d="M0 0h7.4L3.7 4.4z" fill="#5a5a5a"/></svg>
<div class="t" style="left:669.7px;top:124.0px;font-size:12px;transform:scaleX(0.923);transform-origin:0 0;white-space:pre;">Layer  #1</div>
<div class="a" style="left:626px;top:167px;width:442.5px;height:15px;background:#0078d7"></div>
<svg class="a" style="left:675px;top:141px" width="5" height="8"><path d="M0 0v7.4L4.4 3.7z" fill="#5a5a5a"/></svg>
<div class="a cb" style="left:690px;top:138px"></div><svg class="a" style="left:690px;top:138px" width="13" height="13"><path d="M2.8 6.2l2.4 3.6 4.6-7.6" fill="none" stroke="#000" stroke-width="1.7"/></svg>
<div class="t" style="left:710.6px;top:139.0px;font-size:12px;transform:scaleX(0.980);transform-origin:0 0;color:#000;">Current</div>
<div class="t" style="left:855.9px;top:139.0px;font-size:12px;transform:scaleX(1.022);transform-origin:0 0;color:#000;">Radon multiple attenuation by velocity</div>
<svg class="a" style="left:675px;top:156px" width="5" height="8"><path d="M0 0v7.4L4.4 3.7z" fill="#5a5a5a"/></svg>
<div class="a cb" style="left:690px;top:153px"></div><svg class="a" style="left:690px;top:153px" width="13" height="13"><path d="M2.8 6.2l2.4 3.6 4.6-7.6" fill="none" stroke="#000" stroke-width="1.7"/></svg>
<div class="t" style="left:710.6px;top:154.0px;font-size:12px;transform:scaleX(0.959);transform-origin:0 0;color:#000;">Velocity base</div>
<div class="t" style="left:855.9px;top:154.0px;font-size:12px;transform:scaleX(1.022);transform-origin:0 0;color:#000;">Radon multiple attenuation by velocity</div>
<svg class="a" style="left:675px;top:171px" width="5" height="8"><path d="M0 0v7.4L4.4 3.7z" fill="#1c1c1c"/></svg>
<div class="a cb" style="left:690px;top:168px"></div><svg class="a" style="left:690px;top:168px" width="13" height="13"><path d="M2.8 6.2l2.4 3.6 4.6-7.6" fill="none" stroke="#000" stroke-width="1.7"/></svg>
<div class="t" style="left:710.6px;top:169.0px;font-size:12px;transform:scaleX(1.005);transform-origin:0 0;color:#fff;">Velocity spectrim in</div>
<div class="t" style="left:855.9px;top:169.0px;font-size:12px;transform:scaleX(1.022);transform-origin:0 0;color:#fff;">Radon multiple attenuation by velocity</div>
<svg class="a" style="left:675px;top:186px" width="5" height="8"><path d="M0 0v7.4L4.4 3.7z" fill="#5a5a5a"/></svg>
<div class="a cb" style="left:690px;top:183px"></div>
<div class="t" style="left:710.6px;top:184.0px;font-size:12px;transform:scaleX(1.011);transform-origin:0 0;color:#000;">Velocity spectrim out</div>
<div class="t" style="left:855.9px;top:184.0px;font-size:12px;transform:scaleX(1.022);transform-origin:0 0;color:#000;">Radon multiple attenuation by velocity</div>
<div class="a" style="left:626px;top:228px;width:442.5px;height:14px;background:#f0f0f0"></div>
<div class="a" style="left:626px;top:228px;width:14px;height:14px;background:#f7f7f7;border-right:1px solid #dadada"></div>
<svg class="a" style="left:626px;top:228px" width="14" height="14"><path d="M8.5 3.5l-3.6 3.6 3.6 3.6z" fill="#555"/></svg>
<div class="a" style="left:1054px;top:228px;width:14px;height:14px;background:#f7f7f7"></div>
<svg class="a" style="left:1054px;top:228px" width="14" height="14"><path d="M5.5 3.5l3.6 3.6-3.6 3.6z" fill="#555"/></svg>
<div class="a gh" style="left:625px;top:249.5px;width:444px;height:19.5px"></div>
<svg class="a" style="left:630px;top:256px" width="8" height="8"><path d="M0 7.2h7.2V0z" fill="#222"/></svg>
<div class="t" style="left:641.4px;top:254.0px;font-size:12px;transform:scaleX(0.994);transform-origin:0 0;">Vista item properties</div>
<svg class="a" style="left:1050px;top:252px" width="16" height="14" fill="none"><path d="M3.2 5.5h6.2a3.2 3.2 0 010 6.4H5" stroke="#1553a8" stroke-width="1.5"/><path d="M5.6 2.6L2.4 5.5l3.2 2.9" stroke="#1553a8" stroke-width="1.5"/></svg>
<div class="a" style="left:625px;top:270px;width:444px;height:502.5px;border:1px solid #c9c9c9;background:#fff"></div>
<div class="a th" style="left:626px;top:271px;width:442.5px;height:18.5px"></div>
<div class="a" style="left:843.5px;top:271px;width:1px;height:18px;background:#d5d5d5"></div>
<div class="t" style="left:628.6px;top:275.0px;font-size:12px;transform:scaleX(0.987);transform-origin:0 0;">Name</div>
<div class="t" style="left:846.5px;top:275.0px;font-size:12px;transform:scaleX(0.953);transform-origin:0 0;">Value</div>
<div class="t" style="left:649.8px;top:295.0px;font-size:12px;transform:scaleX(0.949);transform-origin:0 0;">Transparency level</div>
<div class="t" style="left:847.2px;top:295.0px;font-size:12px;transform:scaleX(0.934);transform-origin:0 0;">255</div>
<div class="a" style="left:626px;top:311px;width:442.5px;height:6px;background:#e9e7e3"></div>
<div class="a" style="left:848px;top:314.5px;width:31px;height:2px;background:linear-gradient(90deg,#2030ff,#20c0ff,#30ff60,#ffe020,#ff3020,#ff20c0)"></div>
<div class="a mp"></div>
<div class="t" style="left:570.7px;top:328.0px;font-size:10.6px;transform:scaleX(0.912);transform-origin:0 0;font-weight:bold;">Module Properties</div>
<svg class="a" style="left:1036px;top:322px" width="97" height="22" viewBox="1036 322 97 22" fill="none" stroke="#444" stroke-width="1.1"><ellipse cx="1044" cy="327.5" rx="4.2" ry="1.8"/><path d="M1039.8 327.5v9c0 1.1 1.7 1.9 3.6 1.9M1048.2 327.5v3M1039.8 330.5c0 1.1 1.7 1.8 3.6 1.8M1039.8 333.5c0 1.1 1.7 1.8 3.6 1.8"/><rect x="1045" y="333" width="6.6" height="6" fill="#333" stroke="none"/><path d="M1046.6 333v-1.8h3.2v1.8"/><path d="M1056.5 325v15" stroke="#dcdcdc"/><path d="M1065.5 331l3 3.6 3-3.6M1084 329.5l4 3-4 3"/><path d="M1102.8 327.5h3.4v5h-3.4zM1101.6 332.6h5.8M1104.5 333v4.6" fill="#333"/><rect x="1118.5" y="328" width="9" height="9" rx="2"/><circle cx="1122" cy="333.4" r="2"/><circle cx="1124.2" cy="331.6" r="2"/></svg>
<div class="a" style="left:575px;top:351px;width:481.5px;height:18.5px;background:#fff;border:1px solid #c6c6c6;border-radius:2px"></div>
<div class="t" style="left:577.7px;top:356.0px;font-size:10.3px;transform:scaleX(0.903);transform-origin:0 0;font-style:italic;color:#8c8c8c;">Search Property</div>
<div class="a" style="left:1061px;top:354.5px;width:11.5px;height:11.5px;background:#fdfdfd;border:1px solid #cfcfcf"></div>
<div class="t" style="left:1077.5px;top:356.0px;font-size:10.3px;transform:scaleX(0.950);transform-origin:0 0;color:#9a9a9a;">Advanced</div>
<div class="mtab" style="left:575px;width:111px"></div>
<div class="t" style="left:608.4px;top:382.0px;font-size:10.3px;transform:scaleX(0.960);transform-origin:0 0;color:#000;">Input data</div>
<div class="mtab" style="left:795.5px;width:111px"></div>
<div class="t" style="left:833.1px;top:382.0px;font-size:10.3px;transform:scaleX(0.924);transform-origin:0 0;color:#000;">Settings</div>
<div class="mtab" style="left:906.5px;width:109px"></div>
<div class="t" style="left:933.9px;top:382.0px;font-size:10.3px;transform:scaleX(0.975);transform-origin:0 0;color:#000;">Output data</div>
<div class="mtab" style="left:1015.5px;width:110.5px"></div>
<div class="t" style="left:1044.5px;top:382.0px;font-size:10.3px;color:#9a9a9a;">Information</div>
<div class="mtab" style="left:685.5px;top:374px;width:110.5px;height:23px;background:#f7f7f7;border-bottom:none"></div>
<div class="t" style="left:716.4px;top:382.0px;font-size:10.3px;transform:scaleX(0.904);transform-origin:0 0;">Parameters</div>
<div class="a" style="left:575.5px;top:401.5px;width:550.5px;height:303.5px;background:#fff;border:1px solid #c4c4c4"></div>
<div class="t" style="left:595.5px;top:423.0px;font-size:10.3px;transform:scaleX(0.959);transform-origin:0 0;">Time-Velocity factor</div>
<svg class="a" style="left:812.5px;top:418.8px" width="20" height="16" fill="none"><rect x=".5" y=".5" width="18" height="14.5" rx="2" fill="#fdfdfd" stroke="#c8c8c8"/><path d="M4 3.5h11v8.5H4zM4 7.7h11M7.7 3.5v8.5M11.3 3.5v8.5" stroke="#444" stroke-width="1"/></svg>
<div class="t" style="left:953.6px;top:423.0px;font-size:10.3px;transform:scaleX(0.812);transform-origin:0 0;">NOT SET</div>
<div class="a" style="left:576.5px;top:434.76px;width:537.5px;height:16.46px;background:#e9e7e3"></div>
<div class="t" style="left:595.5px;top:439.0px;font-size:10.3px;transform:scaleX(0.965);transform-origin:0 0;">Enable QC visualization</div>
<div class="a" style="left:814px;top:437.3px;width:11.5px;height:11.5px;background:#fff;border:1px solid #bdbdbd"></div>
<div class="t" style="left:953.6px;top:439.0px;font-size:10.3px;transform:scaleX(0.812);transform-origin:0 0;">NOT SET</div>
<svg class="a" style="left:581.5px;top:457.7px" width="7" height="5"><path d="M0 0h6.6L3.3 3.9z" fill="#5a5a5a"/></svg>
<div class="t" style="left:595.5px;top:456.0px;font-size:10.3px;transform:scaleX(0.965);transform-origin:0 0;">Radon parameters</div>
<div class="a" style="left:576.5px;top:467.68px;width:537.5px;height:16.46px;background:#e9e7e3"></div>
<div class="t" style="left:611.2px;top:472.0px;font-size:10.3px;transform:scaleX(0.965);transform-origin:0 0;">P min &lt;ms/m&gt;</div>
<div class="t" style="left:814.7px;top:472.0px;font-size:10.3px;transform:scaleX(0.965);transform-origin:0 0;">-200</div>
<div class="t" style="left:953.6px;top:472.0px;font-size:10.3px;transform:scaleX(0.812);transform-origin:0 0;">NOT SET</div>
<div class="t" style="left:611.2px;top:489.0px;font-size:10.3px;transform:scaleX(0.965);transform-origin:0 0;">P max &lt;ms/m&gt;</div>
<div class="t" style="left:814.7px;top:489.0px;font-size:10.3px;transform:scaleX(0.965);transform-origin:0 0;">200</div>
<div class="t" style="left:953.6px;top:489.0px;font-size:10.3px;transform:scaleX(0.812);transform-origin:0 0;">NOT SET</div>
<div class="a" style="left:576.5px;top:500.60px;width:537.5px;height:16.46px;background:#e9e7e3"></div>
<div class="t" style="left:611.2px;top:505.0px;font-size:10.3px;transform:scaleX(0.965);transform-origin:0 0;">Delta P &lt;ms/m&gt;</div>
<div class="t" style="left:814.7px;top:505.0px;font-size:10.3px;transform:scaleX(0.965);transform-origin:0 0;">2</div>
<div class="t" style="left:953.6px;top:505.0px;font-size:10.3px;transform:scaleX(0.812);transform-origin:0 0;">NOT SET</div>
<div class="t" style="left:611.2px;top:521.0px;font-size:10.3px;transform:scaleX(0.965);transform-origin:0 0;">Taper P &lt;%&gt;</div>
<div class="t" style="left:814.7px;top:521.0px;font-size:10.3px;transform:scaleX(0.786);transform-origin:0 0;">10</div>
<div class="t" style="left:953.6px;top:521.0px;font-size:10.3px;transform:scaleX(0.812);transform-origin:0 0;">NOT SET</div>
<div class="a" style="left:576.5px;top:533.52px;width:537.5px;height:16.46px;background:#e9e7e3"></div>
<div class="t" style="left:611.2px;top:538.0px;font-size:10.3px;transform:scaleX(0.965);transform-origin:0 0;">Taper Tau &lt;%&gt;</div>
<div class="t" style="left:814.7px;top:538.0px;font-size:10.3px;transform:scaleX(0.786);transform-origin:0 0;">10</div>
<div class="t" style="left:953.6px;top:538.0px;font-size:10.3px;transform:scaleX(0.812);transform-origin:0 0;">NOT SET</div>
<svg class="a" style="left:581.5px;top:556.5px" width="7" height="5"><path d="M0 0h6.6L3.3 3.9z" fill="#5a5a5a"/></svg>
<div class="t" style="left:595.5px;top:554.0px;font-size:10.3px;transform:scaleX(0.965);transform-origin:0 0;">Attenuation</div>
<div class="a" style="left:576.5px;top:566.44px;width:537.5px;height:16.46px;background:#e9e7e3"></div>
<div class="t" style="left:611.2px;top:571.0px;font-size:10.3px;transform:scaleX(0.965);transform-origin:0 0;">Taper T1 &lt;ms&gt;</div>
<div class="t" style="left:814.7px;top:571.0px;font-size:10.3px;transform:scaleX(0.965);transform-origin:0 0;">0</div>
<div class="t" style="left:953.6px;top:571.0px;font-size:10.3px;transform:scaleX(0.812);transform-origin:0 0;">NOT SET</div>
<div class="t" style="left:611.2px;top:587.0px;font-size:10.3px;transform:scaleX(0.965);transform-origin:0 0;">Taper T2 &lt;ms&gt;</div>
<div class="t" style="left:814.7px;top:587.0px;font-size:10.3px;transform:scaleX(0.965);transform-origin:0 0;">0</div>
<div class="t" style="left:953.6px;top:587.0px;font-size:10.3px;transform:scaleX(0.812);transform-origin:0 0;">NOT SET</div>
<div class="a" style="left:576.5px;top:599.36px;width:537.5px;height:16.46px;background:#e9e7e3"></div>
<div class="t" style="left:611.2px;top:604.0px;font-size:10.3px;transform:scaleX(0.965);transform-origin:0 0;">Taper T3 &lt;ms&gt;</div>
<div class="t" style="left:814.7px;top:604.0px;font-size:10.3px;transform:scaleX(0.965);transform-origin:0 0;">0</div>
<div class="t" style="left:953.6px;top:604.0px;font-size:10.3px;transform:scaleX(0.812);transform-origin:0 0;">NOT SET</div>
<div class="t" style="left:611.2px;top:620.0px;font-size:10.3px;transform:scaleX(0.965);transform-origin:0 0;">Taper T4 &lt;ms&gt;</div>
<div class="t" style="left:814.7px;top:620.0px;font-size:10.3px;transform:scaleX(0.965);transform-origin:0 0;">0</div>
<div class="t" style="left:953.6px;top:620.0px;font-size:10.3px;transform:scaleX(0.812);transform-origin:0 0;">NOT SET</div>
<div class="a" style="left:576.5px;top:632.28px;width:537.5px;height:16.46px;background:#e9e7e3"></div>
<svg class="a" style="left:581.5px;top:638.8px" width="7" height="5"><path d="M0 0h6.6L3.3 3.9z" fill="#5a5a5a"/></svg>
<div class="t" style="left:595.5px;top:637.0px;font-size:10.3px;transform:scaleX(0.944);transform-origin:0 0;">Velocity</div>
<div class="t" style="left:953.6px;top:637.0px;font-size:10.3px;transform:scaleX(0.812);transform-origin:0 0;">NOT SET</div>
<div class="t" style="left:611.2px;top:653.0px;font-size:10.3px;transform:scaleX(0.954);transform-origin:0 0;">Stretch factor &lt;%&gt;</div>
<div class="t" style="left:814.7px;top:653.0px;font-size:10.3px;transform:scaleX(0.860);transform-origin:0 0;">1000</div>
<div class="t" style="left:953.6px;top:653.0px;font-size:10.3px;transform:scaleX(0.812);transform-origin:0 0;">NOT SET</div>
<div class="a" style="left:576.5px;top:665.20px;width:537.5px;height:16.46px;background:#e9e7e3"></div>
<div class="t" style="left:611.2px;top:670.0px;font-size:10.3px;transform:scaleX(0.951);transform-origin:0 0;">Smoothing parameter Y velocity &lt;Samples&gt;</div>
<div class="t" style="left:814.7px;top:670.0px;font-size:10.3px;transform:scaleX(0.786);transform-origin:0 0;">10</div>
<div class="t" style="left:953.6px;top:670.0px;font-size:10.3px;transform:scaleX(0.812);transform-origin:0 0;">NOT SET</div>
<div class="a" style="left:0;top:681.7px;width:1133px;height:10.5px;overflow:hidden"><div style="position:absolute;left:0;top:-681.7px"><div class="t" style="left:611.2px;top:686.0px;font-size:10.3px;transform:scaleX(0.957);transform-origin:0 0;">V0 &lt;m/s&gt;</div></div></div>
<div class="a" style="left:0;top:681.7px;width:1133px;height:10.5px;overflow:hidden"><div style="position:absolute;left:0;top:-681.7px"><div class="t" style="left:814.7px;top:686.0px;font-size:10.3px;transform:scaleX(0.860);transform-origin:0 0;">2892</div></div></div>
<div class="a" style="left:0;top:681.7px;width:1133px;height:10.5px;overflow:hidden"><div style="position:absolute;left:0;top:-681.7px"><div class="t" style="left:953.6px;top:686.0px;font-size:10.3px;transform:scaleX(0.812);transform-origin:0 0;">NOT SET</div></div></div>
<div class="a" style="left:576.5px;top:402.5px;width:537.5px;height:15.5px;background:linear-gradient(#fff,#f4f4f4);border-bottom:1px solid #dadada"></div>
<div class="a" style="left:812px;top:402.5px;width:1px;height:15px;background:#dcdcdc"></div>
<div class="a" style="left:950.5px;top:402.5px;width:1px;height:15px;background:#dcdcdc"></div>
<div class="t" style="left:577.7px;top:406.0px;font-size:10.3px;transform:scaleX(0.965);transform-origin:0 0;">Name</div>
<div class="t" style="left:814.0px;top:406.0px;font-size:10.3px;transform:scaleX(0.880);transform-origin:0 0;">Value</div>
<div class="t" style="left:953.3px;top:406.0px;font-size:10.3px;transform:scaleX(0.884);transform-origin:0 0;">Reference</div>
<div class="a" style="left:1114px;top:402.5px;width:11px;height:290.5px;background:#e4e4e4;border-left:1px solid #cfcfcf"></div>
<div class="a" style="left:1114px;top:402.5px;width:11px;height:15.5px;background:#f4f4f4"></div>
<div class="a" style="left:1114px;top:680px;width:11px;height:13px;background:#f4f4f4"></div>
<div class="a" style="left:1114px;top:418px;width:11px;height:120.5px;background:#fbfbfb;border:1px solid #e4e4e4;border-top:none"></div>
<svg class="a" style="left:1114px;top:402.5px" width="11" height="13"><path d="M2.2 8.4l3.3-3.4 3.3 3.4z" fill="#555"/></svg>
<svg class="a" style="left:1114px;top:681px" width="11" height="12"><path d="M2.2 4l3.3 3.4L8.8 4z" fill="#555"/></svg>
<div class="a" style="left:576.5px;top:693px;width:548.5px;height:11.5px;background:#f4f4f4;border-top:1px solid #dcdcdc"></div>
<div class="a" style="left:588px;top:694px;width:253px;height:10.5px;background:#fbfbfb;border:1px solid #e2e2e2"></div>
<div class="a" style="left:841px;top:694px;width:254px;height:10.5px;background:#e2e2e2"></div>
<div class="a" style="left:1113.5px;top:694px;width:1px;height:10.5px;background:#dcdcdc"></div>
<svg class="a" style="left:576.5px;top:693px" width="11" height="11"><path d="M7 2.4L3.6 5.6 7 8.8z" fill="#555"/></svg>
<svg class="a" style="left:1102px;top:693.5px" width="11" height="11"><path d="M4 2.4l3.4 3.2L4 8.8z" fill="#555"/></svg>
<div class="a" style="left:567.5px;top:713px;width:562.5px;height:1px;background:#d6d6d6"></div>
<div class="btab" style="left:569px;width:74px"></div>
<div class="t" style="left:577.9px;top:718.0px;font-size:10.3px;transform:scaleX(0.947);transform-origin:0 0;">Tracking info</div>
<div class="btab" style="left:643px;width:64px"></div>
<div class="t" style="left:653.4px;top:718.0px;font-size:10.3px;transform:scaleX(0.942);transform-origin:0 0;">Help View</div>
<div class="btab" style="left:707px;width:69.5px"></div>
<div class="t" style="left:716.9px;top:718.0px;font-size:10.3px;transform:scaleX(0.916);transform-origin:0 0;">Graph View</div>
<div class="btab" style="left:776.5px;top:713px;width:99px;height:20px;background:#fafafa"></div>
<div class="t" style="left:786.5px;top:720.0px;font-size:10.3px;transform:scaleX(0.951);transform-origin:0 0;">Module Properties</div>
<div class="a dlg"></div>
<div class="a" style="left:647.5px;top:440px;width:364px;height:26px;background:#fff"></div>
<svg class="a" style="left:655px;top:446.5px" width="12.35" height="10.45" viewBox="0 0 13 11"><path d="M4.2 1.2C1.6 2.6.4 5.6 1.6 8.4" fill="none" stroke="#f58220" stroke-width="1.4" stroke-linecap="round"/><path d="M11.6 1.6c1 3.2-1.2 6.6-5.6 8" fill="none" stroke="#f58220" stroke-width="1.5" stroke-linecap="round"/><text x="3.6" y="7.6" font-family="Liberation Sans,sans-serif" font-weight="bold" font-size="8.5" fill="#1d62b5">g</text></svg>
<div class="t" style="left:670.8px;top:447.0px;font-size:9.6px;transform:scaleX(1.043);transform-origin:0 0;">gNavigator</div>
<div class="t" style="left:952.1px;top:447.0px;font-size:11.5px;">?</div>
<svg class="a" style="left:988px;top:446px" width="10" height="10"><path d="M.6.6l8.6 8.6M9.2.6L.6 9.2" stroke="#111" stroke-width="1"/></svg>
<div class="a" style="left:648px;top:466.5px;width:362.5px;height:151px;background:#fff;border:1px solid #c8c8c8"></div>
<div class="dh" style="left:649px;top:467.5px;width:9px;height:26.7px;border-right:none"></div>
<div class="dh" style="left:658px;top:467.5px;width:97.5px;height:26.7px"></div>
<div class="dh" style="left:755.5px;top:467.5px;width:142.5px;height:26.7px"></div>
<div class="dh" style="left:898px;top:467.5px;width:112px;height:26.7px;border-right:none"></div>
<div class="t" style="left:681.9px;top:477.0px;font-size:10.3px;transform:scaleX(0.951);transform-origin:0 0;">Time &lt;ms&gt;</div>
<div class="t" style="left:774.8px;top:470.0px;font-size:10.3px;transform:scaleX(0.955);transform-origin:0 0;">Percent of velocity &lt;%&gt;</div>
<div class="t" style="left:941.9px;top:477.0px;font-size:10.3px;transform:scaleX(0.974);transform-origin:0 0;">Actions</div>
<div class="dh" style="left:649px;top:494.2px;width:9px;height:24.8px"></div>
<div class="t" style="left:651.6px;top:502.0px;font-size:10.3px;transform:scaleX(0.900);transform-origin:0 0;">1</div>
<div class="a" style="left:658px;top:518.5px;width:352px;height:1px;background:#d9d9d9"></div>
<div class="t" style="left:661.2px;top:502.0px;font-size:10.3px;transform:scaleX(0.865);transform-origin:0 0;">100</div>
<div class="t" style="left:758.5px;top:502.0px;font-size:10.3px;transform:scaleX(0.865);transform-origin:0 0;">90</div>
<svg class="a" style="left:898px;top:497.59999999999997px" width="72" height="18" viewBox="0 0 72 18" fill="none"><rect x=".5" y=".5" width="16" height="16.5" rx="3" fill="#fdfdfd" stroke="#cfcfcf"/><circle cx="8.5" cy="8.8" r="6.2" fill="#15479b"/><path d="M8.5 5.4v6.8M5.1 8.8h6.8" stroke="#fff" stroke-width="1.7"/><rect x="17.5" y=".5" width="16" height="16.5" rx="3" fill="#fdfdfd" stroke="#cfcfcf"/><rect x="20" y="3" width="4.6" height="4.6" fill="#fff" stroke="#444" stroke-width=".9"/><rect x="19.6" y="9.8" width="5.6" height="5.6" fill="#333"/><path d="M26.5 13.5c4.5 0 5-6.5 1-7.5" stroke="#15479b" stroke-width="1.3"/><path d="M29.6 4.4l-3 1.6 2.4 2.2" stroke="#15479b" stroke-width="1.2"/><rect x="34.5" y=".5" width="16" height="16.5" rx="3" fill="#fdfdfd" stroke="#cfcfcf"/><rect x="36.6" y="2.6" width="5.6" height="5.6" fill="#333"/><rect x="37" y="10.4" width="4.6" height="4.6" fill="#fff" stroke="#444" stroke-width=".9"/><path d="M43.5 4.5c4.5 0 5 6.5 1 7.5" stroke="#15479b" stroke-width="1.3"/><path d="M46.6 13.6l-3-1.6 2.4-2.2" stroke="#15479b" stroke-width="1.2"/><rect x="51.5" y=".5" width="16" height="16.5" rx="3" fill="#fdfdfd" stroke="#cfcfcf"/><circle cx="59.5" cy="8.8" r="6.2" fill="#ee6c1c"/><path d="M56 8.8h7" stroke="#fff" stroke-width="2"/></svg>
<div class="dh" style="left:649px;top:519.0px;width:9px;height:24.8px"></div>
<div class="t" style="left:651.6px;top:527.0px;font-size:10.3px;transform:scaleX(0.900);transform-origin:0 0;">2</div>
<div class="a" style="left:658px;top:543.3px;width:352px;height:1px;background:#d9d9d9"></div>
<div class="t" style="left:661.2px;top:527.0px;font-size:10.3px;transform:scaleX(0.865);transform-origin:0 0;">1100</div>
<div class="t" style="left:758.5px;top:527.0px;font-size:10.3px;transform:scaleX(0.865);transform-origin:0 0;">95</div>
<svg class="a" style="left:898px;top:522.4px" width="72" height="18" viewBox="0 0 72 18" fill="none"><rect x=".5" y=".5" width="16" height="16.5" rx="3" fill="#fdfdfd" stroke="#cfcfcf"/><circle cx="8.5" cy="8.8" r="6.2" fill="#15479b"/><path d="M8.5 5.4v6.8M5.1 8.8h6.8" stroke="#fff" stroke-width="1.7"/><rect x="17.5" y=".5" width="16" height="16.5" rx="3" fill="#fdfdfd" stroke="#cfcfcf"/><rect x="20" y="3" width="4.6" height="4.6" fill="#fff" stroke="#444" stroke-width=".9"/><rect x="19.6" y="9.8" width="5.6" height="5.6" fill="#333"/><path d="M26.5 13.5c4.5 0 5-6.5 1-7.5" stroke="#15479b" stroke-width="1.3"/><path d="M29.6 4.4l-3 1.6 2.4 2.2" stroke="#15479b" stroke-width="1.2"/><rect x="34.5" y=".5" width="16" height="16.5" rx="3" fill="#fdfdfd" stroke="#cfcfcf"/><rect x="36.6" y="2.6" width="5.6" height="5.6" fill="#333"/><rect x="37" y="10.4" width="4.6" height="4.6" fill="#fff" stroke="#444" stroke-width=".9"/><path d="M43.5 4.5c4.5 0 5 6.5 1 7.5" stroke="#15479b" stroke-width="1.3"/><path d="M46.6 13.6l-3-1.6 2.4-2.2" stroke="#15479b" stroke-width="1.2"/><rect x="51.5" y=".5" width="16" height="16.5" rx="3" fill="#fdfdfd" stroke="#cfcfcf"/><circle cx="59.5" cy="8.8" r="6.2" fill="#ee6c1c"/><path d="M56 8.8h7" stroke="#fff" stroke-width="2"/></svg>
<div class="dh" style="left:649px;top:543.8px;width:9px;height:24.8px"></div>
<div class="t" style="left:651.6px;top:552.0px;font-size:10.3px;transform:scaleX(0.900);transform-origin:0 0;">3</div>
<div class="a" style="left:658px;top:568.1px;width:352px;height:1px;background:#d9d9d9"></div>
<div class="t" style="left:661.2px;top:552.0px;font-size:10.3px;transform:scaleX(0.865);transform-origin:0 0;">1200</div>
<div class="t" style="left:758.5px;top:552.0px;font-size:10.3px;transform:scaleX(0.865);transform-origin:0 0;">90</div>
<svg class="a" style="left:898px;top:547.1999999999999px" width="72" height="18" viewBox="0 0 72 18" fill="none"><rect x=".5" y=".5" width="16" height="16.5" rx="3" fill="#fdfdfd" stroke="#cfcfcf"/><circle cx="8.5" cy="8.8" r="6.2" fill="#15479b"/><path d="M8.5 5.4v6.8M5.1 8.8h6.8" stroke="#fff" stroke-width="1.7"/><rect x="17.5" y=".5" width="16" height="16.5" rx="3" fill="#fdfdfd" stroke="#cfcfcf"/><rect x="20" y="3" width="4.6" height="4.6" fill="#fff" stroke="#444" stroke-width=".9"/><rect x="19.6" y="9.8" width="5.6" height="5.6" fill="#333"/><path d="M26.5 13.5c4.5 0 5-6.5 1-7.5" stroke="#15479b" stroke-width="1.3"/><path d="M29.6 4.4l-3 1.6 2.4 2.2" stroke="#15479b" stroke-width="1.2"/><rect x="34.5" y=".5" width="16" height="16.5" rx="3" fill="#fdfdfd" stroke="#cfcfcf"/><rect x="36.6" y="2.6" width="5.6" height="5.6" fill="#333"/><rect x="37" y="10.4" width="4.6" height="4.6" fill="#fff" stroke="#444" stroke-width=".9"/><path d="M43.5 4.5c4.5 0 5 6.5 1 7.5" stroke="#15479b" stroke-width="1.3"/><path d="M46.6 13.6l-3-1.6 2.4-2.2" stroke="#15479b" stroke-width="1.2"/><rect x="51.5" y=".5" width="16" height="16.5" rx="3" fill="#fdfdfd" stroke="#cfcfcf"/><circle cx="59.5" cy="8.8" r="6.2" fill="#ee6c1c"/><path d="M56 8.8h7" stroke="#fff" stroke-width="2"/></svg>
<div class="dh" style="left:649px;top:568.6px;width:9px;height:24.8px"></div>
<div class="t" style="left:651.6px;top:577.0px;font-size:10.3px;transform:scaleX(0.900);transform-origin:0 0;">4</div>
<div class="a" style="left:658px;top:592.9px;width:352px;height:1px;background:#d9d9d9"></div>
<div class="t" style="left:661.2px;top:577.0px;font-size:10.3px;transform:scaleX(0.865);transform-origin:0 0;">1500</div>
<div class="t" style="left:758.5px;top:577.0px;font-size:10.3px;transform:scaleX(0.865);transform-origin:0 0;">80</div>
<svg class="a" style="left:898px;top:572.0px" width="72" height="18" viewBox="0 0 72 18" fill="none"><rect x=".5" y=".5" width="16" height="16.5" rx="3" fill="#fdfdfd" stroke="#cfcfcf"/><circle cx="8.5" cy="8.8" r="6.2" fill="#15479b"/><path d="M8.5 5.4v6.8M5.1 8.8h6.8" stroke="#fff" stroke-width="1.7"/><rect x="17.5" y=".5" width="16" height="16.5" rx="3" fill="#fdfdfd" stroke="#cfcfcf"/><rect x="20" y="3" width="4.6" height="4.6" fill="#fff" stroke="#444" stroke-width=".9"/><rect x="19.6" y="9.8" width="5.6" height="5.6" fill="#333"/><path d="M26.5 13.5c4.5 0 5-6.5 1-7.5" stroke="#15479b" stroke-width="1.3"/><path d="M29.6 4.4l-3 1.6 2.4 2.2" stroke="#15479b" stroke-width="1.2"/><rect x="34.5" y=".5" width="16" height="16.5" rx="3" fill="#fdfdfd" stroke="#cfcfcf"/><rect x="36.6" y="2.6" width="5.6" height="5.6" fill="#333"/><rect x="37" y="10.4" width="4.6" height="4.6" fill="#fff" stroke="#444" stroke-width=".9"/><path d="M43.5 4.5c4.5 0 5 6.5 1 7.5" stroke="#15479b" stroke-width="1.3"/><path d="M46.6 13.6l-3-1.6 2.4-2.2" stroke="#15479b" stroke-width="1.2"/><rect x="51.5" y=".5" width="16" height="16.5" rx="3" fill="#fdfdfd" stroke="#cfcfcf"/><circle cx="59.5" cy="8.8" r="6.2" fill="#ee6c1c"/><path d="M56 8.8h7" stroke="#fff" stroke-width="2"/></svg>
<div class="a" style="left:755px;top:494px;width:1px;height:99.5px;background:#d9d9d9"></div>
<div class="a" style="left:897.5px;top:494px;width:1px;height:99.5px;background:#d9d9d9"></div>
<div class="a" style="left:649px;top:593.4px;width:9px;height:12.6px;background:#f0f0f0;border-right:1px solid #d0d0d0"></div>
<div class="a" style="left:649px;top:606px;width:361px;height:11px;background:#f4f4f4"></div>
<div class="a" style="left:660px;top:606px;width:225px;height:11px;background:#fbfbfb;border:1px solid #e2e2e2"></div>
<div class="a" style="left:885px;top:606px;width:114px;height:11px;background:#e6e6e6"></div>
<svg class="a" style="left:649px;top:606px" width="11" height="11"><path d="M7 2.4L3.6 5.6 7 8.8z" fill="#555"/></svg>
<svg class="a" style="left:999px;top:606px" width="11" height="11"><path d="M4 2.4l3.4 3.2L4 8.8z" fill="#555"/></svg>
<div class="a" style="left:944.3px;top:619px;width:66.4px;height:18.8px;border:1.5px solid #6fbaf3;background:linear-gradient(#fefefe,#e8eef5);border-radius:3px"></div>
<div class="t" style="left:971.0px;top:624.0px;font-size:10.3px;transform:scaleX(0.907);transform-origin:0 0;">OK</div>
<svg class="a" style="left:574px;top:735px" width="12" height="12"><path d="M3.5 1.5l4 3.6-4 3.6z" fill="#444"/></svg>
<div class="a" style="left:573px;top:737px;width:1px;height:9px;background:#d5d5d5"></div>
<svg class="a" style="left:0;top:0" width="1133" height="782" viewBox="0 0 1133 782">
<path d="M176.0 208.2L266.6 218.5" stroke="#000" stroke-width="1.9" fill="none"/><path d="M276.0 219.6L263.9 222.4L266.6 218.5L264.9 214.1Z" fill="#000"/>
<path d="M176.0 208.2L803.2 462.4" stroke="#000" stroke-width="1.9" fill="none"/><path d="M812.0 466.0L799.6 465.5L803.2 462.4L802.7 457.7Z" fill="#000"/>
<path d="M378.5 128.0L325.8 171.2" stroke="#000" stroke-width="1.9" fill="none"/><path d="M318.5 177.2L324.9 166.5L325.8 171.2L330.2 173.0Z" fill="#000"/>
<path d="M887.0 240.5L710.0 181.2" stroke="#000" stroke-width="1.9" fill="none"/><path d="M701.0 178.2L713.4 177.9L710.0 181.2L710.8 185.9Z" fill="#000"/>
<path d="M144.0 571.0L173.2 477.6" stroke="#000" stroke-width="1.9" fill="none"/><path d="M176.0 468.5L176.5 480.9L173.2 477.6L168.5 478.4Z" fill="#000"/>
</svg>
<div class="co" style="left:90.6px;top:112px;width:160.9px;height:95.5px"></div>
<div class="ct" style="left:110px;top:125.5px"><b style="color:#f2593a">Red line</b> is the<br>percent of the<br>input velocity</div>
<div class="co" style="left:378px;top:41px;width:162px;height:95.6px"></div>
<div class="ct" style="left:398.5px;top:54.5px"><b style="color:#bf8f00">Orange line</b> is<br>100% of the<br>input velocity</div>
<div class="co" style="left:886.5px;top:220.3px;width:161.7px;height:69.3px"></div>
<div class="ct" style="left:904px;top:232.3px">Input velocity<br>spectrum</div>
<div class="co" style="left:12px;top:571.4px;width:208.3px;height:118.8px"></div>
<div class="ct" style="left:33.6px;top:586.6px">Behind this <b style="color:#f2593a">red line</b><br>the entire left side of<br>the spectrum is for<br>attenuation</div>
</body></html>
